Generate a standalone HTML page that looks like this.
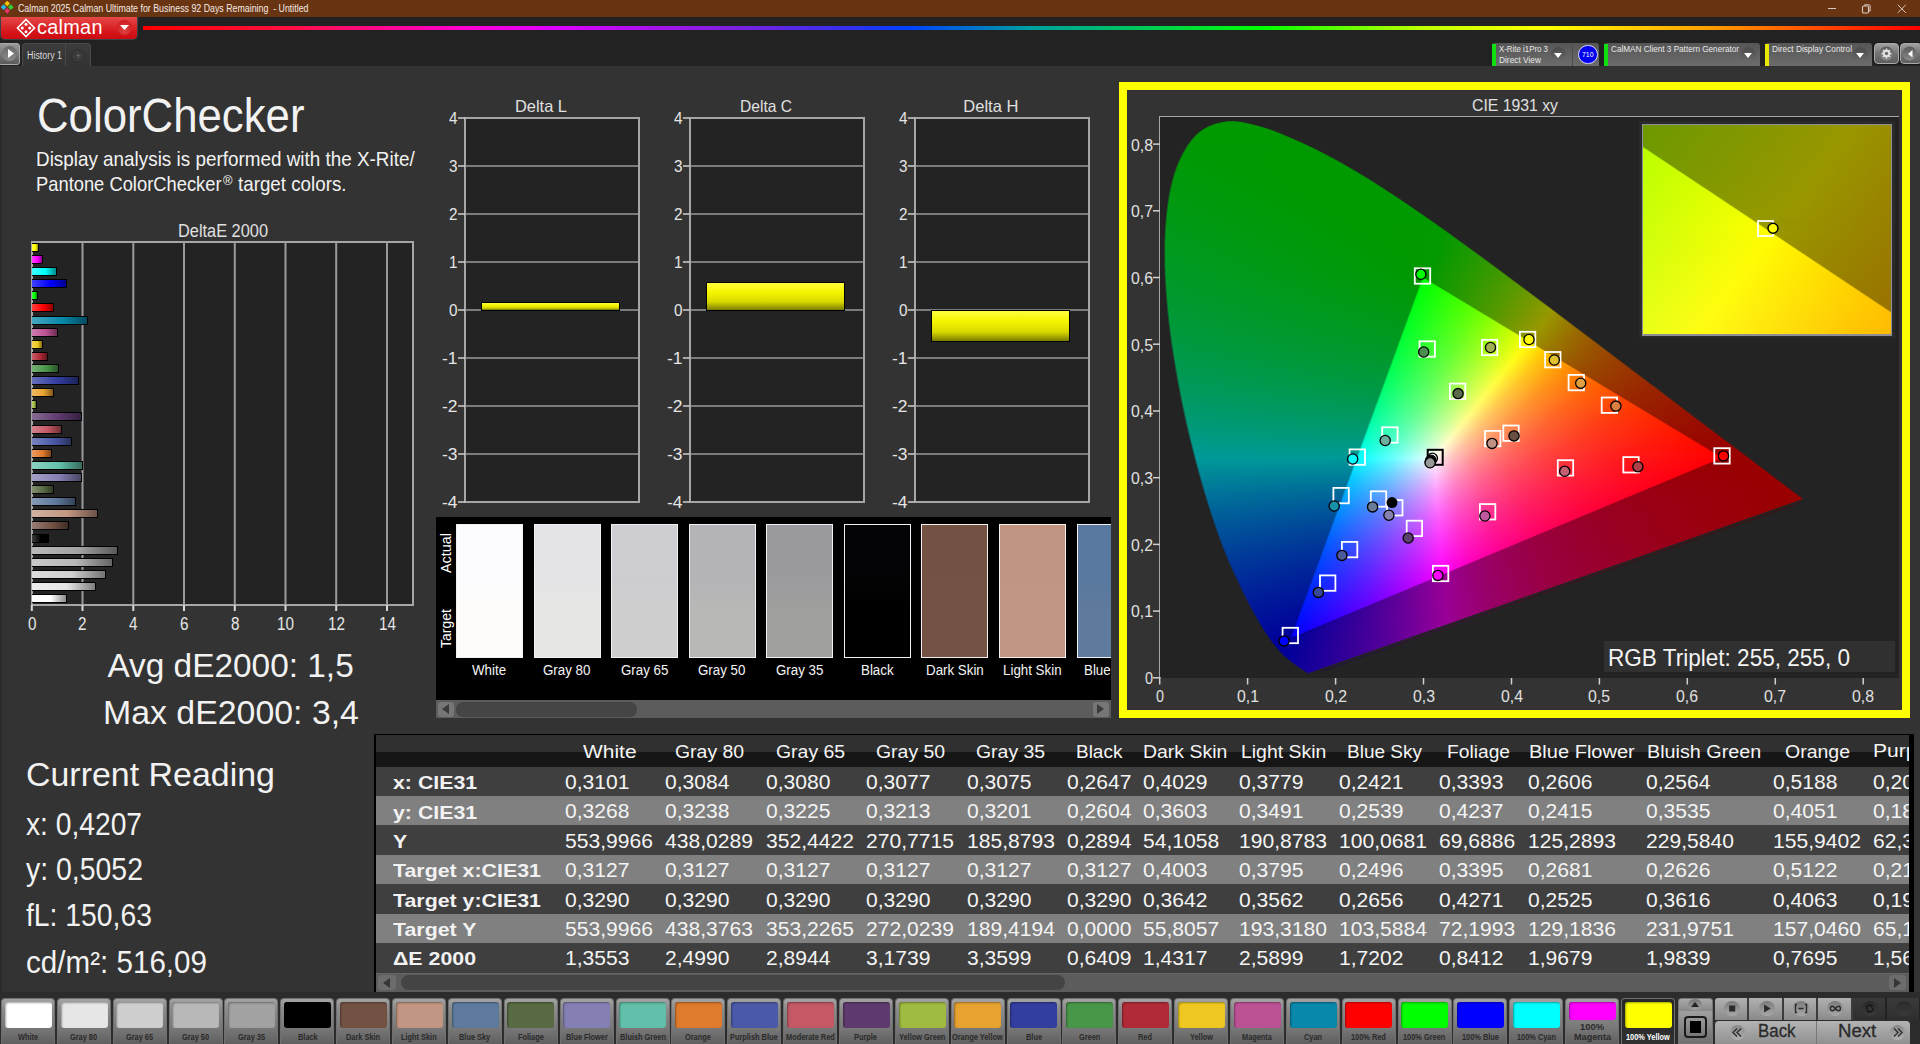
<!DOCTYPE html><html><head><meta charset="utf-8"><title>Calman</title><style>
*{margin:0;padding:0;box-sizing:border-box}
html,body{width:1920px;height:1044px;overflow:hidden;background:#333;font-family:"Liberation Sans",sans-serif}
.a{position:absolute}
.t{position:absolute;white-space:nowrap;transform-origin:0 0;font-family:"Liberation Sans",sans-serif}
svg{position:absolute;overflow:visible}
.cs{position:absolute;left:1161px;width:738px;height:1px}
.ci{position:absolute;left:1643px;width:248px;height:1px}
</style></head><body>
<div class="a" style="left:0;top:0;width:1920px;height:17px;background:#693412"></div>
<svg style="left:0;top:0" width="16" height="16" viewBox="0 0 16 16"><rect x="5.2" y="1.6" width="4" height="4" fill="#f2c500" transform="rotate(45 7.2 3.6)"/><rect x="1.6" y="5.2" width="4" height="4" fill="#28b8f0" transform="rotate(45 3.6 7.2)"/><rect x="8.8" y="5.2" width="4" height="4" fill="#30d030" transform="rotate(45 10.8 7.2)"/><rect x="5.2" y="8.8" width="4" height="4" fill="#e8306a" transform="rotate(45 7.2 10.8)"/></svg>
<div class="t" style="left:17.5px;top:3.4px;font-size:10.5px;line-height:10.5px;color:#f4ebe4;transform:scaleX(0.8394);">Calman 2025 Calman Ultimate for Business 92 Days Remaining&#160; - Untitled</div>
<div class="a" style="left:1828px;top:7.5px;width:7.5px;height:1px;background:#dccbbf"></div>
<svg style="left:1861px;top:3px" width="11" height="11"><rect x="1.5" y="3" width="6" height="7" rx="1.2" fill="none" stroke="#dccbbf" stroke-width="1.1"/><path d="M3.5 2.6V1.8h4.6a1 1 0 0 1 1 1v5.2H8" fill="none" stroke="#dccbbf" stroke-width="1"/></svg>
<svg style="left:1897px;top:3.5px" width="10" height="10"><path d="M0.8 0.8L8.8 8.8M8.8 0.8L0.8 8.8" stroke="#dccbbf" stroke-width="1"/></svg>
<div class="a" style="left:0;top:17px;width:1920px;height:49px;background:#222"></div>
<div class="a" style="left:0;top:17px;width:138px;height:23px;background:linear-gradient(#e64848,#d41418 70%,#cc0c10);border:1px solid #3a4448;border-top:none;border-radius:0 0 5px 5px"></div>
<svg style="left:16px;top:18px" width="20" height="20" viewBox="0 0 20 20" fill="none" stroke="#fff" stroke-width="1.6"><path d="M10 1.5L18.5 10L10 18.5L1.5 10Z"/><circle cx="10" cy="6.3" r="1.5" fill="#fff" stroke="none"/><circle cx="6.3" cy="10" r="1.5" fill="#fff" stroke="none"/><circle cx="13.7" cy="10" r="1.5" fill="#fff" stroke="none"/><circle cx="10" cy="13.7" r="1.5" fill="#fff" stroke="none"/></svg>
<div class="t" style="left:37.0px;top:16.7px;font-size:20.0px;line-height:20.0px;color:#fff;transform:scaleX(0.9926);letter-spacing:0.3px">calman</div>
<div class="a" style="left:117px;top:20px;width:15px;height:15px;border-radius:50%;background:radial-gradient(circle at 50% 70%,#e04040,#c81418)"></div>
<svg style="left:120px;top:25px" width="9" height="6"><path d="M0 0H9L4.5 5Z" fill="#fff"/></svg>
<div class="a" style="left:143px;top:26px;width:1777px;height:4px;background:linear-gradient(90deg,#ff0000 0%,#ff1040 8%,#ff00d0 18%,#e000ff 23%,#8020e0 33%,#3030f0 40%,#0040ff 43%,#00a0a0 50%,#00d050 57%,#00ff00 63%,#c0ff00 72%,#ffff00 79%,#ffa000 88%,#ff4000 95%,#ff0000 100%)"></div>
<div class="a" style="left:-2px;top:43px;width:22px;height:22px;border-radius:3px;background:linear-gradient(#9a9a9a,#5a5a5a);border:1px solid #aaa"></div>
<div class="a" style="left:2px;top:46px;width:15px;height:15px;border-radius:50%;background:linear-gradient(#6a6a6a,#8a8a8a)"></div>
<svg style="left:8px;top:49px" width="6" height="9"><path d="M0 0L6 4.5L0 9Z" fill="#fff"/></svg>
<div class="a" style="left:22px;top:43px;width:69px;height:23px;border-radius:4px 4px 0 0;background:linear-gradient(#3c3c3c,#333);border:1px solid #4a4a4a;border-bottom:none"></div>
<div class="a" style="left:65px;top:44px;width:1px;height:22px;background:#4a4a4a"></div>
<div class="t" style="left:26.5px;top:50.6px;font-size:10.0px;line-height:10.0px;color:#d8d8d8;transform:scaleX(0.8871);">History 1</div>
<div class="a" style="left:71px;top:49px;width:14px;height:14px;border-radius:50%;background:#3a3a3a;border:1px solid #2c2c2c"></div>
<div class="t" style="left:75.5px;top:52.4px;font-size:9.0px;line-height:9.0px;color:#777;">+</div>
<div class="a" style="left:1492px;top:43px;width:107px;height:23px;border-radius:3px 3px 0 0;background:linear-gradient(#565656,#6c6c6c)"></div>
<div class="a" style="left:1492px;top:44px;width:4px;height:22px;background:#10e010"></div>
<div class="t" style="left:1498.5px;top:45.4px;font-size:8.5px;line-height:8.5px;color:#e8e8e8;transform:scaleX(0.9261);">X-Rite i1Pro 3</div>
<div class="t" style="left:1498.5px;top:56.2px;font-size:8.5px;line-height:8.5px;color:#e8e8e8;transform:scaleX(0.9806);">Direct View</div>
<div class="a" style="left:1550.5px;top:47px;width:15px;height:15px;border-radius:50%;background:linear-gradient(#4a4a4a,#6a6a6a)"></div>
<svg style="left:1554.0px;top:53px" width="8" height="5"><path d="M0 0H8L4 5Z" fill="#fff"/></svg>
<div class="a" style="left:1572px;top:45px;width:1px;height:21px;background:#4a4a4a"></div>
<div class="a" style="left:1578px;top:44.5px;width:19.5px;height:19.5px;border-radius:50%;background:#0000f0;border:1px solid #d8d8ff"></div>
<div class="t" style="left:1582.0px;top:50.8px;font-size:8.0px;line-height:8.0px;color:#fff;transform:scaleX(0.8615);">710</div>
<div class="a" style="left:1604px;top:43px;width:156px;height:23px;border-radius:3px 3px 0 0;background:linear-gradient(#565656,#6c6c6c)"></div>
<div class="a" style="left:1604px;top:44px;width:4px;height:22px;background:#10e010"></div>
<div class="t" style="left:1610.5px;top:45.4px;font-size:8.5px;line-height:8.5px;color:#e8e8e8;transform:scaleX(0.9608);">CalMAN Client 3 Pattern Generator</div>
<div class="a" style="left:1740.5px;top:47px;width:15px;height:15px;border-radius:50%;background:linear-gradient(#4a4a4a,#6a6a6a)"></div>
<svg style="left:1744.0px;top:53px" width="8" height="5"><path d="M0 0H8L4 5Z" fill="#fff"/></svg>
<div class="a" style="left:1765px;top:43px;width:107px;height:23px;border-radius:3px 3px 0 0;background:linear-gradient(#565656,#6c6c6c)"></div>
<div class="a" style="left:1765px;top:44px;width:4px;height:22px;background:#e8e800"></div>
<div class="t" style="left:1771.5px;top:45.4px;font-size:8.5px;line-height:8.5px;color:#e8e8e8;transform:scaleX(0.9733);">Direct Display Control</div>
<div class="a" style="left:1852.5px;top:47px;width:15px;height:15px;border-radius:50%;background:linear-gradient(#4a4a4a,#6a6a6a)"></div>
<svg style="left:1856.0px;top:53px" width="8" height="5"><path d="M0 0H8L4 5Z" fill="#fff"/></svg>
<div class="a" style="left:1874px;top:43px;width:25px;height:21px;border-radius:4px;background:linear-gradient(#a0a0a0,#707070 55%,#5e5e5e);border:1px solid #a8a8a8;box-shadow:0 0 0 1px #1a1a1a"></div>
<svg style="left:1879px;top:46px" width="15" height="15" viewBox="0 0 15 15"><defs><linearGradient id="gg" x1="0" y1="0" x2="0" y2="1"><stop offset="0" stop-color="#5a5a5a"/><stop offset="1" stop-color="#8a8a8a"/></linearGradient></defs><circle cx="7.5" cy="7.5" r="7" fill="url(#gg)"/><rect x="6.6" y="2.6" width="1.8" height="2.4" fill="#e6e6e6" transform="rotate(0 7.5 7.5)"/><rect x="6.6" y="2.6" width="1.8" height="2.4" fill="#e6e6e6" transform="rotate(45 7.5 7.5)"/><rect x="6.6" y="2.6" width="1.8" height="2.4" fill="#e6e6e6" transform="rotate(90 7.5 7.5)"/><rect x="6.6" y="2.6" width="1.8" height="2.4" fill="#e6e6e6" transform="rotate(135 7.5 7.5)"/><rect x="6.6" y="2.6" width="1.8" height="2.4" fill="#e6e6e6" transform="rotate(180 7.5 7.5)"/><rect x="6.6" y="2.6" width="1.8" height="2.4" fill="#e6e6e6" transform="rotate(225 7.5 7.5)"/><rect x="6.6" y="2.6" width="1.8" height="2.4" fill="#e6e6e6" transform="rotate(270 7.5 7.5)"/><rect x="6.6" y="2.6" width="1.8" height="2.4" fill="#e6e6e6" transform="rotate(315 7.5 7.5)"/><circle cx="7.5" cy="7.5" r="3.4" fill="#e6e6e6"/><circle cx="7.5" cy="7.5" r="1.7" fill="#6a6a6a"/></svg>
<div class="a" style="left:1900px;top:43px;width:22px;height:21px;border-radius:4px;background:linear-gradient(#a0a0a0,#707070 55%,#5e5e5e);border:1px solid #a8a8a8;box-shadow:0 0 0 1px #1a1a1a"></div>
<svg style="left:1902px;top:46px" width="15" height="15"><defs><linearGradient id="ga" x1="0" y1="0" x2="0" y2="1"><stop offset="0" stop-color="#5a5a5a"/><stop offset="1" stop-color="#8a8a8a"/></linearGradient></defs><circle cx="7.5" cy="7.5" r="7" fill="url(#ga)"/></svg>
<svg style="left:1907.5px;top:49.5px" width="5" height="8"><path d="M4.5 0L0 4L4.5 7.5Z" fill="#fff"/></svg>
<div class="a" style="left:0;top:66px;width:1920px;height:931px;background:#333"></div>
<div class="a" style="left:0;top:66px;width:2px;height:931px;background:#2a2a2a"></div>
<div class="t" style="left:36.7px;top:91.4px;font-size:48.8px;line-height:48.8px;color:#f2f2f2;transform:scaleX(0.8966);">ColorChecker</div>
<div class="t" style="left:36.3px;top:148.9px;font-size:20.3px;line-height:20.3px;color:#f2f2f2;transform:scaleX(0.9305);">Display analysis is performed with the X-Rite/</div>
<div class="t" style="left:36.3px;top:173.5px;font-size:20.3px;line-height:20.3px;color:#f2f2f2;transform:scaleX(0.9042);">Pantone ColorChecker</div>
<div class="t" style="left:222.8px;top:175.4px;font-size:12.0px;line-height:12.0px;color:#f2f2f2;transform:scaleX(1.0745);">&#174;</div>
<div class="t" style="left:238.0px;top:173.5px;font-size:20.3px;line-height:20.3px;color:#f2f2f2;transform:scaleX(0.9255);">target colors.</div>
<div class="t" style="left:178.0px;top:222.1px;font-size:18.0px;line-height:18.0px;color:#e0e0e0;transform:scaleX(0.9084);">DeltaE 2000</div>
<div class="a" style="left:31px;top:241px;width:383px;height:365px;background:#232323;border:2px solid #a6a6a6"></div>
<svg style="left:0;top:0" width="440" height="640"><line x1="82.5" y1="242" x2="82.5" y2="605" stroke="#9a9a9a" stroke-width="2"/><line x1="133.3" y1="242" x2="133.3" y2="605" stroke="#9a9a9a" stroke-width="2"/><line x1="184.0" y1="242" x2="184.0" y2="605" stroke="#9a9a9a" stroke-width="2"/><line x1="234.8" y1="242" x2="234.8" y2="605" stroke="#9a9a9a" stroke-width="2"/><line x1="285.5" y1="242" x2="285.5" y2="605" stroke="#9a9a9a" stroke-width="2"/><line x1="336.2" y1="242" x2="336.2" y2="605" stroke="#9a9a9a" stroke-width="2"/><line x1="387.0" y1="242" x2="387.0" y2="605" stroke="#9a9a9a" stroke-width="2"/><line x1="31.8" y1="605" x2="31.8" y2="611" stroke="#d8d8d8" stroke-width="2"/><line x1="82.5" y1="605" x2="82.5" y2="611" stroke="#d8d8d8" stroke-width="2"/><line x1="133.3" y1="605" x2="133.3" y2="611" stroke="#d8d8d8" stroke-width="2"/><line x1="184.0" y1="605" x2="184.0" y2="611" stroke="#d8d8d8" stroke-width="2"/><line x1="234.8" y1="605" x2="234.8" y2="611" stroke="#d8d8d8" stroke-width="2"/><line x1="285.5" y1="605" x2="285.5" y2="611" stroke="#d8d8d8" stroke-width="2"/><line x1="336.2" y1="605" x2="336.2" y2="611" stroke="#d8d8d8" stroke-width="2"/><line x1="387.0" y1="605" x2="387.0" y2="611" stroke="#d8d8d8" stroke-width="2"/></svg>
<div class="t" style="left:27.6px;top:616.0px;font-size:17.5px;line-height:17.5px;color:#e6e6e6;transform:scaleX(0.8733);">0</div>
<div class="t" style="left:78.3px;top:616.0px;font-size:17.5px;line-height:17.5px;color:#e6e6e6;transform:scaleX(0.8733);">2</div>
<div class="t" style="left:129.0px;top:616.0px;font-size:17.5px;line-height:17.5px;color:#e6e6e6;transform:scaleX(0.8733);">4</div>
<div class="t" style="left:179.8px;top:616.0px;font-size:17.5px;line-height:17.5px;color:#e6e6e6;transform:scaleX(0.8733);">6</div>
<div class="t" style="left:230.5px;top:616.0px;font-size:17.5px;line-height:17.5px;color:#e6e6e6;transform:scaleX(0.8733);">8</div>
<div class="t" style="left:277.0px;top:616.0px;font-size:17.5px;line-height:17.5px;color:#e6e6e6;transform:scaleX(0.8733);">10</div>
<div class="t" style="left:327.7px;top:616.0px;font-size:17.5px;line-height:17.5px;color:#e6e6e6;transform:scaleX(0.8733);">12</div>
<div class="t" style="left:378.5px;top:616.0px;font-size:17.5px;line-height:17.5px;color:#e6e6e6;transform:scaleX(0.8733);">14</div>
<div class="a" style="left:32px;top:594.0px;width:34.9px;height:9px;border:1.5px solid #000;border-left:none;background:linear-gradient(90deg,#ffffff,#ffffff 55%,#8c8c8c)"></div>
<div class="a" style="left:32px;top:581.9px;width:63.9px;height:9px;border:1.5px solid #000;border-left:none;background:linear-gradient(90deg,#ececec,#e6e6e6 55%,#7f7f7f)"></div>
<div class="a" style="left:32px;top:569.8px;width:73.9px;height:9px;border:1.5px solid #000;border-left:none;background:linear-gradient(90deg,#dbdbdb,#cfcfcf 55%,#727272)"></div>
<div class="a" style="left:32px;top:557.7px;width:81.0px;height:9px;border:1.5px solid #000;border-left:none;background:linear-gradient(90deg,#cacaca,#b8b8b8 55%,#656565)"></div>
<div class="a" style="left:32px;top:545.6px;width:85.7px;height:9px;border:1.5px solid #000;border-left:none;background:linear-gradient(90deg,#b9b9b9,#a2a2a2 55%,#595959)"></div>
<div class="a" style="left:32px;top:533.5px;width:16.8px;height:9px;border:1.5px solid #000;border-left:none;background:linear-gradient(90deg,#404040,#000000 55%,#000000)"></div>
<div class="a" style="left:32px;top:521.3px;width:36.8px;height:9px;border:1.5px solid #000;border-left:none;background:linear-gradient(90deg,#967d73,#735244 55%,#3f2d25)"></div>
<div class="a" style="left:32px;top:509.2px;width:66.2px;height:9px;border:1.5px solid #000;border-left:none;background:linear-gradient(90deg,#d1b0a1,#c29682 55%,#6b5248)"></div>
<div class="a" style="left:32px;top:497.1px;width:44.1px;height:9px;border:1.5px solid #000;border-left:none;background:linear-gradient(90deg,#869bb6,#5e7a9e 55%,#344357)"></div>
<div class="a" style="left:32px;top:485.0px;width:21.8px;height:9px;border:1.5px solid #000;border-left:none;background:linear-gradient(90deg,#829071,#586b42 55%,#303b24)"></div>
<div class="a" style="left:32px;top:472.9px;width:50.4px;height:9px;border:1.5px solid #000;border-left:none;background:linear-gradient(90deg,#a3a0c7,#8480b4 55%,#494663)"></div>
<div class="a" style="left:32px;top:460.8px;width:50.8px;height:9px;border:1.5px solid #000;border-left:none;background:linear-gradient(90deg,#89d0bf,#62c0aa 55%,#366a5e)"></div>
<div class="a" style="left:32px;top:448.7px;width:20.0px;height:9px;border:1.5px solid #000;border-left:none;background:linear-gradient(90deg,#e89b61,#e07a2c 55%,#7b4318)"></div>
<div class="a" style="left:32px;top:436.6px;width:40.1px;height:9px;border:1.5px solid #000;border-left:none;background:linear-gradient(90deg,#7783be,#4a5aa8 55%,#29325c)"></div>
<div class="a" style="left:32px;top:424.5px;width:29.7px;height:9px;border:1.5px solid #000;border-left:none;background:linear-gradient(90deg,#d3828b,#c45864 55%,#6c3037)"></div>
<div class="a" style="left:32px;top:412.4px;width:50.2px;height:9px;border:1.5px solid #000;border-left:none;background:linear-gradient(90deg,#866b92,#5e3a6e 55%,#34203d)"></div>
<div class="a" style="left:32px;top:400.2px;width:5.1px;height:9px;border:1.5px solid #000;border-left:none;background:linear-gradient(90deg,#b8cd70,#a0bc40 55%,#586723)"></div>
<div class="a" style="left:32px;top:388.1px;width:22.3px;height:9px;border:1.5px solid #000;border-left:none;background:linear-gradient(90deg,#eeb964,#e8a230 55%,#80591a)"></div>
<div class="a" style="left:32px;top:376.0px;width:46.9px;height:9px;border:1.5px solid #000;border-left:none;background:linear-gradient(90deg,#656eb8,#323ea0 55%,#1c2258)"></div>
<div class="a" style="left:32px;top:363.9px;width:26.9px;height:9px;border:1.5px solid #000;border-left:none;background:linear-gradient(90deg,#76b076,#489648 55%,#285228)"></div>
<div class="a" style="left:32px;top:351.8px;width:16.0px;height:9px;border:1.5px solid #000;border-left:none;background:linear-gradient(90deg,#c45f6a,#b02a38 55%,#61171f)"></div>
<div class="a" style="left:32px;top:339.7px;width:10.9px;height:9px;border:1.5px solid #000;border-left:none;background:linear-gradient(90deg,#f2d658,#eec820 55%,#836e12)"></div>
<div class="a" style="left:32px;top:327.6px;width:26.4px;height:9px;border:1.5px solid #000;border-left:none;background:linear-gradient(90deg,#cd7daf,#bc5294 55%,#672d51)"></div>
<div class="a" style="left:32px;top:315.5px;width:56.1px;height:9px;border:1.5px solid #000;border-left:none;background:linear-gradient(90deg,#46a6bf,#0888aa 55%,#044b5e)"></div>
<div class="a" style="left:32px;top:303.4px;width:22.3px;height:9px;border:1.5px solid #000;border-left:none;background:linear-gradient(90deg,#ff4040,#ff0000 55%,#8c0000)"></div>
<div class="a" style="left:32px;top:291.2px;width:6.1px;height:9px;border:1.5px solid #000;border-left:none;background:linear-gradient(90deg,#40ff40,#00ff00 55%,#008c00)"></div>
<div class="a" style="left:32px;top:279.1px;width:34.7px;height:9px;border:1.5px solid #000;border-left:none;background:linear-gradient(90deg,#4040ff,#0000ff 55%,#00008c)"></div>
<div class="a" style="left:32px;top:267.0px;width:25.1px;height:9px;border:1.5px solid #000;border-left:none;background:linear-gradient(90deg,#40ffff,#00ffff 55%,#008c8c)"></div>
<div class="a" style="left:32px;top:254.9px;width:10.9px;height:9px;border:1.5px solid #000;border-left:none;background:linear-gradient(90deg,#ff40ff,#ff00ff 55%,#8c008c)"></div>
<div class="a" style="left:32px;top:242.8px;width:6.8px;height:9px;border:1.5px solid #000;border-left:none;background:linear-gradient(90deg,#ffff40,#ffff00 55%,#8c8c00)"></div>
<div class="t" style="left:107.4px;top:648.9px;font-size:33.4px;line-height:33.4px;color:#f2f2f2;">Avg dE2000: 1,5</div>
<div class="t" style="left:102.8px;top:695.9px;font-size:33.4px;line-height:33.4px;color:#f2f2f2;transform:scaleX(1.0138);">Max dE2000: 3,4</div>
<div class="t" style="left:25.9px;top:757.9px;font-size:33.4px;line-height:33.4px;color:#f2f2f2;transform:scaleX(1.0160);">Current Reading</div>
<div class="t" style="left:26.0px;top:809.4px;font-size:30.5px;line-height:30.5px;color:#f2f2f2;transform:scaleX(0.9244);">x: 0,4207</div>
<div class="t" style="left:26.0px;top:854.4px;font-size:30.5px;line-height:30.5px;color:#f2f2f2;transform:scaleX(0.9324);">y: 0,5052</div>
<div class="t" style="left:26.0px;top:900.4px;font-size:30.5px;line-height:30.5px;color:#f2f2f2;transform:scaleX(0.9287);">fL: 150,63</div>
<div class="t" style="left:26.0px;top:947.4px;font-size:30.5px;line-height:30.5px;color:#f2f2f2;transform:scaleX(0.9706);">cd/m&#178;: 516,09</div>
<div class="t" style="left:515.0px;top:98.1px;font-size:16.5px;line-height:16.5px;color:#e0e0e0;transform:scaleX(0.9946);">Delta L</div>
<div class="a" style="left:464.0px;top:117px;width:176px;height:386px;background:#232323;border:2px solid #a6a6a6"></div>
<svg style="left:0;top:0" width="10" height="10"><line x1="458.0" y1="118.0" x2="465.0" y2="118.0" stroke="#d0d0d0" stroke-width="1.5"/><line x1="465.0" y1="166.0" x2="639.0" y2="166.0" stroke="#9a9a9a" stroke-width="1.5"/><line x1="458.0" y1="166.0" x2="465.0" y2="166.0" stroke="#d0d0d0" stroke-width="1.5"/><line x1="465.0" y1="214.0" x2="639.0" y2="214.0" stroke="#9a9a9a" stroke-width="1.5"/><line x1="458.0" y1="214.0" x2="465.0" y2="214.0" stroke="#d0d0d0" stroke-width="1.5"/><line x1="465.0" y1="262.0" x2="639.0" y2="262.0" stroke="#9a9a9a" stroke-width="1.5"/><line x1="458.0" y1="262.0" x2="465.0" y2="262.0" stroke="#d0d0d0" stroke-width="1.5"/><line x1="465.0" y1="310.0" x2="639.0" y2="310.0" stroke="#9a9a9a" stroke-width="1.5"/><line x1="458.0" y1="310.0" x2="465.0" y2="310.0" stroke="#d0d0d0" stroke-width="1.5"/><line x1="465.0" y1="358.0" x2="639.0" y2="358.0" stroke="#9a9a9a" stroke-width="1.5"/><line x1="458.0" y1="358.0" x2="465.0" y2="358.0" stroke="#d0d0d0" stroke-width="1.5"/><line x1="465.0" y1="406.0" x2="639.0" y2="406.0" stroke="#9a9a9a" stroke-width="1.5"/><line x1="458.0" y1="406.0" x2="465.0" y2="406.0" stroke="#d0d0d0" stroke-width="1.5"/><line x1="465.0" y1="454.0" x2="639.0" y2="454.0" stroke="#9a9a9a" stroke-width="1.5"/><line x1="458.0" y1="454.0" x2="465.0" y2="454.0" stroke="#d0d0d0" stroke-width="1.5"/><line x1="458.0" y1="502.0" x2="465.0" y2="502.0" stroke="#d0d0d0" stroke-width="1.5"/></svg>
<div class="t" style="left:449.0px;top:109.9px;font-size:17.0px;line-height:17.0px;color:#e6e6e6;transform:scaleX(0.8990);">4</div>
<div class="t" style="left:449.0px;top:157.9px;font-size:17.0px;line-height:17.0px;color:#e6e6e6;transform:scaleX(0.8990);">3</div>
<div class="t" style="left:449.0px;top:205.9px;font-size:17.0px;line-height:17.0px;color:#e6e6e6;transform:scaleX(0.8990);">2</div>
<div class="t" style="left:449.0px;top:253.9px;font-size:17.0px;line-height:17.0px;color:#e6e6e6;transform:scaleX(0.8990);">1</div>
<div class="t" style="left:449.0px;top:301.9px;font-size:17.0px;line-height:17.0px;color:#e6e6e6;transform:scaleX(0.8990);">0</div>
<div class="t" style="left:442.0px;top:349.9px;font-size:17.0px;line-height:17.0px;color:#e6e6e6;transform:scaleX(1.0254);">-1</div>
<div class="t" style="left:442.0px;top:397.9px;font-size:17.0px;line-height:17.0px;color:#e6e6e6;transform:scaleX(1.0254);">-2</div>
<div class="t" style="left:442.0px;top:445.9px;font-size:17.0px;line-height:17.0px;color:#e6e6e6;transform:scaleX(1.0254);">-3</div>
<div class="t" style="left:442.0px;top:493.9px;font-size:17.0px;line-height:17.0px;color:#e6e6e6;transform:scaleX(1.0254);">-4</div>
<div class="a" style="left:481.0px;top:302.3px;width:139px;height:8.7px;border:1px solid #000;background:linear-gradient(#ffff40,#f4f400 35%,#d8d800 70%,#7a7a00)"></div>
<div class="t" style="left:739.9px;top:98.1px;font-size:16.5px;line-height:16.5px;color:#e0e0e0;transform:scaleX(0.9451);">Delta C</div>
<div class="a" style="left:688.9px;top:117px;width:176px;height:386px;background:#232323;border:2px solid #a6a6a6"></div>
<svg style="left:0;top:0" width="10" height="10"><line x1="682.9" y1="118.0" x2="689.9" y2="118.0" stroke="#d0d0d0" stroke-width="1.5"/><line x1="689.9" y1="166.0" x2="863.9" y2="166.0" stroke="#9a9a9a" stroke-width="1.5"/><line x1="682.9" y1="166.0" x2="689.9" y2="166.0" stroke="#d0d0d0" stroke-width="1.5"/><line x1="689.9" y1="214.0" x2="863.9" y2="214.0" stroke="#9a9a9a" stroke-width="1.5"/><line x1="682.9" y1="214.0" x2="689.9" y2="214.0" stroke="#d0d0d0" stroke-width="1.5"/><line x1="689.9" y1="262.0" x2="863.9" y2="262.0" stroke="#9a9a9a" stroke-width="1.5"/><line x1="682.9" y1="262.0" x2="689.9" y2="262.0" stroke="#d0d0d0" stroke-width="1.5"/><line x1="689.9" y1="310.0" x2="863.9" y2="310.0" stroke="#9a9a9a" stroke-width="1.5"/><line x1="682.9" y1="310.0" x2="689.9" y2="310.0" stroke="#d0d0d0" stroke-width="1.5"/><line x1="689.9" y1="358.0" x2="863.9" y2="358.0" stroke="#9a9a9a" stroke-width="1.5"/><line x1="682.9" y1="358.0" x2="689.9" y2="358.0" stroke="#d0d0d0" stroke-width="1.5"/><line x1="689.9" y1="406.0" x2="863.9" y2="406.0" stroke="#9a9a9a" stroke-width="1.5"/><line x1="682.9" y1="406.0" x2="689.9" y2="406.0" stroke="#d0d0d0" stroke-width="1.5"/><line x1="689.9" y1="454.0" x2="863.9" y2="454.0" stroke="#9a9a9a" stroke-width="1.5"/><line x1="682.9" y1="454.0" x2="689.9" y2="454.0" stroke="#d0d0d0" stroke-width="1.5"/><line x1="682.9" y1="502.0" x2="689.9" y2="502.0" stroke="#d0d0d0" stroke-width="1.5"/></svg>
<div class="t" style="left:673.9px;top:109.9px;font-size:17.0px;line-height:17.0px;color:#e6e6e6;transform:scaleX(0.8990);">4</div>
<div class="t" style="left:673.9px;top:157.9px;font-size:17.0px;line-height:17.0px;color:#e6e6e6;transform:scaleX(0.8990);">3</div>
<div class="t" style="left:673.9px;top:205.9px;font-size:17.0px;line-height:17.0px;color:#e6e6e6;transform:scaleX(0.8990);">2</div>
<div class="t" style="left:673.9px;top:253.9px;font-size:17.0px;line-height:17.0px;color:#e6e6e6;transform:scaleX(0.8990);">1</div>
<div class="t" style="left:673.9px;top:301.9px;font-size:17.0px;line-height:17.0px;color:#e6e6e6;transform:scaleX(0.8990);">0</div>
<div class="t" style="left:666.9px;top:349.9px;font-size:17.0px;line-height:17.0px;color:#e6e6e6;transform:scaleX(1.0254);">-1</div>
<div class="t" style="left:666.9px;top:397.9px;font-size:17.0px;line-height:17.0px;color:#e6e6e6;transform:scaleX(1.0254);">-2</div>
<div class="t" style="left:666.9px;top:445.9px;font-size:17.0px;line-height:17.0px;color:#e6e6e6;transform:scaleX(1.0254);">-3</div>
<div class="t" style="left:666.9px;top:493.9px;font-size:17.0px;line-height:17.0px;color:#e6e6e6;transform:scaleX(1.0254);">-4</div>
<div class="a" style="left:705.9px;top:281.7px;width:139px;height:29.3px;border:1px solid #000;background:linear-gradient(#ffff40,#f4f400 35%,#d8d800 70%,#7a7a00)"></div>
<div class="t" style="left:963.3px;top:98.1px;font-size:16.5px;line-height:16.5px;color:#e0e0e0;">Delta H</div>
<div class="a" style="left:913.8px;top:117px;width:176px;height:386px;background:#232323;border:2px solid #a6a6a6"></div>
<svg style="left:0;top:0" width="10" height="10"><line x1="907.8" y1="118.0" x2="914.8" y2="118.0" stroke="#d0d0d0" stroke-width="1.5"/><line x1="914.8" y1="166.0" x2="1088.8" y2="166.0" stroke="#9a9a9a" stroke-width="1.5"/><line x1="907.8" y1="166.0" x2="914.8" y2="166.0" stroke="#d0d0d0" stroke-width="1.5"/><line x1="914.8" y1="214.0" x2="1088.8" y2="214.0" stroke="#9a9a9a" stroke-width="1.5"/><line x1="907.8" y1="214.0" x2="914.8" y2="214.0" stroke="#d0d0d0" stroke-width="1.5"/><line x1="914.8" y1="262.0" x2="1088.8" y2="262.0" stroke="#9a9a9a" stroke-width="1.5"/><line x1="907.8" y1="262.0" x2="914.8" y2="262.0" stroke="#d0d0d0" stroke-width="1.5"/><line x1="914.8" y1="310.0" x2="1088.8" y2="310.0" stroke="#9a9a9a" stroke-width="1.5"/><line x1="907.8" y1="310.0" x2="914.8" y2="310.0" stroke="#d0d0d0" stroke-width="1.5"/><line x1="914.8" y1="358.0" x2="1088.8" y2="358.0" stroke="#9a9a9a" stroke-width="1.5"/><line x1="907.8" y1="358.0" x2="914.8" y2="358.0" stroke="#d0d0d0" stroke-width="1.5"/><line x1="914.8" y1="406.0" x2="1088.8" y2="406.0" stroke="#9a9a9a" stroke-width="1.5"/><line x1="907.8" y1="406.0" x2="914.8" y2="406.0" stroke="#d0d0d0" stroke-width="1.5"/><line x1="914.8" y1="454.0" x2="1088.8" y2="454.0" stroke="#9a9a9a" stroke-width="1.5"/><line x1="907.8" y1="454.0" x2="914.8" y2="454.0" stroke="#d0d0d0" stroke-width="1.5"/><line x1="907.8" y1="502.0" x2="914.8" y2="502.0" stroke="#d0d0d0" stroke-width="1.5"/></svg>
<div class="t" style="left:898.8px;top:109.9px;font-size:17.0px;line-height:17.0px;color:#e6e6e6;transform:scaleX(0.8990);">4</div>
<div class="t" style="left:898.8px;top:157.9px;font-size:17.0px;line-height:17.0px;color:#e6e6e6;transform:scaleX(0.8990);">3</div>
<div class="t" style="left:898.8px;top:205.9px;font-size:17.0px;line-height:17.0px;color:#e6e6e6;transform:scaleX(0.8990);">2</div>
<div class="t" style="left:898.8px;top:253.9px;font-size:17.0px;line-height:17.0px;color:#e6e6e6;transform:scaleX(0.8990);">1</div>
<div class="t" style="left:898.8px;top:301.9px;font-size:17.0px;line-height:17.0px;color:#e6e6e6;transform:scaleX(0.8990);">0</div>
<div class="t" style="left:891.8px;top:349.9px;font-size:17.0px;line-height:17.0px;color:#e6e6e6;transform:scaleX(1.0254);">-1</div>
<div class="t" style="left:891.8px;top:397.9px;font-size:17.0px;line-height:17.0px;color:#e6e6e6;transform:scaleX(1.0254);">-2</div>
<div class="t" style="left:891.8px;top:445.9px;font-size:17.0px;line-height:17.0px;color:#e6e6e6;transform:scaleX(1.0254);">-3</div>
<div class="t" style="left:891.8px;top:493.9px;font-size:17.0px;line-height:17.0px;color:#e6e6e6;transform:scaleX(1.0254);">-4</div>
<div class="a" style="left:930.8px;top:309.5px;width:139px;height:32.7px;border:1px solid #000;background:linear-gradient(#ffff40,#f4f400 35%,#d8d800 70%,#7a7a00)"></div>
<div class="a" style="left:436px;top:517px;width:675px;height:184px;background:#000"></div>
<div class="a" style="left:436px;top:700px;width:675px;height:18px;background:#5c5c5c"></div>
<div class="a" style="left:456px;top:701.5px;width:181px;height:15px;border-radius:7px;background:#454545"></div>
<div class="a" style="left:438px;top:701.5px;width:16px;height:15px;border-radius:3px;background:#767676"></div>
<svg style="left:442px;top:704px" width="7" height="10"><path d="M7 0L0 5L7 10Z" fill="#3a3a3a"/></svg>
<div class="a" style="left:1093px;top:701.5px;width:16px;height:15px;border-radius:3px;background:#767676"></div>
<svg style="left:1097px;top:704px" width="7" height="10"><path d="M0 0L7 5L0 10Z" fill="#3a3a3a"/></svg>
<div class="t" style="left:438.5px;top:573.3px;font-size:14.5px;line-height:14.5px;color:#fff;transform:rotate(-90deg) scaleX(0.988);transform-origin:0 0">Actual</div>
<div class="t" style="left:438.5px;top:647.8px;font-size:14.5px;line-height:14.5px;color:#fff;transform:rotate(-90deg) scaleX(0.963);transform-origin:0 0">Target</div>
<div class="a" style="left:436px;top:517px;width:675px;height:184px;overflow:hidden">
<div class="a" style="left:19.9px;top:6.5px;width:67px;height:134px;border:1.5px solid #f0f0f0;background:linear-gradient(#fcfcff,#fcfcff 35%,#fefcfa 65%,#fefcfa)"></div>
<div class="a" style="left:97.5px;top:6.5px;width:67px;height:134px;border:1.5px solid #f0f0f0;background:linear-gradient(#e4e4e8,#e4e4e8 35%,#e6e6e4 65%,#e6e6e4)"></div>
<div class="a" style="left:175.0px;top:6.5px;width:67px;height:134px;border:1.5px solid #f0f0f0;background:linear-gradient(#cdcdd2,#cdcdd2 35%,#cfcfcf 65%,#cfcfcf)"></div>
<div class="a" style="left:252.6px;top:6.5px;width:67px;height:134px;border:1.5px solid #f0f0f0;background:linear-gradient(#b4b3b8,#b4b3b8 35%,#b8b8b6 65%,#b8b8b6)"></div>
<div class="a" style="left:330.2px;top:6.5px;width:67px;height:134px;border:1.5px solid #f0f0f0;background:linear-gradient(#9a999e,#9a999e 35%,#a0a09e 65%,#a0a09e)"></div>
<div class="a" style="left:407.8px;top:6.5px;width:67px;height:134px;border:1.5px solid #f0f0f0;background:linear-gradient(#040406,#040406 35%,#000000 65%,#000000)"></div>
<div class="a" style="left:485.3px;top:6.5px;width:67px;height:134px;border:1.5px solid #f0f0f0;background:linear-gradient(#735244,#735244 35%,#745244 65%,#745244)"></div>
<div class="a" style="left:562.9px;top:6.5px;width:67px;height:134px;border:1.5px solid #f0f0f0;background:linear-gradient(#c29482,#c29482 35%,#c39683 65%,#c39683)"></div>
<div class="a" style="left:640.5px;top:6.5px;width:67px;height:134px;border:1.5px solid #f0f0f0;background:linear-gradient(#5878a0,#5878a0 35%,#5e7a9c 65%,#5e7a9c)"></div>
</div>
<div class="a" style="left:436px;top:517px;width:675px;height:184px;overflow:hidden">
<div class="t" style="left:36.4px;top:144.6px;font-size:15.5px;line-height:15.5px;color:#f4f4f4;transform:scaleX(0.8600);">White</div>
<div class="t" style="left:107.3px;top:144.6px;font-size:15.5px;line-height:15.5px;color:#f4f4f4;transform:scaleX(0.8600);">Gray 80</div>
<div class="t" style="left:184.8px;top:144.6px;font-size:15.5px;line-height:15.5px;color:#f4f4f4;transform:scaleX(0.8600);">Gray 65</div>
<div class="t" style="left:262.4px;top:144.6px;font-size:15.5px;line-height:15.5px;color:#f4f4f4;transform:scaleX(0.8600);">Gray 50</div>
<div class="t" style="left:340.0px;top:144.6px;font-size:15.5px;line-height:15.5px;color:#f4f4f4;transform:scaleX(0.8600);">Gray 35</div>
<div class="t" style="left:425.0px;top:144.6px;font-size:15.5px;line-height:15.5px;color:#f4f4f4;transform:scaleX(0.8600);">Black</div>
<div class="t" style="left:489.9px;top:144.6px;font-size:15.5px;line-height:15.5px;color:#f4f4f4;transform:scaleX(0.8600);">Dark Skin</div>
<div class="t" style="left:567.1px;top:144.6px;font-size:15.5px;line-height:15.5px;color:#f4f4f4;transform:scaleX(0.8600);">Light Skin</div>
<div class="t" style="left:647.7px;top:144.6px;font-size:15.5px;line-height:15.5px;color:#f4f4f4;transform:scaleX(0.8600);">Blue Sky</div>
</div>
<div class="a" style="left:1119px;top:82px;width:791px;height:636px;border:8px solid #ffff00;background:#333"></div>
<div class="t" style="left:1471.7px;top:96.6px;font-size:16.5px;line-height:16.5px;color:#e0e0e0;transform:scaleX(0.9568);">CIE 1931 xy</div>
<div class="a" style="left:1159.2px;top:115.6px;width:740px;height:562.9px;background:#232323;border:1.5px solid #a6a6a6"></div>
<div class="a" style="left:0;top:0">
<div class="cs" style="top:117px;background:#232323"></div>
<div class="cs" style="top:118px;background:#232323"></div>
<div class="cs" style="top:119px;background:#232323"></div>
<div class="cs" style="top:120px;background:#232323"></div>
<div class="cs" style="top:121px;background:linear-gradient(90deg,#232323 0px,#232323 62px,#1a401a 64px,#115e11 65px,#115e11 66px,#097b09 67px,#097b09 74px,#115e11 76px,#145714 77px,#1a401a 78px,#1c391c 79px,#232323 80px,#232323 737px)"></div>
<div class="cs" style="top:122px;background:linear-gradient(90deg,#232323 0px,#232323 57px,#1f321f 58px,#184818 59px,#0f650f 60px,#097b09 61px,#009900 62px,#009900 80px,#078307 81px,#0b740b 82px,#115e11 83px,#1a401a 84px,#212a21 85px,#232323 86px,#232323 737px)"></div>
<div class="cs" style="top:123px;background:linear-gradient(90deg,#232323 0px,#232323 53px,#212a21 54px,#184818 55px,#0d6d0d 56px,#048a04 57px,#009900 58px,#009900 85px,#0d6d0d 87px,#1f321f 89px,#232323 90px,#232323 737px)"></div>
<div class="cs" style="top:124px;background:linear-gradient(90deg,#232323 0px,#232323 50px,#212a21 51px,#009900 54px,#009900 89px,#048a04 90px,#1f321f 93px,#232323 94px,#232323 737px)"></div>
<div class="cs" style="top:125px;background:linear-gradient(90deg,#232323 0px,#232323 48px,#1c391c 49px,#0d6d0d 50px,#029202 51px,#009900 52px,#009900 93px,#048a04 94px,#164f16 96px,#212a21 97px,#232323 98px,#232323 737px)"></div>
<div class="cs" style="top:126px;background:linear-gradient(90deg,#232323 0px,#232323 46px,#1a401a 47px,#097b09 48px,#009900 49px,#009900 97px,#078307 98px,#184818 100px,#232323 101px,#232323 737px)"></div>
<div class="cs" style="top:127px;background:linear-gradient(90deg,#232323 0px,#232323 44px,#1a401a 45px,#097b09 46px,#009900 47px,#009900 101px,#0b740b 102px,#145714 103px,#1f321f 104px,#232323 105px,#232323 737px)"></div>
<div class="cs" style="top:128px;background:linear-gradient(90deg,#232323 0px,#232323 42px,#1f321f 43px,#097b09 44px,#009900 45px,#009900 104px,#078307 105px,#145714 106px,#1f321f 107px,#232323 108px,#232323 737px)"></div>
<div class="cs" style="top:129px;background:linear-gradient(90deg,#232323 0px,#232323 41px,#009900 43px,#009900 107px,#078307 108px,#145714 109px,#1f321f 110px,#232323 111px,#232323 737px)"></div>
<div class="cs" style="top:130px;background:linear-gradient(90deg,#232323 0px,#232323 39px,#1c391c 40px,#078307 41px,#009900 42px,#009900 110px,#078307 111px,#164f16 112px,#212a21 113px,#232323 114px,#232323 737px)"></div>
<div class="cs" style="top:131px;background:linear-gradient(90deg,#232323 0px,#232323 38px,#164f16 39px,#029202 40px,#009900 41px,#009900 113px,#1a401a 115px,#232323 116px,#232323 737px)"></div>
<div class="cs" style="top:132px;background:linear-gradient(90deg,#232323 0px,#232323 37px,#0f650f 38px,#009900 39px,#009900 115px,#048a04 116px,#1f321f 118px,#232323 119px,#232323 737px)"></div>
<div class="cs" style="top:133px;background:linear-gradient(90deg,#232323 0px,#232323 35px,#212a21 36px,#0b740b 37px,#009900 38px,#009900 118px,#1a401a 120px,#232323 121px,#232323 737px)"></div>
<div class="cs" style="top:134px;background:linear-gradient(90deg,#232323 0px,#232323 34px,#212a21 35px,#078307 36px,#009900 37px,#009900 120px,#048a04 121px,#212a21 123px,#232323 124px,#232323 737px)"></div>
<div class="cs" style="top:135px;background:linear-gradient(90deg,#232323 0px,#232323 33px,#212a21 34px,#078307 35px,#009900 36px,#009900 122px,#029202 123px,#0d6d0d 124px,#1f321f 125px,#232323 126px,#232323 737px)"></div>
<div class="cs" style="top:136px;background:linear-gradient(90deg,#232323 0px,#232323 32px,#212a21 33px,#078307 34px,#009900 35px,#009900 125px,#097b09 126px,#184818 127px,#232323 128px,#232323 737px)"></div>
<div class="cs" style="top:137px;background:linear-gradient(90deg,#232323 0px,#232323 32px,#0d6d0d 33px,#009900 34px,#009900 127px,#048a04 128px,#212a21 130px,#232323 131px,#232323 737px)"></div>
<div class="cs" style="top:138px;background:linear-gradient(90deg,#232323 0px,#232323 31px,#0d6d0d 32px,#009900 33px,#009900 129px,#029202 130px,#0d6d0d 131px,#1f321f 132px,#232323 133px,#232323 737px)"></div>
<div class="cs" style="top:139px;background:linear-gradient(90deg,#232323 0px,#232323 30px,#164f16 31px,#009900 32px,#009900 132px,#097b09 133px,#1a401a 134px,#232323 135px,#232323 737px)"></div>
<div class="cs" style="top:140px;background:linear-gradient(90deg,#232323 0px,#232323 29px,#1c391d 30px,#009900 31px,#009900 134px,#048a04 135px,#164f16 136px,#212a21 137px,#232323 138px,#232323 737px)"></div>
<div class="cs" style="top:141px;background:linear-gradient(90deg,#232323 0px,#232323 28px,#212a21 29px,#029203 30px,#009901 31px,#009900 136px,#029202 137px,#115e11 138px,#1f321f 139px,#232323 140px,#232323 737px)"></div>
<div class="cs" style="top:142px;background:linear-gradient(90deg,#232323 0px,#232323 28px,#097b0a 29px,#009901 30px,#009900 139px,#0d6d0d 140px,#1f321f 141px,#232323 142px,#232323 737px)"></div>
<div class="cs" style="top:143px;background:linear-gradient(90deg,#232323 0px,#232323 27px,#145714 28px,#009901 29px,#009900 141px,#097b09 142px,#1a401a 143px,#232323 144px,#232323 737px)"></div>
<div class="cs" style="top:144px;background:linear-gradient(90deg,#232323 0px,#232323 26px,#1c391d 27px,#009902 28px,#009900 143px,#097b09 144px,#232323 146px,#232323 737px)"></div>
<div class="cs" style="top:145px;background:linear-gradient(90deg,#232323 0px,#232323 26px,#078308 27px,#009902 28px,#009900 145px,#048a04 146px,#164f16 147px,#232323 148px,#232323 737px)"></div>
<div class="cs" style="top:146px;background:linear-gradient(90deg,#232323 0px,#232323 25px,#009902 27px,#009900 147px,#048a04 148px,#164f16 149px,#212a21 150px,#232323 151px,#232323 737px)"></div>
<div class="cs" style="top:147px;background:linear-gradient(90deg,#232323 0px,#232323 24px,#1f321f 25px,#009902 26px,#009900 149px,#029202 150px,#212a21 152px,#232323 153px,#232323 737px)"></div>
<div class="cs" style="top:148px;background:linear-gradient(90deg,#232323 0px,#232323 24px,#097b0b 25px,#009903 26px,#009900 151px,#029202 152px,#212a21 154px,#232323 155px,#232323 737px)"></div>
<div class="cs" style="top:149px;background:linear-gradient(90deg,#232323 0px,#232323 23px,#184819 24px,#009903 25px,#009900 153px,#029202 154px,#212a21 156px,#232323 157px,#232323 737px)"></div>
<div class="cs" style="top:150px;background:linear-gradient(90deg,#232323 0px,#232323 22px,#212a21 23px,#048a07 24px,#009903 25px,#009900 155px,#029202 156px,#212a21 158px,#232323 159px,#232323 737px)"></div>
<div class="cs" style="top:151px;background:linear-gradient(90deg,#232323 0px,#232323 22px,#009903 24px,#009900 157px,#029202 158px,#212a21 160px,#232323 161px,#232323 737px)"></div>
<div class="cs" style="top:152px;background:linear-gradient(90deg,#232323 0px,#232323 21px,#1f321f 22px,#029206 23px,#009904 24px,#009900 132px,#009900 159px,#029202 160px,#212a21 162px,#232323 163px,#232323 737px)"></div>
<div class="cs" style="top:153px;background:linear-gradient(90deg,#232323 0px,#232323 21px,#0d6d10 22px,#009904 23px,#009900 143px,#009900 161px,#048a04 162px,#164f16 163px,#232323 164px,#232323 737px)"></div>
<div class="cs" style="top:154px;background:linear-gradient(90deg,#232323 0px,#232323 20px,#1f321f 21px,#009904 22px,#009900 150px,#009900 163px,#048a04 164px,#164f16 165px,#232323 166px,#232323 737px)"></div>
<div class="cs" style="top:155px;background:linear-gradient(90deg,#232323 0px,#232323 20px,#0d6d10 21px,#009904 22px,#009900 158px,#009900 165px,#048a04 166px,#164f16 167px,#232323 168px,#232323 737px)"></div>
<div class="cs" style="top:156px;background:linear-gradient(90deg,#232323 0px,#232323 19px,#1f321f 20px,#009905 21px,#009900 113px,#009900 167px,#097b09 168px,#1a401a 169px,#232323 170px,#232323 737px)"></div>
<div class="cs" style="top:157px;background:linear-gradient(90deg,#232323 0px,#232323 19px,#0d6d10 20px,#009905 21px,#009900 115px,#009900 169px,#097b09 170px,#1a401a 171px,#232323 172px,#232323 737px)"></div>
<div class="cs" style="top:158px;background:linear-gradient(90deg,#232323 0px,#232323 18px,#1f321f 19px,#009905 20px,#009900 122px,#009900 171px,#0b740b 172px,#1f321f 173px,#232323 174px,#232323 737px)"></div>
<div class="cs" style="top:159px;background:linear-gradient(90deg,#232323 0px,#232323 18px,#0d6d11 19px,#009906 20px,#009900 106px,#009900 173px,#0d6d0d 174px,#212a21 175px,#232323 176px,#232323 737px)"></div>
<div class="cs" style="top:160px;background:linear-gradient(90deg,#232323 0px,#232323 17px,#212a21 18px,#029208 19px,#009906 20px,#009900 108px,#009900 174px,#029202 175px,#212a21 177px,#232323 178px,#232323 737px)"></div>
<div class="cs" style="top:161px;background:linear-gradient(90deg,#232323 0px,#232323 17px,#009906 19px,#009900 113px,#009900 176px,#029202 177px,#164f16 178px,#232323 179px,#232323 737px)"></div>
<div class="cs" style="top:162px;background:linear-gradient(90deg,#232323 0px,#232323 17px,#048a0a 18px,#009906 19px,#009900 117px,#009900 178px,#048a04 179px,#1a401a 180px,#232323 181px,#232323 737px)"></div>
<div class="cs" style="top:163px;background:linear-gradient(90deg,#232323 0px,#232323 16px,#18481a 17px,#009907 18px,#009900 107px,#009900 180px,#097b09 181px,#1f321f 182px,#232323 183px,#232323 737px)"></div>
<div class="cs" style="top:164px;background:linear-gradient(90deg,#232323 0px,#232323 16px,#097b0e 17px,#009907 18px,#009900 110px,#009900 182px,#0d6d0d 183px,#212a21 184px,#232323 185px,#232323 737px)"></div>
<div class="cs" style="top:165px;background:linear-gradient(90deg,#232323 0px,#232323 15px,#1f3220 16px,#009907 17px,#009900 115px,#009900 183px,#029202 184px,#115e11 185px,#232323 186px,#232323 737px)"></div>
<div class="cs" style="top:166px;background:linear-gradient(90deg,#232323 0px,#232323 15px,#009907 17px,#009900 116px,#009900 185px,#048a04 186px,#1a401a 187px,#232323 188px,#232323 737px)"></div>
<div class="cs" style="top:167px;background:linear-gradient(90deg,#232323 0px,#232323 15px,#048a0b 16px,#009908 17px,#009900 111px,#009900 187px,#097b09 188px,#1f321f 189px,#232323 190px,#232323 737px)"></div>
<div class="cs" style="top:168px;background:linear-gradient(90deg,#232323 0px,#232323 14px,#18481b 15px,#009908 16px,#009900 115px,#009900 189px,#0f650f 190px,#212a21 191px,#232323 192px,#232323 737px)"></div>
<div class="cs" style="top:169px;background:linear-gradient(90deg,#232323 0px,#232323 14px,#0d6d12 15px,#009908 16px,#009900 116px,#009900 190px,#029202 191px,#164f16 192px,#232323 193px,#232323 737px)"></div>
<div class="cs" style="top:170px;background:linear-gradient(90deg,#232323 0px,#232323 14px,#02920a 15px,#009908 16px,#009900 120px,#009900 192px,#097b09 193px,#1a401a 194px,#232323 195px,#232323 737px)"></div>
<div class="cs" style="top:171px;background:linear-gradient(90deg,#232323 0px,#232323 13px,#18481b 14px,#009909 15px,#009900 116px,#009900 194px,#0d6d0d 195px,#212a21 196px,#232323 197px,#232323 737px)"></div>
<div class="cs" style="top:172px;background:linear-gradient(90deg,#232323 0px,#232323 13px,#0d6d13 14px,#009909 15px,#009900 118px,#009900 195px,#029202 196px,#145714 197px,#232323 198px,#232323 737px)"></div>
<div class="cs" style="top:173px;background:linear-gradient(90deg,#232323 0px,#232323 13px,#02920b 14px,#009909 15px,#009900 121px,#009900 197px,#078307 198px,#1a401a 199px,#232323 200px,#232323 737px)"></div>
<div class="cs" style="top:174px;background:linear-gradient(90deg,#232323 0px,#232323 12px,#18481b 13px,#00990a 14px,#009900 119px,#009900 199px,#0d6d0d 200px,#212a21 201px,#232323 202px,#232323 737px)"></div>
<div class="cs" style="top:175px;background:linear-gradient(90deg,#232323 0px,#232323 12px,#0d6d13 13px,#00990a 14px,#009900 121px,#009900 200px,#029202 201px,#145714 202px,#232323 203px,#232323 737px)"></div>
<div class="cs" style="top:176px;background:linear-gradient(90deg,#232323 0px,#232323 12px,#048a0d 13px,#00990a 14px,#009900 123px,#009900 202px,#078307 203px,#1a401a 204px,#232323 205px,#232323 737px)"></div>
<div class="cs" style="top:177px;background:linear-gradient(90deg,#232323 0px,#232323 11px,#1c391e 12px,#00990a 13px,#009900 127px,#009900 204px,#0f650f 205px,#212a21 206px,#232323 207px,#232323 737px)"></div>
<div class="cs" style="top:178px;background:linear-gradient(90deg,#232323 0px,#232323 11px,#145718 12px,#00990b 13px,#009900 124px,#009900 205px,#029202 206px,#164f16 207px,#232323 208px,#232323 737px)"></div>
<div class="cs" style="top:179px;background:linear-gradient(90deg,#232323 0px,#232323 11px,#097b11 12px,#00990b 13px,#009900 127px,#009900 207px,#097b09 208px,#1f321f 209px,#232323 210px,#232323 737px)"></div>
<div class="cs" style="top:180px;background:linear-gradient(90deg,#232323 0px,#232323 11px,#00990b 12px,#009900 130px,#009900 209px,#232323 211px,#232323 737px)"></div>
<div class="cs" style="top:181px;background:linear-gradient(90deg,#232323 0px,#232323 10px,#1a401d 11px,#00990b 12px,#009900 131px,#009900 210px,#048a04 211px,#1a401a 212px,#232323 213px,#232323 737px)"></div>
<div class="cs" style="top:182px;background:linear-gradient(90deg,#232323 0px,#232323 10px,#0f6516 11px,#00990c 12px,#009900 130px,#009900 212px,#0f650f 213px,#212a21 214px,#232323 215px,#232323 737px)"></div>
<div class="cs" style="top:183px;background:linear-gradient(90deg,#232323 0px,#232323 10px,#097b12 11px,#00990c 12px,#009900 133px,#009900 213px,#029202 214px,#184818 215px,#232323 216px,#232323 737px)"></div>
<div class="cs" style="top:184px;background:linear-gradient(90deg,#232323 0px,#232323 10px,#00990c 11px,#009900 135px,#009900 215px,#097b09 216px,#1f321f 217px,#232323 218px,#232323 737px)"></div>
<div class="cs" style="top:185px;background:linear-gradient(90deg,#232323 0px,#232323 9px,#1a401d 10px,#00990c 11px,#009900 137px,#009900 216px,#029202 217px,#145714 218px,#232323 219px,#232323 737px)"></div>
<div class="cs" style="top:186px;background:linear-gradient(90deg,#232323 0px,#232323 9px,#00990d 11px,#009900 137px,#009900 218px,#097b09 219px,#1c391c 220px,#232323 221px,#232323 737px)"></div>
<div class="cs" style="top:187px;background:linear-gradient(90deg,#232323 0px,#232323 9px,#0b7414 10px,#00990d 11px,#009900 138px,#009900 220px,#232323 222px,#232323 737px)"></div>
<div class="cs" style="top:188px;background:linear-gradient(90deg,#232323 0px,#232323 9px,#02920f 10px,#00990d 11px,#009900 141px,#009900 221px,#078307 222px,#1a401a 223px,#232323 224px,#232323 737px)"></div>
<div class="cs" style="top:189px;background:linear-gradient(90deg,#232323 0px,#232323 8px,#1f3220 9px,#00990d 10px,#009900 143px,#009900 223px,#0f650f 224px,#212a21 225px,#232323 226px,#232323 737px)"></div>
<div class="cs" style="top:190px;background:linear-gradient(90deg,#232323 0px,#232323 8px,#18481c 9px,#00990e 10px,#009900 142px,#009900 224px,#048a04 225px,#1a401a 226px,#232323 227px,#232323 737px)"></div>
<div class="cs" style="top:191px;background:linear-gradient(90deg,#232323 0px,#232323 8px,#00990e 10px,#009900 144px,#009900 226px,#0f650f 227px,#212a21 228px,#232323 229px,#232323 737px)"></div>
<div class="cs" style="top:192px;background:linear-gradient(90deg,#232323 0px,#232323 8px,#097b13 9px,#00990e 10px,#009900 147px,#009900 227px,#029202 228px,#184818 229px,#232323 230px,#232323 737px)"></div>
<div class="cs" style="top:193px;background:linear-gradient(90deg,#232323 0px,#232323 8px,#029210 9px,#00990e 10px,#009900 148px,#009900 229px,#0b740b 230px,#212a21 231px,#232323 232px,#232323 737px)"></div>
<div class="cs" style="top:194px;background:linear-gradient(90deg,#232323 0px,#232323 7px,#212a22 8px,#00990f 9px,#009900 148px,#009900 230px,#029202 231px,#184818 232px,#232323 233px,#232323 737px)"></div>
<div class="cs" style="top:195px;background:linear-gradient(90deg,#232323 0px,#232323 7px,#1a401e 8px,#00990f 9px,#009900 151px,#009900 232px,#0b740b 233px,#212a21 234px,#232323 235px,#232323 737px)"></div>
<div class="cs" style="top:196px;background:linear-gradient(90deg,#232323 0px,#232323 7px,#00990f 9px,#009900 152px,#009900 233px,#029202 234px,#184818 235px,#232323 236px,#232323 737px)"></div>
<div class="cs" style="top:197px;background:linear-gradient(90deg,#232323 0px,#232323 7px,#0d6d17 8px,#009910 9px,#009900 153px,#009900 235px,#0b740b 236px,#212a21 237px,#232323 238px,#232323 737px)"></div>
<div class="cs" style="top:198px;background:linear-gradient(90deg,#232323 0px,#232323 7px,#097b15 8px,#009910 9px,#009900 155px,#009900 236px,#029202 237px,#145714 238px,#232323 239px,#232323 737px)"></div>
<div class="cs" style="top:199px;background:linear-gradient(90deg,#232323 0px,#232323 7px,#009910 8px,#009900 158px,#009900 238px,#097b09 239px,#212a21 240px,#232323 241px,#232323 737px)"></div>
<div class="cs" style="top:200px;background:linear-gradient(90deg,#232323 0px,#232323 6px,#212a22 7px,#009910 8px,#009900 159px,#009900 239px,#029202 240px,#184818 241px,#232323 242px,#232323 737px)"></div>
<div class="cs" style="top:201px;background:linear-gradient(90deg,#232323 0px,#232323 6px,#1a401e 7px,#009911 8px,#009900 159px,#009900 241px,#0b740b 242px,#212a21 243px,#232323 244px,#232323 737px)"></div>
<div class="cs" style="top:202px;background:linear-gradient(90deg,#232323 0px,#232323 6px,#14571b 7px,#009911 8px,#009900 162px,#009900 242px,#029202 243px,#184818 244px,#232323 245px,#232323 737px)"></div>
<div class="cs" style="top:203px;background:linear-gradient(90deg,#232323 0px,#232323 6px,#009911 8px,#009900 163px,#009900 244px,#0b740b 245px,#212a21 246px,#232323 247px,#232323 737px)"></div>
<div class="cs" style="top:204px;background:linear-gradient(90deg,#232323 0px,#232323 6px,#097b16 7px,#009911 8px,#009900 165px,#009900 245px,#029202 246px,#184818 247px,#232323 248px,#232323 737px)"></div>
<div class="cs" style="top:205px;background:linear-gradient(90deg,#232323 0px,#232323 6px,#097b16 7px,#009912 8px,#009900 166px,#009900 247px,#0b740b 248px,#212a21 249px,#232323 250px,#232323 737px)"></div>
<div class="cs" style="top:206px;background:linear-gradient(90deg,#232323 0px,#232323 6px,#009912 7px,#009900 167px,#009900 248px,#029202 249px,#1a401a 250px,#232323 251px,#232323 737px)"></div>
<div class="cs" style="top:207px;background:linear-gradient(90deg,#232323 0px,#232323 5px,#212a22 6px,#009912 7px,#009900 170px,#009900 250px,#0f650f 251px,#212a21 252px,#232323 253px,#232323 737px)"></div>
<div class="cs" style="top:208px;background:linear-gradient(90deg,#232323 0px,#232323 5px,#1a401f 6px,#009913 7px,#009900 170px,#009900 251px,#048a04 252px,#1a401a 253px,#232323 254px,#232323 737px)"></div>
<div class="cs" style="top:209px;background:linear-gradient(90deg,#232323 0px,#232323 5px,#18481e 6px,#009913 7px,#009900 172px,#009900 253px,#0f650f 254px,#232323 255px,#232323 737px)"></div>
<div class="cs" style="top:210px;background:linear-gradient(90deg,#232323 0px,#232323 5px,#009913 7px,#009900 174px,#009900 254px,#078307 255px,#1c391c 256px,#232323 257px,#232323 737px)"></div>
<div class="cs" style="top:211px;background:linear-gradient(90deg,#232323 0px,#232323 5px,#009913 7px,#009900 176px,#009900 256px,#232323 258px,#232323 737px)"></div>
<div class="cs" style="top:212px;background:linear-gradient(90deg,#232323 0px,#232323 5px,#097b17 6px,#009914 7px,#009900 176px,#009900 257px,#097b09 258px,#1f321f 259px,#232323 260px,#232323 737px)"></div>
<div class="cs" style="top:213px;background:linear-gradient(90deg,#232323 0px,#232323 5px,#097b18 6px,#009914 7px,#009900 178px,#009900 258px,#029202 259px,#145714 260px,#232323 261px,#232323 737px)"></div>
<div class="cs" style="top:214px;background:linear-gradient(90deg,#232323 0px,#232323 5px,#029215 6px,#009914 7px,#009900 181px,#009900 260px,#097b09 261px,#212a21 262px,#232323 263px,#232323 737px)"></div>
<div class="cs" style="top:215px;background:linear-gradient(90deg,#232323 0px,#232323 5px,#009914 6px,#009900 182px,#009900 261px,#029202 262px,#184818 263px,#232323 264px,#232323 737px)"></div>
<div class="cs" style="top:216px;background:linear-gradient(90deg,#232323 0px,#232323 4px,#212a22 5px,#009915 6px,#009900 183px,#009900 263px,#0d6d0d 264px,#212a21 265px,#232323 266px,#232323 737px)"></div>
<div class="cs" style="top:217px;background:linear-gradient(90deg,#232323 0px,#232323 4px,#1a4020 5px,#009915 6px,#009900 185px,#009900 264px,#048a04 265px,#1a401a 266px,#232323 267px,#232323 737px)"></div>
<div class="cs" style="top:218px;background:linear-gradient(90deg,#232323 0px,#232323 4px,#1a4020 5px,#009915 6px,#009900 186px,#009900 266px,#0f650f 267px,#232323 268px,#232323 737px)"></div>
<div class="cs" style="top:219px;background:linear-gradient(90deg,#232323 0px,#232323 4px,#164f1e 5px,#009916 6px,#009900 187px,#009900 267px,#078307 268px,#1c391c 269px,#232323 270px,#232323 737px)"></div>
<div class="cs" style="top:220px;background:linear-gradient(90deg,#232323 0px,#232323 4px,#009916 6px,#009900 190px,#009900 269px,#145714 270px,#232323 271px,#232323 737px)"></div>
<div class="cs" style="top:221px;background:linear-gradient(90deg,#232323 0px,#232323 4px,#009916 6px,#009900 191px,#009900 270px,#097b09 271px,#212a21 272px,#232323 273px,#232323 737px)"></div>
<div class="cs" style="top:222px;background:linear-gradient(90deg,#232323 0px,#232323 4px,#0d6d1b 5px,#009916 6px,#009900 193px,#009900 271px,#029202 272px,#184818 273px,#232323 274px,#232323 737px)"></div>
<div class="cs" style="top:223px;background:linear-gradient(90deg,#232323 0px,#232323 4px,#097b1a 5px,#009917 6px,#009900 194px,#009900 273px,#0d6d0d 274px,#212a21 275px,#232323 276px,#232323 737px)"></div>
<div class="cs" style="top:224px;background:linear-gradient(90deg,#232323 0px,#232323 4px,#097b1a 5px,#009917 6px,#009900 195px,#009900 274px,#048a04 275px,#1c391c 276px,#232323 277px,#232323 737px)"></div>
<div class="cs" style="top:225px;background:linear-gradient(90deg,#232323 0px,#232323 4px,#078319 5px,#009917 6px,#009900 198px,#009900 276px,#232323 278px,#232323 737px)"></div>
<div class="cs" style="top:226px;background:linear-gradient(90deg,#232323 0px,#232323 4px,#009918 5px,#009900 199px,#009900 277px,#078307 278px,#1f321f 279px,#232323 280px,#232323 737px)"></div>
<div class="cs" style="top:227px;background:linear-gradient(90deg,#232323 0px,#232323 4px,#009918 5px,#009900 200px,#009900 278px,#029202 279px,#164f16 280px,#232323 281px,#232323 737px)"></div>
<div class="cs" style="top:228px;background:linear-gradient(90deg,#232323 0px,#232323 4px,#009918 5px,#009900 202px,#009900 280px,#0b740b 281px,#212a21 282px,#232323 283px,#232323 737px)"></div>
<div class="cs" style="top:229px;background:linear-gradient(90deg,#232323 0px,#232323 3px,#1f3222 4px,#009918 5px,#009900 205px,#019900 281px,#068a04 282px,#1b401a 283px,#232323 284px,#232323 737px)"></div>
<div class="cs" style="top:230px;background:linear-gradient(90deg,#232323 0px,#232323 3px,#1a4020 4px,#009919 5px,#009900 205px,#039900 283px,#232323 285px,#232323 737px)"></div>
<div class="cs" style="top:231px;background:linear-gradient(90deg,#232323 0px,#232323 3px,#1a4021 4px,#009919 5px,#009900 207px,#039900 283px,#049900 284px,#0a8307 285px,#1f321f 286px,#232323 287px,#232323 737px)"></div>
<div class="cs" style="top:232px;background:linear-gradient(90deg,#232323 0px,#232323 3px,#1a4021 4px,#009919 5px,#009900 209px,#039900 283px,#059900 285px,#079202 286px,#184f16 287px,#232323 288px,#232323 737px)"></div>
<div class="cs" style="top:233px;background:linear-gradient(90deg,#232323 0px,#232323 3px,#1a4021 4px,#00991a 5px,#009900 209px,#039900 283px,#069900 287px,#10740b 288px,#212a21 289px,#232323 290px,#232323 737px)"></div>
<div class="cs" style="top:234px;background:linear-gradient(90deg,#232323 0px,#232323 3px,#00991a 5px,#009900 211px,#039900 282px,#079900 288px,#0b8a04 289px,#1c401a 290px,#232323 291px,#232323 737px)"></div>
<div class="cs" style="top:235px;background:linear-gradient(90deg,#232323 0px,#232323 3px,#00991a 5px,#009900 214px,#039900 282px,#099900 290px,#232323 292px,#232323 737px)"></div>
<div class="cs" style="top:236px;background:linear-gradient(90deg,#232323 0px,#232323 3px,#00991a 5px,#009900 215px,#039900 282px,#0a9900 291px,#117b09 292px,#20321f 293px,#232323 294px,#232323 737px)"></div>
<div class="cs" style="top:237px;background:linear-gradient(90deg,#232323 0px,#232323 3px,#00991b 5px,#009900 216px,#039900 281px,#0b9900 292px,#0d9202 293px,#1c4818 294px,#232323 295px,#232323 737px)"></div>
<div class="cs" style="top:238px;background:linear-gradient(90deg,#232323 0px,#232323 3px,#00991b 5px,#009900 218px,#039900 281px,#0d9900 294px,#156d0d 295px,#222a21 296px,#232323 297px,#232323 737px)"></div>
<div class="cs" style="top:239px;background:linear-gradient(90deg,#232323 0px,#232323 3px,#0f651f 4px,#00991b 5px,#009900 219px,#039900 280px,#0e9900 295px,#118a04 296px,#1f391c 297px,#232323 298px,#232323 737px)"></div>
<div class="cs" style="top:240px;background:linear-gradient(90deg,#232323 0px,#232323 3px,#097b1d 4px,#00991c 5px,#009900 221px,#039900 280px,#0f9900 297px,#1b5714 298px,#232323 299px,#232323 737px)"></div>
<div class="cs" style="top:241px;background:linear-gradient(90deg,#232323 0px,#232323 3px,#097b1e 4px,#00991c 5px,#009900 223px,#039900 280px,#119900 298px,#167b09 299px,#222a21 300px,#232323 301px,#232323 737px)"></div>
<div class="cs" style="top:242px;background:linear-gradient(90deg,#232323 0px,#232323 3px,#097b1e 4px,#00991c 5px,#009900 224px,#039900 279px,#129900 299px,#139202 300px,#1e4818 301px,#232323 302px,#232323 737px)"></div>
<div class="cs" style="top:243px;background:linear-gradient(90deg,#232323 0px,#232323 3px,#097b1e 4px,#00991c 5px,#009900 226px,#039900 279px,#139900 301px,#1b650f 302px,#232323 303px,#232323 737px)"></div>
<div class="cs" style="top:244px;background:linear-gradient(90deg,#232323 0px,#232323 3px,#097b1e 4px,#00991d 5px,#009900 228px,#039900 279px,#159900 302px,#188307 303px,#21391c 304px,#232323 305px,#232323 737px)"></div>
<div class="cs" style="top:245px;background:linear-gradient(90deg,#232323 0px,#232323 3px,#097b1f 4px,#00991d 5px,#009900 229px,#039900 278px,#169900 303px,#179202 304px,#1f4f16 305px,#232323 306px,#232323 737px)"></div>
<div class="cs" style="top:246px;background:linear-gradient(90deg,#232323 0px,#232323 3px,#097b1f 4px,#00991d 5px,#009900 231px,#039900 278px,#189900 305px,#1c740b 306px,#222a21 307px,#232323 308px,#232323 737px)"></div>
<div class="cs" style="top:247px;background:linear-gradient(90deg,#232323 0px,#232323 3px,#097b1f 4px,#00991e 5px,#009900 232px,#039900 277px,#199900 306px,#1b8a04 307px,#21391c 308px,#232323 309px,#232323 737px)"></div>
<div class="cs" style="top:248px;background:linear-gradient(90deg,#232323 0px,#232323 3px,#097b1f 4px,#00991e 5px,#009900 235px,#039900 277px,#1b9900 308px,#232323 310px,#232323 737px)"></div>
<div class="cs" style="top:249px;background:linear-gradient(90deg,#232323 0px,#232323 3px,#097b20 4px,#00991e 5px,#009900 236px,#039900 277px,#1c9900 309px,#1e7b09 310px,#232a21 311px,#232323 312px,#232323 737px)"></div>
<div class="cs" style="top:250px;background:linear-gradient(90deg,#232323 0px,#232323 3px,#097b20 4px,#00991f 5px,#009900 237px,#039900 276px,#1d9900 310px,#1e9202 311px,#224818 312px,#232323 313px,#232323 737px)"></div>
<div class="cs" style="top:251px;background:linear-gradient(90deg,#232323 0px,#232323 3px,#097b20 4px,#00991f 5px,#009900 239px,#039900 276px,#1f9900 312px,#21650f 313px,#232323 314px,#232323 737px)"></div>
<div class="cs" style="top:252px;background:linear-gradient(90deg,#232323 0px,#232323 3px,#097b20 4px,#00991f 5px,#009900 240px,#039900 275px,#209900 313px,#218307 314px,#23391c 315px,#232323 316px,#232323 737px)"></div>
<div class="cs" style="top:253px;background:linear-gradient(90deg,#232323 0px,#232323 3px,#097b20 4px,#009920 5px,#009900 242px,#039900 275px,#219900 314px,#229202 315px,#234f16 316px,#232323 317px,#232323 737px)"></div>
<div class="cs" style="top:254px;background:linear-gradient(90deg,#232323 0px,#232323 3px,#097b21 4px,#009920 5px,#009900 244px,#039900 275px,#239900 316px,#246d0d 317px,#232a21 318px,#232323 319px,#232323 737px)"></div>
<div class="cs" style="top:255px;background:linear-gradient(90deg,#232323 0px,#232323 3px,#097b21 4px,#009920 5px,#009900 245px,#039900 274px,#249900 317px,#258a04 318px,#24391c 319px,#232323 320px,#232323 737px)"></div>
<div class="cs" style="top:256px;background:linear-gradient(90deg,#232323 0px,#232323 3px,#097b21 4px,#009920 5px,#009900 247px,#039900 274px,#279900 319px,#255714 320px,#232323 321px,#232323 737px)"></div>
<div class="cs" style="top:257px;background:linear-gradient(90deg,#232323 0px,#232323 3px,#097b21 4px,#009921 5px,#009900 249px,#039900 274px,#289900 320px,#27740b 321px,#232a21 322px,#232323 323px,#232323 737px)"></div>
<div class="cs" style="top:258px;background:linear-gradient(90deg,#232323 0px,#232323 3px,#097b22 4px,#009921 5px,#009900 250px,#039900 273px,#299900 321px,#299202 322px,#25401a 323px,#232323 324px,#232323 737px)"></div>
<div class="cs" style="top:259px;background:linear-gradient(90deg,#232323 0px,#232323 3px,#097b22 4px,#009921 5px,#009900 252px,#039900 273px,#2b9900 323px,#232323 325px,#232323 737px)"></div>
<div class="cs" style="top:260px;background:linear-gradient(90deg,#232323 0px,#232323 3px,#097b22 4px,#009922 5px,#009900 253px,#049900 274px,#2d9900 324px,#2b7b09 325px,#242a21 326px,#232323 327px,#232323 737px)"></div>
<div class="cs" style="top:261px;background:linear-gradient(90deg,#232323 0px,#232323 3px,#097b22 4px,#009922 5px,#009900 255px,#049900 273px,#2e9900 325px,#2e9202 326px,#274818 327px,#232323 328px,#232323 737px)"></div>
<div class="cs" style="top:262px;background:linear-gradient(90deg,#232323 0px,#232323 3px,#097b23 4px,#009922 5px,#009901 234px,#039900 272px,#309900 327px,#2b650f 328px,#232323 329px,#232323 737px)"></div>
<div class="cs" style="top:263px;background:linear-gradient(90deg,#232323 0px,#232323 3px,#097b23 4px,#009923 5px,#009900 258px,#059900 274px,#319900 328px,#2f8307 329px,#25321f 330px,#232323 331px,#232323 737px)"></div>
<div class="cs" style="top:264px;background:linear-gradient(90deg,#232323 0px,#232323 3px,#097b23 4px,#009923 5px,#009900 259px,#069900 275px,#339900 329px,#339202 330px,#284818 331px,#232323 332px,#232323 737px)"></div>
<div class="cs" style="top:265px;background:linear-gradient(90deg,#232323 0px,#232323 3px,#097b23 4px,#009923 5px,#009902 234px,#039900 271px,#359900 331px,#2f6d0d 332px,#242a21 333px,#232323 334px,#232323 737px)"></div>
<div class="cs" style="top:266px;background:linear-gradient(90deg,#232323 0px,#232323 3px,#097b24 4px,#009924 5px,#009900 263px,#319900 326px,#369900 332px,#338307 333px,#27391c 334px,#232323 335px,#232323 737px)"></div>
<div class="cs" style="top:267px;background:linear-gradient(90deg,#232323 0px,#232323 3px,#0f6524 4px,#009924 5px,#009901 242px,#039900 270px,#389900 333px,#379202 334px,#2b4f16 335px,#232323 336px,#232323 737px)"></div>
<div class="cs" style="top:268px;background:linear-gradient(90deg,#232323 0px,#232323 3px,#009924 5px,#009903 234px,#039900 269px,#3a9900 335px,#326d0d 336px,#252a21 337px,#232323 338px,#232323 737px)"></div>
<div class="cs" style="top:269px;background:linear-gradient(90deg,#232323 0px,#232323 3px,#009925 5px,#009901 246px,#039900 269px,#3c9900 336px,#388307 337px,#28391c 338px,#232323 339px,#232323 737px)"></div>
<div class="cs" style="top:270px;background:linear-gradient(90deg,#232323 0px,#232323 3px,#009925 5px,#009902 242px,#039900 269px,#3d9900 337px,#3c9202 338px,#2d4f16 339px,#232323 340px,#232323 737px)"></div>
<div class="cs" style="top:271px;background:linear-gradient(90deg,#232323 0px,#232323 3px,#009925 5px,#009905 228px,#039900 268px,#3f9900 339px,#37740b 340px,#252a21 341px,#232323 342px,#232323 737px)"></div>
<div class="cs" style="top:272px;background:linear-gradient(90deg,#232323 0px,#232323 3px,#009926 5px,#009902 246px,#039900 268px,#419900 340px,#3e8a04 341px,#29391c 342px,#232323 343px,#232323 737px)"></div>
<div class="cs" style="top:273px;background:linear-gradient(90deg,#232323 0px,#232323 3px,#009926 5px,#009904 237px,#039900 268px,#439900 342px,#325714 343px,#232323 344px,#232323 737px)"></div>
<div class="cs" style="top:274px;background:linear-gradient(90deg,#232323 0px,#232323 3px,#1a4024 4px,#009926 5px,#009905 234px,#039900 267px,#459900 343px,#3b740b 344px,#252a21 345px,#232323 346px,#232323 737px)"></div>
<div class="cs" style="top:275px;background:linear-gradient(90deg,#232323 0px,#232323 3px,#1a4024 4px,#009927 5px,#009903 246px,#039900 267px,#469900 344px,#438a04 345px,#2a391c 346px,#232323 347px,#232323 737px)"></div>
<div class="cs" style="top:276px;background:linear-gradient(90deg,#232323 0px,#232323 3px,#1a4024 4px,#009927 5px,#009905 237px,#039900 266px,#499900 346px,#345714 347px,#232323 348px,#232323 737px)"></div>
<div class="cs" style="top:277px;background:linear-gradient(90deg,#232323 0px,#232323 3px,#1a4024 4px,#009927 5px,#009907 229px,#009900 261px,#00ac00 262px,#019900 263px,#4a9900 346px,#4b9900 347px,#3f740b 348px,#262a21 349px,#232323 350px,#232323 737px)"></div>
<div class="cs" style="top:278px;background:linear-gradient(90deg,#232323 0px,#232323 3px,#1a4024 4px,#009928 5px,#009905 241px,#009901 261px,#00f201 262px,#02f200 263px,#02b200 264px,#039900 265px,#4c9900 348px,#488a04 349px,#2b391c 350px,#232323 351px,#232323 737px)"></div>
<div class="cs" style="top:279px;background:linear-gradient(90deg,#232323 0px,#232323 4px,#009928 5px,#009907 232px,#009901 260px,#00ac01 261px,#01ff01 262px,#04ff00 264px,#04df00 265px,#04a600 266px,#049900 267px,#4f9900 350px,#375714 351px,#232323 352px,#232323 737px)"></div>
<div class="cs" style="top:280px;background:linear-gradient(90deg,#232323 0px,#232323 4px,#009929 5px,#009905 244px,#009901 260px,#00d202 261px,#01ff02 262px,#05ff01 265px,#06f900 266px,#069900 268px,#509900 351px,#43740b 352px,#262a21 353px,#232323 354px,#232323 737px)"></div>
<div class="cs" style="top:281px;background:linear-gradient(90deg,#232323 0px,#232323 4px,#009929 5px,#009906 241px,#009902 260px,#01f903 261px,#03ff02 263px,#08ff01 267px,#09f200 268px,#08b200 269px,#079900 270px,#529900 352px,#4d8a04 353px,#2c391c 354px,#232323 355px,#232323 737px)"></div>
<div class="cs" style="top:282px;background:linear-gradient(90deg,#232323 0px,#232323 4px,#009929 5px,#009908 233px,#009902 259px,#00b903 260px,#01ff03 261px,#0cff00 269px,#0bdf00 270px,#09a600 271px,#099900 272px,#559900 354px,#232323 356px,#232323 737px)"></div>
<div class="cs" style="top:283px;background:linear-gradient(90deg,#232323 0px,#232323 4px,#048a29 5px,#009929 6px,#009909 229px,#009903 259px,#00d904 260px,#02ff04 261px,#0eff01 270px,#0ff900 271px,#0b9900 273px,#569900 355px,#4a7b09 356px,#262a21 357px,#232323 358px,#232323 737px)"></div>
<div class="cs" style="top:284px;background:linear-gradient(90deg,#232323 0px,#232323 4px,#097b28 5px,#00992a 6px,#009907 242px,#009903 258px,#009f03 259px,#01ff05 260px,#11ff01 272px,#11f200 273px,#0eb200 274px,#0d9900 275px,#589900 356px,#569202 357px,#31401a 358px,#232323 359px,#232323 737px)"></div>
<div class="cs" style="top:285px;background:linear-gradient(90deg,#232323 0px,#232323 4px,#097b28 5px,#00992a 6px,#009909 233px,#009904 258px,#00bf04 259px,#01ff05 260px,#14ff00 274px,#12d900 275px,#0e9f00 276px,#0f9900 278px,#5b9900 358px,#232323 360px,#232323 737px)"></div>
<div class="cs" style="top:286px;background:linear-gradient(90deg,#232323 0px,#232323 4px,#097b29 5px,#00992b 6px,#009907 245px,#009904 258px,#00e606 259px,#02ff06 260px,#16ff01 275px,#17f900 276px,#109900 278px,#5a9900 356px,#5d9900 359px,#4f7b09 360px,#272a21 361px,#232323 362px,#232323 737px)"></div>
<div class="cs" style="top:287px;background:linear-gradient(90deg,#232323 0px,#232323 4px,#0d6d28 5px,#00992b 6px,#009909 237px,#009905 257px,#00a605 258px,#01ff07 259px,#19ff01 277px,#19ec00 278px,#14b200 279px,#129900 280px,#5f9900 360px,#5c9202 361px,#32401a 362px,#232323 363px,#232323 737px)"></div>
<div class="cs" style="top:288px;background:linear-gradient(90deg,#232323 0px,#232323 4px,#00992b 6px,#00990a 234px,#009905 257px,#01ff08 259px,#1dff00 279px,#1ad900 280px,#149f00 281px,#159900 283px,#619900 362px,#232323 364px,#232323 737px)"></div>
<div class="cs" style="top:289px;background:linear-gradient(90deg,#232323 0px,#232323 4px,#00992c 6px,#009909 241px,#009905 257px,#00f208 258px,#02ff08 259px,#1fff01 280px,#1ff900 281px,#159900 283px,#639900 363px,#547b09 364px,#272a21 365px,#232323 366px,#232323 737px)"></div>
<div class="cs" style="top:290px;background:linear-gradient(90deg,#232323 0px,#232323 4px,#00992c 6px,#00990a 238px,#009906 256px,#00ac06 257px,#01ff09 258px,#22ff01 282px,#21ec00 283px,#1ab200 284px,#179900 285px,#659900 364px,#629202 365px,#34401a 366px,#232323 367px,#232323 737px)"></div>
<div class="cs" style="top:291px;background:linear-gradient(90deg,#232323 0px,#232323 4px,#1a4025 5px,#00992c 6px,#00990c 229px,#009906 256px,#00d909 257px,#01ff0a 258px,#26ff00 284px,#21d900 285px,#199f00 286px,#1a9900 288px,#689900 366px,#232323 368px,#232323 737px)"></div>
<div class="cs" style="top:292px;background:linear-gradient(90deg,#232323 0px,#232323 4px,#1a4025 5px,#00992d 6px,#00990a 242px,#009907 256px,#01f90b 257px,#03ff0a 259px,#28ff01 285px,#28f900 286px,#1b9900 288px,#679900 364px,#6a9900 367px,#597b09 368px,#282a21 369px,#232323 370px,#232323 737px)"></div>
<div class="cs" style="top:293px;background:linear-gradient(90deg,#232323 0px,#232323 4px,#1a4026 5px,#00992d 6px,#00990c 233px,#009907 255px,#00b909 256px,#01ff0b 257px,#2cff01 287px,#2aec00 288px,#21b200 289px,#1d9900 290px,#6c9900 368px,#699202 369px,#36401a 370px,#232323 371px,#232323 737px)"></div>
<div class="cs" style="top:294px;background:linear-gradient(90deg,#232323 0px,#232323 4px,#1f3224 5px,#00992e 6px,#00990b 240px,#009908 255px,#00df0b 256px,#02ff0c 257px,#2fff00 289px,#29d900 290px,#1f9f00 291px,#209900 293px,#6f9900 370px,#232323 372px,#232323 737px)"></div>
<div class="cs" style="top:295px;background:linear-gradient(90deg,#232323 0px,#232323 5px,#00992e 6px,#00990d 232px,#009908 254px,#009f08 255px,#01ff0d 256px,#31ff01 290px,#32f900 291px,#209900 293px,#719900 371px,#5f7b09 372px,#2d321f 373px,#232323 374px,#232323 737px)"></div>
<div class="cs" style="top:296px;background:linear-gradient(90deg,#232323 0px,#232323 5px,#00992e 6px,#00990e 229px,#009909 254px,#00c60b 255px,#01ff0e 256px,#35ff01 292px,#33ec00 293px,#27b200 294px,#239900 295px,#739900 372px,#6f9202 373px,#3d4818 374px,#232323 375px,#232323 737px)"></div>
<div class="cs" style="top:297px;background:linear-gradient(90deg,#232323 0px,#232323 5px,#048a2d 6px,#00992f 7px,#00990c 241px,#009909 254px,#00ec0e 255px,#02ff0e 256px,#39ff00 294px,#269f00 296px,#269900 298px,#769900 374px,#53650f 375px,#232323 376px,#232323 737px)"></div>
<div class="cs" style="top:298px;background:linear-gradient(90deg,#232323 0px,#232323 5px,#097b2c 6px,#00992f 7px,#00990e 233px,#00990a 253px,#00a60a 254px,#01ff0f 255px,#3bff01 295px,#3bf900 296px,#2fbf00 297px,#269900 298px,#789900 375px,#698307 376px,#2e321f 377px,#232323 378px,#232323 737px)"></div>
<div class="cs" style="top:299px;background:linear-gradient(90deg,#232323 0px,#232323 5px,#097b2c 6px,#00992f 7px,#00990f 230px,#00990a 253px,#00d20e 254px,#01ff10 255px,#3fff01 297px,#3ae600 298px,#2dac00 299px,#299900 300px,#739900 370px,#7b9900 376px,#769202 377px,#3f4818 378px,#232323 379px,#232323 737px)"></div>
<div class="cs" style="top:300px;background:linear-gradient(90deg,#232323 0px,#232323 5px,#0d6d2b 6px,#009930 7px,#00990e 237px,#00990a 253px,#01f210 254px,#02ff11 255px,#43ff00 299px,#2c9f00 301px,#2c9900 303px,#7b9900 376px,#7e9900 378px,#57650f 379px,#232323 380px,#232323 737px)"></div>
<div class="cs" style="top:301px;background:linear-gradient(90deg,#232323 0px,#232323 5px,#009930 7px,#009910 229px,#00990b 252px,#00b20d 253px,#01ff12 254px,#45ff01 300px,#45f900 301px,#37bf00 302px,#2d9900 303px,#779900 372px,#809900 379px,#708307 380px,#2f321f 381px,#232323 382px,#232323 737px)"></div>
<div class="cs" style="top:302px;background:linear-gradient(90deg,#232323 0px,#232323 5px,#009931 7px,#00990e 241px,#00990b 252px,#00d910 253px,#02ff12 254px,#4aff01 302px,#44e600 303px,#34ac00 304px,#2f9900 305px,#7d9900 376px,#829900 380px,#7e9202 381px,#424818 382px,#232323 383px,#232323 737px)"></div>
<div class="cs" style="top:303px;background:linear-gradient(90deg,#232323 0px,#232323 5px,#164f28 6px,#009931 7px,#009910 233px,#00990c 252px,#01f913 253px,#03ff13 255px,#4eff00 304px,#339f00 306px,#339900 308px,#7f9900 377px,#869900 382px,#5b650f 383px,#232323 384px,#232323 737px)"></div>
<div class="cs" style="top:304px;background:linear-gradient(90deg,#232323 0px,#232323 5px,#1a4027 6px,#009931 7px,#009911 230px,#00990c 251px,#00bf0f 252px,#01ff14 253px,#50ff01 305px,#50f900 306px,#3fbf00 307px,#339900 308px,#809900 377px,#889900 383px,#768307 384px,#30321f 385px,#232323 386px,#232323 737px)"></div>
<div class="cs" style="top:305px;background:linear-gradient(90deg,#232323 0px,#232323 5px,#1a4027 6px,#009932 7px,#009910 238px,#00990d 251px,#00df13 252px,#02ff15 253px,#54ff01 307px,#4de600 308px,#3bac00 309px,#369900 310px,#819900 377px,#8a9900 384px,#859202 385px,#444818 386px,#232323 387px,#232323 737px)"></div>
<div class="cs" style="top:306px;background:linear-gradient(90deg,#232323 0px,#232323 5px,#212a24 6px,#009932 7px,#009912 230px,#00990e 250px,#00a60e 251px,#01ff16 252px,#59ff00 309px,#399f00 311px,#399900 313px,#8b9900 384px,#8e9900 386px,#60650f 387px,#232323 388px,#232323 737px)"></div>
<div class="cs" style="top:307px;background:linear-gradient(90deg,#232323 0px,#232323 6px,#009933 7px,#009910 242px,#00990e 250px,#00c612 251px,#01ff17 252px,#5bff01 310px,#5af900 311px,#47bf00 312px,#3a9900 313px,#889900 381px,#909900 387px,#7d8307 388px,#31321f 389px,#232323 390px,#232323 737px)"></div>
<div class="cs" style="top:308px;background:linear-gradient(90deg,#232323 0px,#232323 6px,#029232 7px,#009933 8px,#009912 234px,#00990e 250px,#00ec16 251px,#02ff17 252px,#5fff01 312px,#57e600 313px,#43ac00 314px,#3c9900 315px,#919900 387px,#939900 388px,#8d9202 389px,#474818 390px,#232323 391px,#232323 737px)"></div>
<div class="cs" style="top:309px;background:linear-gradient(90deg,#232323 0px,#232323 6px,#097b2f 7px,#009933 8px,#009913 231px,#00990f 249px,#00ac11 250px,#01ff18 251px,#64ff00 314px,#419f00 316px,#409900 318px,#969900 390px,#65650f 391px,#232323 392px,#232323 737px)"></div>
<div class="cs" style="top:310px;background:linear-gradient(90deg,#232323 0px,#232323 6px,#097b30 7px,#009934 8px,#009913 233px,#00990f 249px,#00d215 250px,#01ff19 251px,#67ff01 315px,#63f200 316px,#4db900 317px,#419900 318px,#8f9900 384px,#999900 391px,#838207 392px,#32311f 393px,#232323 394px,#232323 737px)"></div>
<div class="cs" style="top:311px;background:linear-gradient(90deg,#232323 0px,#232323 6px,#0d6d2e 7px,#009934 8px,#009914 230px,#009910 249px,#01f219 250px,#02ff1a 251px,#64ff02 313px,#6bff01 317px,#62e600 318px,#48a600 319px,#439900 320px,#979900 389px,#999700 392px,#928e02 393px,#484618 394px,#232323 395px,#232323 737px)"></div>
<div class="cs" style="top:312px;background:linear-gradient(90deg,#232323 0px,#232323 6px,#009935 8px,#009912 243px,#009911 248px,#00b914 249px,#01ff1b 250px,#67ff03 314px,#70ff00 319px,#489f00 321px,#479900 323px,#999600 392px,#999300 394px,#65610f 395px,#232323 396px,#232323 737px)"></div>
<div class="cs" style="top:313px;background:linear-gradient(90deg,#232323 0px,#232323 6px,#009935 8px,#009914 235px,#009911 248px,#00d918 249px,#02ff1c 250px,#61ff05 310px,#73ff01 320px,#6ff200 321px,#56b900 322px,#489900 323px,#999600 391px,#999100 395px,#7b7409 396px,#2a2a21 397px,#232323 398px,#232323 737px)"></div>
<div class="cs" style="top:314px;background:linear-gradient(90deg,#232323 0px,#232323 6px,#1a4028 7px,#009935 8px,#009916 227px,#009912 247px,#009f12 248px,#01ff1d 249px,#60ff06 309px,#77ff01 322px,#6de600 323px,#50a600 324px,#4b9900 325px,#999600 390px,#998e00 396px,#928602 397px,#403d1a 398px,#232323 399px,#232323 737px)"></div>
<div class="cs" style="top:315px;background:linear-gradient(90deg,#232323 0px,#232323 6px,#1a4028 7px,#009936 8px,#009915 234px,#009912 247px,#00bf16 248px,#01ff1d 249px,#63ff06 310px,#7cff00 324px,#509f00 326px,#4f9900 328px,#999600 389px,#998b00 398px,#232323 400px,#232323 737px)"></div>
<div class="cs" style="top:316px;background:linear-gradient(90deg,#232323 0px,#232323 6px,#212a24 7px,#009936 8px,#009917 226px,#009913 247px,#00e61c 248px,#02ff1e 249px,#62ff08 309px,#7fff01 325px,#7af200 326px,#5fb900 327px,#509900 328px,#999700 388px,#998900 399px,#7b6e09 400px,#2a2921 401px,#232323 402px,#232323 737px)"></div>
<div class="cs" style="top:317px;background:linear-gradient(90deg,#232323 0px,#232323 7px,#009937 8px,#009915 239px,#009913 246px,#00a615 247px,#01ff1f 248px,#63ff08 309px,#84ff01 327px,#78e600 328px,#58a600 329px,#539900 330px,#999700 387px,#998700 400px,#927f02 401px,#403b1a 402px,#232323 403px,#232323 737px)"></div>
<div class="cs" style="top:318px;background:linear-gradient(90deg,#232323 0px,#232323 7px,#029236 8px,#009937 9px,#009917 231px,#009914 246px,#00c619 247px,#01ff20 248px,#66ff09 310px,#89ff00 329px,#589f00 331px,#579900 333px,#999600 387px,#998300 402px,#232323 404px,#232323 737px)"></div>
<div class="cs" style="top:319px;background:linear-gradient(90deg,#232323 0px,#232323 7px,#097b32 8px,#009937 9px,#009919 223px,#009914 246px,#01f220 247px,#02ff21 248px,#65ff0a 309px,#8cff01 330px,#87f200 331px,#68b900 332px,#579900 333px,#999600 386px,#998100 403px,#7b6909 404px,#2a2921 405px,#232323 406px,#232323 737px)"></div>
<div class="cs" style="top:320px;background:linear-gradient(90deg,#232323 0px,#232323 7px,#097b33 8px,#009938 9px,#009917 236px,#009915 245px,#00ac17 246px,#01ff22 247px,#64ff0b 308px,#91ff01 332px,#84e600 333px,#61a600 334px,#5b9900 335px,#999600 385px,#997f00 404px,#927802 405px,#403a1a 406px,#232323 407px,#232323 737px)"></div>
<div class="cs" style="top:321px;background:linear-gradient(90deg,#232323 0px,#232323 7px,#009938 9px,#00991a 223px,#009915 245px,#00d21d 246px,#02ff23 247px,#60ff0d 305px,#96ff00 334px,#609f00 336px,#5f9900 338px,#999700 384px,#997c00 406px,#232323 408px,#232323 737px)"></div>
<div class="cs" style="top:322px;background:linear-gradient(90deg,#232323 0px,#232323 7px,#009939 9px,#009918 236px,#009916 245px,#01f923 246px,#04ff23 248px,#61ff0e 305px,#9aff01 335px,#94f200 336px,#72b900 337px,#609900 338px,#999700 383px,#997a00 407px,#7b6409 408px,#2a2821 409px,#232323 410px,#232323 737px)"></div>
<div class="cs" style="top:323px;background:linear-gradient(90deg,#232323 0px,#232323 7px,#18482a 8px,#009939 9px,#00991a 228px,#009916 244px,#00b91b 245px,#01ff25 246px,#69ff0d 309px,#9fff01 337px,#8ddf00 338px,#6aa600 339px,#639900 340px,#999700 382px,#997800 408px,#927202 409px,#39331c 410px,#232323 411px,#232323 737px)"></div>
<div class="cs" style="top:324px;background:linear-gradient(90deg,#232323 0px,#232323 7px,#1a4029 8px,#00993a 9px,#009919 235px,#009917 244px,#00df21 245px,#02ff25 246px,#61ff10 304px,#a2ff01 338px,#a0f900 339px,#659900 341px,#999600 382px,#997600 410px,#574714 411px,#232323 412px,#232323 737px)"></div>
<div class="cs" style="top:325px;background:linear-gradient(90deg,#232323 0px,#232323 7px,#1f3226 8px,#00993a 9px,#00991b 228px,#009918 243px,#009f18 244px,#01ff27 245px,#62ff11 304px,#a8ff01 340px,#a1f200 341px,#78b200 342px,#689900 343px,#999600 381px,#997400 411px,#745a0b 412px,#2a2821 413px,#232323 414px,#232323 737px)"></div>
<div class="cs" style="top:326px;background:linear-gradient(90deg,#232323 0px,#232323 8px,#00993b 9px,#00991a 235px,#009918 243px,#00bf1e 244px,#01ff27 245px,#67ff11 306px,#adff01 342px,#9adf00 343px,#73a600 344px,#6c9900 345px,#999700 380px,#997200 412px,#8a6704 413px,#39311c 414px,#232323 415px,#232323 737px)"></div>
<div class="cs" style="top:327px;background:linear-gradient(90deg,#232323 0px,#232323 8px,#048a38 9px,#00993b 10px,#00991b 233px,#009919 243px,#00ec26 244px,#02ff28 245px,#66ff12 305px,#b1ff01 343px,#aff900 344px,#6e9900 346px,#999700 379px,#996f00 414px,#574414 415px,#232323 416px,#232323 737px)"></div>
<div class="cs" style="top:328px;background:linear-gradient(90deg,#232323 0px,#232323 8px,#097b35 9px,#00993b 10px,#00991d 225px,#009919 242px,#00a61b 243px,#01ff29 244px,#65ff13 304px,#b7ff01 345px,#b0f200 346px,#83b200 347px,#719900 348px,#999700 378px,#996f00 414px,#996e00 415px,#74560b 416px,#2a2821 417px,#232323 418px,#232323 737px)"></div>
<div class="cs" style="top:329px;background:linear-gradient(90deg,#232323 0px,#232323 8px,#0d6d33 9px,#00993c 10px,#00991c 233px,#00991a 242px,#02ff2a 244px,#5fff15 300px,#bcff01 347px,#a7df00 348px,#7da600 349px,#759900 350px,#999600 378px,#996c00 416px,#8a6204 417px,#39301c 418px,#232323 419px,#232323 737px)"></div>
<div class="cs" style="top:330px;background:linear-gradient(90deg,#232323 0px,#232323 8px,#00993c 10px,#00991d 230px,#00991a 242px,#01f229 243px,#02ff2b 244px,#67ff15 304px,#c0ff01 348px,#bdf900 349px,#779900 351px,#999600 377px,#996a00 417px,#996900 418px,#574114 419px,#232323 420px,#232323 737px)"></div>
<div class="cs" style="top:331px;background:linear-gradient(90deg,#232323 0px,#232323 8px,#164f2d 9px,#00993d 10px,#00991d 233px,#00991b 241px,#00b21f 242px,#01ff2c 243px,#68ff16 304px,#c6ff01 350px,#bef200 351px,#8eb200 352px,#7b9900 353px,#999700 376px,#996f00 411px,#996800 419px,#74520b 420px,#2a2721 421px,#232323 422px,#232323 737px)"></div>
<div class="cs" style="top:332px;background:linear-gradient(90deg,#232323 0px,#232323 8px,#1a402a 9px,#00993d 10px,#00991e 230px,#00991b 241px,#00d927 242px,#02ff2d 243px,#62ff18 300px,#c3ff03 348px,#ccff01 352px,#b5df00 353px,#88a600 354px,#7f9900 355px,#999700 375px,#996d00 412px,#996600 420px,#8a5d04 421px,#392f1c 422px,#232323 423px,#232323 737px)"></div>
<div class="cs" style="top:333px;background:linear-gradient(90deg,#232323 0px,#232323 8px,#1f3226 9px,#00993e 10px,#00991e 233px,#00991c 241px,#01f92d 242px,#04ff2e 244px,#63ff19 300px,#d0ff01 353px,#cdf900 354px,#819900 356px,#999600 375px,#996c00 412px,#996500 421px,#926002 422px,#4f3b16 423px,#232323 424px,#232323 737px)"></div>
<div class="cs" style="top:334px;background:linear-gradient(90deg,#232323 0px,#232323 9px,#00993e 10px,#00991f 230px,#00991d 240px,#00bf24 241px,#01ff2f 242px,#66ff19 301px,#cdff03 351px,#d6ff01 355px,#cef200 356px,#99b200 357px,#859900 358px,#999600 374px,#996b00 412px,#996200 423px,#6d4a0d 424px,#2a2721 425px,#232323 426px,#232323 737px)"></div>
<div class="cs" style="top:335px;background:linear-gradient(90deg,#232323 0px,#232323 9px,#078339 10px,#00993e 11px,#009921 223px,#00991d 240px,#00df2a 241px,#02ff30 242px,#65ff1b 300px,#caff05 349px,#ddff01 357px,#c3df00 358px,#8d9f00 359px,#8a9900 361px,#999600 373px,#996b00 411px,#996100 424px,#835507 425px,#392e1c 426px,#232323 427px,#232323 737px)"></div>
<div class="cs" style="top:336px;background:linear-gradient(90deg,#232323 0px,#232323 9px,#097b38 10px,#00993f 11px,#00991f 236px,#00991e 239px,#009f1f 240px,#01ff31 241px,#64ff1c 299px,#ceff05 350px,#e1ff01 358px,#def900 359px,#8b9900 361px,#999500 373px,#996c00 409px,#995f00 425px,#925b02 426px,#4f3916 427px,#232323 428px,#232323 737px)"></div>
<div class="cs" style="top:337px;background:linear-gradient(90deg,#232323 0px,#232323 9px,#0f6533 10px,#00993f 11px,#009922 223px,#00991e 239px,#00c627 240px,#01ff32 241px,#69ff1c 301px,#d2ff05 351px,#e8ff01 360px,#d8ec00 361px,#a6b200 362px,#8f9900 363px,#999400 373px,#996c00 408px,#995d00 427px,#6d470d 428px,#2a2721 429px,#232323 430px,#232323 737px)"></div>
<div class="cs" style="top:338px;background:linear-gradient(90deg,#232323 0px,#232323 9px,#009940 11px,#009921 231px,#00991f 239px,#01ec30 240px,#02ff33 241px,#68ff1d 300px,#d6ff06 352px,#eeff01 362px,#cdd900 363px,#989f00 364px,#939900 365px,#999300 373px,#996b00 409px,#995c00 428px,#835107 429px,#392d1c 430px,#232323 431px,#232323 737px)"></div>
<div class="cs" style="top:339px;background:linear-gradient(90deg,#232323 0px,#232323 9px,#1a402a 10px,#009940 11px,#009923 223px,#009920 238px,#00a622 239px,#01ff34 240px,#62ff20 296px,#c3ff0b 343px,#f3ff01 363px,#eff900 364px,#969900 366px,#996700 412px,#995a00 429px,#925602 430px,#4f3716 431px,#232323 432px,#232323 737px)"></div>
<div class="cs" style="top:340px;background:linear-gradient(90deg,#232323 0px,#232323 9px,#1c3929 10px,#009941 11px,#009922 231px,#009920 238px,#00d22c 239px,#02ff35 240px,#61ff21 295px,#c7ff0b 344px,#faff01 365px,#e9ec00 366px,#b2b200 367px,#999800 368px,#996f00 402px,#995800 431px,#6d440d 432px,#232323 433px,#232323 737px)"></div>
<div class="cs" style="top:341px;background:linear-gradient(90deg,#232323 0px,#232323 10px,#009941 11px,#009925 218px,#009921 238px,#01f234 239px,#02ff36 240px,#66ff21 297px,#cbff0c 345px,#fffd01 367px,#d9d500 368px,#9f9b00 369px,#999200 371px,#996800 409px,#995700 432px,#834d07 433px,#32291f 434px,#232323 435px,#232323 737px)"></div>
<div class="cs" style="top:342px;background:linear-gradient(90deg,#232323 0px,#232323 10px,#048a3e 11px,#009942 12px,#009922 237px,#00b928 238px,#01ff37 239px,#65ff23 296px,#c8ff0e 343px,#fffe02 366px,#fff901 368px,#f9f000 369px,#c6bd00 370px,#999100 371px,#996700 410px,#995600 433px,#925202 434px,#483218 435px,#232323 436px,#232323 737px)"></div>
<div class="cs" style="top:343px;background:linear-gradient(90deg,#232323 0px,#232323 10px,#097b3b 11px,#009942 12px,#009925 224px,#009922 237px,#00d930 238px,#02ff38 239px,#64ff24 295px,#ccff0e 344px,#fffc03 366px,#fff201 370px,#ecde00 371px,#b2a600 372px,#998d00 373px,#996000 417px,#995400 435px,#653e0f 436px,#232323 437px,#232323 737px)"></div>
<div class="cs" style="top:344px;background:linear-gradient(90deg,#232323 0px,#232323 10px,#0f6535 11px,#009943 12px,#009924 232px,#009923 236px,#009f24 237px,#01f938 238px,#04ff39 240px,#69ff24 297px,#d0ff0f 345px,#fffc04 365px,#ffec01 372px,#d9c600 373px,#9f9000 374px,#998800 376px,#995d00 420px,#995200 436px,#834907 437px,#32291f 438px,#232323 439px,#232323 737px)"></div>
<div class="cs" style="top:345px;background:linear-gradient(90deg,#232323 0px,#232323 10px,#009943 12px,#009926 225px,#009923 236px,#00bf2c 237px,#01ff3a 238px,#6aff25 297px,#d4ff0f 346px,#fffd06 364px,#ffe801 373px,#f9e000 374px,#c6b000 375px,#998700 376px,#995d00 419px,#995100 437px,#924e02 438px,#483118 439px,#232323 440px,#232323 737px)"></div>
<div class="cs" style="top:346px;background:linear-gradient(90deg,#232323 0px,#232323 10px,#1a402b 11px,#009944 12px,#009925 233px,#009924 236px,#00df34 237px,#02ff3b 238px,#67ff27 295px,#d1ff11 344px,#fffd07 363px,#ffe101 375px,#eccf00 376px,#b29b00 377px,#998300 378px,#995a00 422px,#994f00 439px,#653c0f 440px,#232323 441px,#232323 737px)"></div>
<div class="cs" style="top:347px;background:linear-gradient(90deg,#232323 0px,#232323 10px,#1c3929 11px,#009944 12px,#009927 226px,#009925 235px,#00a628 236px,#01ff3d 237px,#68ff28 295px,#d3ff12 344px,#fffe09 362px,#ffdb01 377px,#d9b900 378px,#9f8700 379px,#997f00 381px,#995800 424px,#994e00 440px,#834607 441px,#2a2621 442px,#232323 443px,#232323 737px)"></div>
<div class="cs" style="top:348px;background:linear-gradient(90deg,#232323 0px,#232323 11px,#009945 12px,#009926 234px,#009925 235px,#00c630 236px,#02ff3e 237px,#5eff2b 289px,#c4ff16 337px,#fffc0a 362px,#ffd801 378px,#f9d000 379px,#997e00 381px,#995800 423px,#994d00 441px,#924a02 442px,#402d1a 443px,#232323 444px,#232323 737px)"></div>
<div class="cs" style="top:349px;background:linear-gradient(90deg,#232323 0px,#232323 11px,#048a41 12px,#009945 13px,#009928 227px,#009926 235px,#01ec3a 236px,#02ff3f 237px,#65ff2b 292px,#c8ff17 338px,#fffc0b 361px,#ffd201 380px,#e6bb00 381px,#ac8b00 382px,#997b00 383px,#995600 425px,#994b00 443px,#232323 445px,#232323 737px)"></div>
<div class="cs" style="top:350px;background:linear-gradient(90deg,#232323 0px,#232323 11px,#097b3d 12px,#009946 13px,#009927 234px,#00ac2b 235px,#01ff40 236px,#66ff2c 292px,#ccff17 339px,#fffd0d 360px,#ffcd01 382px,#9f7e00 384px,#997600 386px,#994f00 435px,#994a00 444px,#7b4009 445px,#2a2521 446px,#232323 447px,#232323 737px)"></div>
<div class="cs" style="top:351px;background:linear-gradient(90deg,#232323 0px,#232323 11px,#009946 13px,#00992a 222px,#009927 234px,#00d236 235px,#02ff41 236px,#65ff2d 291px,#ceff18 339px,#fffd0e 359px,#ffc901 383px,#f9c200 384px,#bf9400 385px,#997500 386px,#994f00 434px,#994900 445px,#924602 446px,#402c1a 447px,#232323 448px,#232323 737px)"></div>
<div class="cs" style="top:352px;background:linear-gradient(90deg,#232323 0px,#232323 11px,#145733 12px,#009947 13px,#009928 234px,#01f941 235px,#04ff42 237px,#6aff2d 293px,#d2ff19 340px,#fffe10 358px,#ffc902 382px,#ffc401 385px,#e6af00 386px,#ac8200 387px,#997200 388px,#994c00 438px,#994700 447px,#232323 449px,#232323 737px)"></div>
<div class="cs" style="top:353px;background:linear-gradient(90deg,#232323 0px,#232323 11px,#1a402c 12px,#009947 13px,#00992b 223px,#009929 233px,#00b931 234px,#01ff43 235px,#6bff2e 293px,#d9ff19 342px,#fffc11 358px,#ffc803 382px,#ffbf01 387px,#9f7500 389px,#996f00 391px,#994c00 437px,#994600 448px,#7b3d09 449px,#2a2521 450px,#232323 451px,#232323 737px)"></div>
<div class="cs" style="top:354px;background:linear-gradient(90deg,#232323 0px,#232323 11px,#212a25 12px,#009948 13px,#00992a 232px,#009929 233px,#00d93a 234px,#02ff44 235px,#68ff30 291px,#d6ff1b 340px,#fffc12 357px,#ffc403 383px,#ffbc01 388px,#f9b500 389px,#bf8a00 390px,#996e00 391px,#994a00 439px,#994500 449px,#924202 450px,#39291c 451px,#232323 452px,#232323 737px)"></div>
<div class="cs" style="top:355px;background:linear-gradient(90deg,#232323 0px,#232323 12px,#029246 13px,#009948 14px,#00992c 224px,#00992a 232px,#009f2c 233px,#01ff46 234px,#69ff31 291px,#daff1b 341px,#fffd14 356px,#ffc605 381px,#ffb701 390px,#e6a300 391px,#ac7900 392px,#996b00 393px,#994800 442px,#994300 451px,#573114 452px,#232323 453px,#232323 737px)"></div>
<div class="cs" style="top:356px;background:linear-gradient(90deg,#232323 0px,#232323 12px,#097b3f 13px,#009949 14px,#00992b 232px,#00bf35 233px,#01ff47 234px,#69ff33 290px,#cdff1f 335px,#fffd15 355px,#ffc506 381px,#ffb200 392px,#9f6e00 394px,#996700 396px,#994300 450px,#994200 452px,#74380b 453px,#2a2521 454px,#232323 455px,#232323 737px)"></div>
<div class="cs" style="top:357px;background:linear-gradient(90deg,#232323 0px,#232323 12px,#0d6d3b 13px,#009949 14px,#00992e 220px,#00992b 232px,#00e641 233px,#02ff48 234px,#66ff35 288px,#caff21 333px,#fffe17 354px,#ffc707 379px,#ffaf01 393px,#f9aa00 394px,#bf8100 395px,#996700 396px,#994500 445px,#994100 453px,#8a3d04 454px,#39281c 455px,#232323 456px,#232323 737px)"></div>
<div class="cs" style="top:358px;background:linear-gradient(90deg,#232323 0px,#232323 12px,#00994a 14px,#00992c 231px,#00a630 232px,#01ff49 233px,#65ff36 287px,#c7ff23 331px,#fffc18 354px,#ffc508 379px,#ffab01 395px,#e69900 396px,#ac7100 397px,#996400 398px,#994100 452px,#994000 455px,#572f14 456px,#232323 457px,#232323 737px)"></div>
<div class="cs" style="top:359px;background:linear-gradient(90deg,#232323 0px,#232323 12px,#1a402d 13px,#00994a 14px,#00992f 222px,#00992d 231px,#02ff4a 233px,#62ff38 285px,#c6ff25 330px,#fffc19 353px,#ffc509 378px,#ffa700 397px,#9f6600 399px,#996100 401px,#994000 453px,#993f00 456px,#74360b 457px,#2a2521 458px,#232323 459px,#232323 737px)"></div>
<div class="cs" style="top:360px;background:linear-gradient(90deg,#232323 0px,#232323 12px,#1f3228 13px,#00994b 14px,#00992e 230px,#00992d 231px,#01f248 232px,#02ff4b 233px,#6dff37 290px,#d7ff23 336px,#fffd1b 352px,#ffc70b 376px,#ffa401 398px,#f99e00 399px,#bf7900 400px,#996000 401px,#993e00 456px,#993e00 457px,#8a3a04 458px,#39281c 459px,#232323 460px,#232323 737px)"></div>
<div class="cs" style="top:361px;background:linear-gradient(90deg,#232323 0px,#232323 13px,#00994c 14px,#00992e 230px,#00ac34 231px,#01ff4d 232px,#6cff39 289px,#deff23 338px,#fffd1d 351px,#ffc40b 377px,#ffa001 400px,#e68f00 401px,#a66600 402px,#995d00 403px,#993c00 459px,#4f2c16 460px,#232323 461px,#232323 737px)"></div>
<div class="cs" style="top:362px;background:linear-gradient(90deg,#232323 0px,#232323 13px,#097b42 14px,#00994c 15px,#00992f 230px,#00d942 231px,#02ff4e 232px,#69ff3a 287px,#d8ff26 335px,#fffe1e 350px,#ffc80e 374px,#ff9c00 402px,#9f6000 404px,#995a00 406px,#993b00 460px,#6d320d 461px,#2a2421 462px,#232323 463px,#232323 737px)"></div>
<div class="cs" style="top:363px;background:linear-gradient(90deg,#232323 0px,#232323 13px,#0d6d3d 14px,#00994d 15px,#009930 230px,#01f94d 231px,#04ff4e 233px,#66ff3c 285px,#d0ff29 331px,#fffc1f 350px,#ffc20d 376px,#ff9901 403px,#f29000 404px,#b96d00 405px,#995a00 406px,#993a00 461px,#833607 462px,#39271c 463px,#232323 464px,#232323 737px)"></div>
<div class="cs" style="top:364px;background:linear-gradient(90deg,#232323 0px,#232323 13px,#00994d 15px,#009931 228px,#009930 229px,#00b93a 230px,#01ff50 231px,#66ff3e 284px,#caff2b 328px,#fffc21 349px,#ffc40f 374px,#ff9501 405px,#e68500 406px,#a66000 407px,#995700 408px,#993900 462px,#923802 463px,#4f2b16 464px,#232323 465px,#232323 737px)"></div>
<div class="cs" style="top:365px;background:linear-gradient(90deg,#232323 0px,#232323 13px,#1a402e 14px,#00994e 15px,#009931 229px,#00df47 230px,#02ff51 231px,#63ff40 282px,#c7ff2e 326px,#fffd23 348px,#ffc812 371px,#ff9401 405px,#ff9200 407px,#9f5a00 409px,#995500 411px,#993800 464px,#6d300d 465px,#2a2421 466px,#232323 467px,#232323 737px)"></div>
<div class="cs" style="top:366px;background:linear-gradient(90deg,#232323 0px,#232323 13px,#1f3228 14px,#00994e 15px,#009933 225px,#009932 228px,#009f34 229px,#01ff53 230px,#62ff41 281px,#c6ff2f 325px,#fffd24 347px,#ffc311 373px,#ff8f01 408px,#f28700 409px,#b96600 410px,#995400 411px,#993700 465px,#833307 466px,#39271c 467px,#232323 468px,#232323 737px)"></div>
<div class="cs" style="top:367px;background:linear-gradient(90deg,#232323 0px,#232323 14px,#00994f 15px,#009933 228px,#00bf3f 229px,#02ff54 230px,#5fff43 279px,#c3ff31 323px,#fffe26 346px,#ffc714 370px,#ff9403 403px,#ff8c01 410px,#e67d00 411px,#a65900 412px,#995200 413px,#993600 466px,#923502 467px,#4f2a16 468px,#232323 469px,#232323 737px)"></div>
<div class="cs" style="top:368px;background:linear-gradient(90deg,#232323 0px,#232323 14px,#097b44 15px,#00994f 16px,#009934 227px,#009933 228px,#01ec4f 229px,#02ff55 230px,#6aff42 284px,#d7ff2f 330px,#fffc27 346px,#ffc314 371px,#ff8f03 406px,#ff8800 412px,#9f5400 414px,#994f00 416px,#993500 468px,#6d2e0d 469px,#2a2421 470px,#232323 471px,#232323 737px)"></div>
<div class="cs" style="top:369px;background:linear-gradient(90deg,#232323 0px,#232323 14px,#0d6d3f 15px,#009950 16px,#009934 227px,#00a638 228px,#01ff56 229px,#69ff44 283px,#d9ff30 330px,#fffc29 345px,#ffc516 369px,#ff8f04 405px,#ff8601 413px,#f27e00 414px,#b96000 415px,#994e00 416px,#993400 469px,#833107 470px,#32251f 471px,#232323 472px,#232323 737px)"></div>
<div class="cs" style="top:370px;background:linear-gradient(90deg,#232323 0px,#232323 14px,#009951 16px,#009935 227px,#00d248 228px,#02ff58 229px,#66ff46 281px,#d3ff33 327px,#fffd2b 344px,#ffca19 366px,#ff9c09 394px,#ff8300 415px,#e67500 416px,#a65400 417px,#994d00 418px,#993300 470px,#923202 471px,#482818 472px,#232323 473px,#232323 737px)"></div>
<div class="cs" style="top:371px;background:linear-gradient(90deg,#232323 0px,#232323 14px,#1a402f 15px,#009951 16px,#009936 227px,#01f255 228px,#02ff59 229px,#68ff47 281px,#c8ff36 322px,#fffd2c 343px,#ffc418 368px,#ff9408 399px,#ff7f00 417px,#9f4e00 419px,#994a00 421px,#993200 472px,#652b0f 473px,#232323 474px,#232323 737px)"></div>
<div class="cs" style="top:372px;background:linear-gradient(90deg,#232323 0px,#232323 14px,#212a26 15px,#009952 16px,#009936 226px,#00b23f 227px,#01ff5a 228px,#64ff49 279px,#d4ff36 326px,#fffe2e 342px,#ffc61a 366px,#ff9409 398px,#ff7d01 418px,#f27600 419px,#b95900 420px,#994900 421px,#993100 473px,#832e07 474px,#32251f 475px,#232323 476px,#232323 737px)"></div>
<div class="cs" style="top:373px;background:linear-gradient(90deg,#232323 0px,#232323 15px,#02924f 16px,#009952 17px,#009937 226px,#00d94e 227px,#02ff5b 228px,#61ff4b 277px,#ceff39 323px,#fffe30 341px,#ffc41b 366px,#ff8e08 402px,#ff7a00 420px,#e66d00 421px,#a64e00 422px,#994800 423px,#993000 474px,#922f02 475px,#482718 476px,#232323 477px,#232323 737px)"></div>
<div class="cs" style="top:374px;background:linear-gradient(90deg,#232323 0px,#232323 15px,#097b47 16px,#009953 17px,#009938 226px,#01f95b 227px,#04ff5c 229px,#74ff49 285px,#dbff38 327px,#fffc31 341px,#ffc71d 364px,#ff980c 393px,#ff7801 421px,#f97400 422px,#994600 424px,#992f00 476px,#652a0f 477px,#232323 478px,#232323 737px)"></div>
<div class="cs" style="top:375px;background:linear-gradient(90deg,#232323 0px,#232323 15px,#0f653e 16px,#009953 17px,#009939 225px,#00bf47 226px,#02ff5e 227px,#5fff4e 275px,#cdff3c 321px,#fffd33 340px,#ffc51e 364px,#ff940c 395px,#ff7501 423px,#f26e00 424px,#b25100 425px,#994500 426px,#992e00 477px,#832c07 478px,#32241f 479px,#232323 480px,#232323 737px)"></div>
<div class="cs" style="top:376px;background:linear-gradient(90deg,#232323 0px,#232323 15px,#164f35 16px,#009954 17px,#00993a 225px,#00df54 226px,#02ff5f 227px,#72ff4d 283px,#dfff3b 327px,#fffd35 339px,#ffc11e 365px,#ff8e0b 399px,#ff7200 425px,#df6300 426px,#a64900 427px,#994300 428px,#992d00 478px,#922c02 479px,#482618 480px,#232323 481px,#232323 737px)"></div>
<div class="cs" style="top:377px;background:linear-gradient(90deg,#232323 0px,#232323 15px,#1a402f 16px,#009955 17px,#00993a 224px,#00a63f 225px,#01ff61 226px,#6fff4f 281px,#d9ff3d 324px,#fffe37 338px,#ffc521 362px,#ff910d 395px,#ff7001 426px,#f96d00 427px,#994200 429px,#992c00 480px,#65280f 481px,#232323 482px,#232323 737px)"></div>
<div class="cs" style="top:378px;background:linear-gradient(90deg,#232323 0px,#232323 16px,#009955 17px,#00993b 224px,#00c64c 225px,#02ff62 226px,#65ff52 276px,#d0ff40 320px,#fffe38 337px,#ffc522 361px,#ff910e 394px,#ff6e01 428px,#f26700 429px,#b24b00 430px,#994000 431px,#992c00 481px,#832a07 482px,#2a2321 483px,#232323 484px,#232323 737px)"></div>
<div class="cs" style="top:379px;background:linear-gradient(90deg,#232323 0px,#232323 16px,#07834c 17px,#009956 18px,#00993c 224px,#01ec5c 225px,#02ff63 226px,#6fff52 280px,#ddff40 324px,#fffc39 337px,#ffc423 361px,#ff9411 391px,#ff6b00 430px,#df5d00 431px,#a64400 432px,#993f00 433px,#992b00 482px,#922a02 483px,#40251a 484px,#232323 485px,#232323 737px)"></div>
<div class="cs" style="top:380px;background:linear-gradient(90deg,#232323 0px,#232323 16px,#0b7446 17px,#009956 18px,#00993d 223px,#00ac44 224px,#01ff65 225px,#6cff54 278px,#dfff41 324px,#fffd3b 336px,#ffc826 358px,#ff9813 387px,#ff6b01 429px,#ff6901 431px,#f96600 432px,#993d00 434px,#992a00 484px,#232323 486px,#232323 737px)"></div>
<div class="cs" style="top:381px;background:linear-gradient(90deg,#232323 0px,#232323 16px,#009957 18px,#00993e 223px,#00d255 224px,#02ff66 225px,#6bff55 277px,#d9ff44 321px,#fffd3d 335px,#ffc426 359px,#ff9112 391px,#ff6601 433px,#f26000 434px,#b24600 435px,#993c00 436px,#992900 485px,#7b2709 486px,#2a2321 487px,#232323 488px,#232323 737px)"></div>
<div class="cs" style="top:382px;background:linear-gradient(90deg,#232323 0px,#232323 16px,#1a4030 17px,#009958 18px,#00993e 223px,#01f263 224px,#03ff67 225px,#6aff57 276px,#dbff45 321px,#fffe3f 334px,#ffc428 358px,#ff9012 391px,#ff6400 435px,#df5700 436px,#a64000 437px,#993a00 438px,#992800 486px,#922802 487px,#40241a 488px,#232323 489px,#232323 737px)"></div>
<div class="cs" style="top:383px;background:linear-gradient(90deg,#232323 0px,#232323 16px,#1f322a 17px,#009958 18px,#00993f 222px,#00b94c 223px,#01ff69 224px,#69ff59 275px,#daff47 320px,#fffc40 334px,#ffc92b 355px,#ff9917 383px,#ff6904 427px,#ff6201 436px,#f95f00 437px,#993900 439px,#992700 488px,#232323 490px,#232323 737px)"></div>
<div class="cs" style="top:384px;background:linear-gradient(90deg,#232323 0px,#232323 17px,#029256 18px,#009959 19px,#009940 222px,#00d95b 223px,#02ff6a 224px,#68ff5b 274px,#d4ff4a 317px,#fffc42 333px,#ffc52b 356px,#ff9416 386px,#ff6804 427px,#ff6001 438px,#f25a00 439px,#b24200 440px,#993800 441px,#992600 489px,#7b2509 490px,#2a2321 491px,#232323 492px,#232323 737px)"></div>
<div class="cs" style="top:385px;background:linear-gradient(90deg,#232323 0px,#232323 17px,#097b4c 18px,#00995a 19px,#009941 221px,#009f44 222px,#01f969 223px,#05ff6b 225px,#67ff5c 273px,#d3ff4c 316px,#fffd44 332px,#ffc72d 354px,#ff9518 384px,#ff6705 427px,#ff5d00 440px,#df5100 441px,#a63c00 442px,#993700 443px,#992600 490px,#922502 491px,#40241a 492px,#232323 493px,#232323 737px)"></div>
<div class="cs" style="top:386px;background:linear-gradient(90deg,#232323 0px,#232323 17px,#00995a 19px,#009942 221px,#00bf52 222px,#02ff6d 223px,#5dff5f 268px,#d5ff4d 316px,#fffd46 331px,#ffc32d 355px,#ff9118 386px,#ff6204 432px,#ff5b01 441px,#f95800 442px,#993600 444px,#992500 492px,#232323 494px,#232323 737px)"></div>
<div class="cs" style="top:387px;background:linear-gradient(90deg,#232323 0px,#232323 17px,#164f38 18px,#00995b 19px,#009943 221px,#01e664 222px,#02ff6f 223px,#65ff60 271px,#d2ff50 314px,#fffe48 330px,#ffc530 353px,#ff941a 383px,#ff6506 427px,#ff5900 443px,#ec5200 444px,#b23d00 445px,#993400 446px,#992400 493px,#7b2409 494px,#2a2321 495px,#232323 496px,#232323 737px)"></div>
<div class="cs" style="top:388px;background:linear-gradient(90deg,#232323 0px,#232323 17px,#1c392e 18px,#00995c 19px,#009944 220px,#00a649 221px,#01ff70 222px,#64ff62 270px,#d1ff51 313px,#fffc49 330px,#ffc832 351px,#ff981d 379px,#ff6a09 420px,#ff5700 445px,#d94900 446px,#9f3500 447px,#993200 449px,#992300 494px,#922302 495px,#40231a 496px,#232323 497px,#232323 737px)"></div>
<div class="cs" style="top:389px;background:linear-gradient(90deg,#232323 0px,#232323 18px,#00995c 19px,#009945 220px,#00c658 221px,#02ff72 222px,#63ff63 269px,#d0ff53 312px,#fffc4b 329px,#ffc432 352px,#ff941d 381px,#ff6708 423px,#ff5501 446px,#f95200 447px,#993200 449px,#992200 496px,#232323 498px,#232323 737px)"></div>
<div class="cs" style="top:390px;background:linear-gradient(90deg,#232323 0px,#232323 18px,#097b4e 19px,#00995d 20px,#009945 220px,#01f26e 221px,#03ff73 222px,#62ff65 268px,#d2ff55 312px,#fffd4d 328px,#ffc635 350px,#ff921d 381px,#ff6207 427px,#ff5300 448px,#ec4c00 449px,#b23900 450px,#993100 451px,#992200 497px,#7b2209 498px,#2a2321 499px,#232323 500px,#232323 737px)"></div>
<div class="cs" style="top:391px;background:linear-gradient(90deg,#232323 0px,#232323 18px,#0f6544 19px,#00995d 20px,#009946 219px,#00ac4f 220px,#01ff75 221px,#68ff66 270px,#cfff57 310px,#fffd4f 327px,#ffc435 350px,#ff911e 381px,#ff660a 421px,#ff5100 450px,#d94400 451px,#9f3200 452px,#992f00 454px,#992100 498px,#922102 499px,#40221a 500px,#232323 501px,#232323 737px)"></div>
<div class="cs" style="top:392px;background:linear-gradient(90deg,#232323 0px,#232323 18px,#14573d 19px,#00995e 20px,#009947 219px,#00d262 220px,#02ff76 221px,#67ff68 269px,#d1ff59 310px,#fffe52 326px,#ffc738 348px,#ff9822 375px,#ff6d0e 413px,#ff4f01 451px,#f94d00 452px,#992e00 454px,#992000 500px,#232323 502px,#232323 737px)"></div>
<div class="cs" style="top:393px;background:linear-gradient(90deg,#232323 0px,#232323 18px,#1a4032 19px,#00995f 20px,#009948 219px,#01f975 220px,#05ff77 222px,#66ff6a 268px,#d3ff5a 310px,#fffc52 326px,#ffc539 348px,#ff9522 376px,#ff690d 416px,#ff4d00 453px,#ec4700 454px,#b23500 455px,#992d00 456px,#991f00 501px,#74200b 502px,#2a2321 503px,#232323 504px,#232323 737px)"></div>
<div class="cs" style="top:394px;background:linear-gradient(90deg,#232323 0px,#232323 19px,#009960 20px,#009949 218px,#00b958 219px,#02ff79 220px,#5eff6c 264px,#c7ff5e 305px,#fffc55 325px,#ffc339 348px,#ff9122 378px,#ff630c 421px,#ff4b00 455px,#d93f00 456px,#9f2e00 457px,#992c00 459px,#991f00 502px,#8a1f04 503px,#39221c 504px,#232323 505px,#232323 737px)"></div>
<div class="cs" style="top:395px;background:linear-gradient(90deg,#232323 0px,#232323 19px,#078355 20px,#009960 21px,#00994a 218px,#00df6c 219px,#02ff7b 220px,#64ff6d 266px,#ccff5f 306px,#fffd57 324px,#ffc73d 345px,#ff9525 374px,#ff680f 414px,#ff4a01 456px,#f94700 457px,#992b00 459px,#991e00 504px,#572114 505px,#232323 506px,#232323 737px)"></div>
<div class="cs" style="top:396px;background:linear-gradient(90deg,#232323 0px,#232323 19px,#0d6d4a 20px,#009961 21px,#00994b 217px,#009f4e 218px,#01ff7c 219px,#63ff6f 265px,#cbff61 305px,#fffd59 323px,#ffc13c 347px,#ff8d22 379px,#ff5d0b 426px,#ff4800 458px,#ec4200 459px,#b23100 460px,#992a00 461px,#991d00 505px,#741f0b 506px,#2a2321 507px,#232323 508px,#232323 737px)"></div>
<div class="cs" style="top:397px;background:linear-gradient(90deg,#232323 0px,#232323 19px,#14573e 20px,#009962 21px,#00994c 217px,#00bf5f 218px,#02ff7e 219px,#62ff71 264px,#cdff63 305px,#fffe5b 322px,#ffc841 343px,#ff9829 370px,#ff6c13 408px,#ff4600 460px,#d93b00 461px,#9f2b00 462px,#992900 464px,#991d00 506px,#8a1d04 507px,#39221c 508px,#232323 509px,#232323 737px)"></div>
<div class="cs" style="top:398px;background:linear-gradient(90deg,#232323 0px,#232323 19px,#1a4033 20px,#009962 21px,#00994d 217px,#01ec76 218px,#02ff7f 219px,#68ff72 266px,#d8ff63 308px,#fffc5c 322px,#ffc842 342px,#ff9529 371px,#ff6611 413px,#ff4401 461px,#f94200 462px,#992800 464px,#991c00 508px,#572014 509px,#232323 510px,#232323 737px)"></div>
<div class="cs" style="top:399px;background:linear-gradient(90deg,#232323 0px,#232323 20px,#009963 21px,#00994e 216px,#00a654 217px,#01ff81 218px,#67ff74 265px,#d7ff65 307px,#fffc5f 321px,#ffc442 343px,#ff9229 372px,#ff6311 415px,#ff4300 463px,#ec3d00 464px,#ac2c00 465px,#992700 466px,#991b00 509px,#741d0b 510px,#2a2221 511px,#232323 512px,#232323 737px)"></div>
<div class="cs" style="top:400px;background:linear-gradient(90deg,#232323 0px,#232323 20px,#078358 21px,#009964 22px,#00994f 216px,#02ff83 218px,#66ff76 264px,#d6ff67 306px,#fffd61 320px,#ffc645 341px,#ff922a 371px,#ff6413 413px,#ff4100 465px,#9f2800 467px,#992600 469px,#991b00 510px,#831c07 511px,#39211c 512px,#232323 513px,#232323 737px)"></div>
<div class="cs" style="top:401px;background:linear-gradient(90deg,#232323 0px,#232323 20px,#0d6d4c 21px,#009964 22px,#009950 216px,#01f27e 217px,#03ff84 218px,#65ff78 263px,#cdff6a 302px,#fffd63 319px,#ffc245 342px,#ff8e29 373px,#ff6112 415px,#ff3f00 466px,#f93d00 467px,#bf2f00 468px,#992500 469px,#991a00 511px,#921a02 512px,#4f1f16 513px,#232323 514px,#232323 737px)"></div>
<div class="cs" style="top:402px;background:linear-gradient(90deg,#232323 0px,#232323 20px,#145740 21px,#009965 22px,#009951 215px,#00ac5b 216px,#01ff86 217px,#6bff79 265px,#d8ff6b 305px,#fffe66 318px,#ffc749 339px,#ff9830 365px,#ff6a18 404px,#ff4102 461px,#ff3e00 468px,#e63700 469px,#ac2900 470px,#992400 471px,#991900 513px,#6d1d0d 514px,#2a2221 515px,#232323 516px,#232323 737px)"></div>
<div class="cs" style="top:403px;background:linear-gradient(90deg,#232323 0px,#232323 20px,#1a4034 21px,#009966 22px,#009952 215px,#00d973 216px,#02ff88 217px,#6aff7b 264px,#d7ff6d 304px,#fffc66 318px,#ffc74a 338px,#ff9530 366px,#ff6717 406px,#ff4003 462px,#ff3c00 470px,#9f2500 472px,#992300 474px,#991900 514px,#831a07 515px,#39211c 516px,#232323 517px,#232323 737px)"></div>
<div class="cs" style="top:404px;background:linear-gradient(90deg,#232323 0px,#232323 21px,#009967 22px,#009953 215px,#01f986 216px,#05ff89 218px,#69ff7d 263px,#d9ff6f 304px,#fffc69 317px,#ffc54b 338px,#ff9230 367px,#ff6417 408px,#ff3c01 468px,#ff3b00 471px,#f93900 472px,#bf2b00 473px,#992200 474px,#991800 515px,#921802 516px,#4f1f16 517px,#232323 518px,#232323 737px)"></div>
<div class="cs" style="top:405px;background:linear-gradient(90deg,#232323 0px,#232323 21px,#07835a 22px,#009967 23px,#009954 214px,#00bf68 215px,#02ff8b 216px,#63ff7f 260px,#d5ff72 302px,#fffd6b 316px,#ffca4f 335px,#ff9b36 360px,#ff6e1e 396px,#ff4507 450px,#ff3900 473px,#e63300 474px,#ac2600 475px,#992100 476px,#991700 517px,#651c0f 518px,#232323 519px,#232323 737px)"></div>
<div class="cs" style="top:406px;background:linear-gradient(90deg,#232323 0px,#232323 21px,#0d6d4e 22px,#009968 23px,#009955 214px,#00df7b 215px,#02ff8d 216px,#67ff81 261px,#cfff74 299px,#fffd6e 315px,#ffc34e 337px,#ff8f31 367px,#ff6118 409px,#ff3a02 469px,#ff3700 475px,#9f2200 477px,#992000 479px,#991700 518px,#831907 519px,#32211f 520px,#232323 521px,#232323 737px)"></div>
<div class="cs" style="top:407px;background:linear-gradient(90deg,#232323 0px,#232323 21px,#145742 22px,#009969 23px,#009956 213px,#009f59 214px,#01ff8e 215px,#61ff83 258px,#c8ff77 296px,#fffe70 314px,#ffc651 335px,#ff9536 362px,#ff671c 401px,#ff3f06 458px,#ff3600 476px,#f93400 477px,#bf2800 478px,#992000 479px,#991600 519px,#921702 520px,#481f18 521px,#232323 522px,#232323 737px)"></div>
<div class="cs" style="top:408px;background:linear-gradient(90deg,#232323 0px,#232323 21px,#1c3930 22px,#00996a 23px,#009957 213px,#00c670 214px,#02ff90 215px,#60ff85 257px,#caff79 296px,#fffc71 314px,#ffc653 334px,#ff9537 361px,#ff671d 400px,#ff3f07 456px,#ff3400 478px,#e62f00 479px,#ac2300 480px,#991f00 481px,#991500 521px,#651b0f 522px,#232323 523px,#232323 737px)"></div>
<div class="cs" style="top:409px;background:linear-gradient(90deg,#232323 0px,#232323 22px,#00996a 23px,#009958 213px,#01ec87 214px,#03ff92 215px,#66ff86 259px,#d8ff7a 300px,#fffc74 313px,#ffc454 334px,#ff9539 360px,#ff671e 399px,#ff4008 453px,#ff3300 480px,#9f1f00 482px,#991d00 484px,#991500 522px,#831707 523px,#32211f 524px,#232323 525px,#232323 737px)"></div>
<div class="cs" style="top:410px;background:linear-gradient(90deg,#232323 0px,#232323 22px,#097b59 23px,#00996b 24px,#009959 212px,#00a660 213px,#01ff94 214px,#6aff88 260px,#d4ff7c 298px,#fffd76 312px,#ffc455 333px,#ff9238 361px,#ff641e 401px,#ff3c07 459px,#ff3200 481px,#f93000 482px,#bf2500 483px,#991d00 484px,#991400 523px,#921502 524px,#401f1a 525px,#232323 526px,#232323 737px)"></div>
<div class="cs" style="top:411px;background:linear-gradient(90deg,#232323 0px,#232323 22px,#0f654c 23px,#00996c 24px,#00995a 212px,#00d27b 213px,#02ff95 214px,#64ff8b 257px,#ceff7f 295px,#fffd79 311px,#ffc256 333px,#ff8f38 362px,#ff611d 403px,#ff3b07 460px,#ff3000 483px,#e62b00 484px,#ac2000 485px,#991c00 486px,#991300 525px,#232323 527px,#232323 737px)"></div>
<div class="cs" style="top:412px;background:linear-gradient(90deg,#232323 0px,#232323 22px,#18483a 23px,#00996d 24px,#00995b 212px,#01f290 213px,#03ff97 214px,#63ff8d 256px,#cdff81 294px,#fffe7b 310px,#ffc75b 330px,#ff933c 358px,#ff6722 396px,#ff400b 449px,#ff2f00 485px,#9f1d00 487px,#991b00 489px,#991300 526px,#7b1709 527px,#2a2221 528px,#232323 529px,#232323 737px)"></div>
<div class="cs" style="top:413px;background:linear-gradient(90deg,#232323 0px,#232323 22px,#1f322c 23px,#00996d 24px,#00995c 211px,#00b96f 212px,#02ff99 213px,#62ff8f 255px,#ccff84 293px,#fffc7c 310px,#ffc75d 329px,#ff933e 357px,#ff6623 395px,#ff3e0b 451px,#ff2e00 486px,#f22b00 487px,#b92000 488px,#991b00 489px,#991200 527px,#921302 528px,#401f1a 529px,#232323 530px,#232323 737px)"></div>
<div class="cs" style="top:414px;background:linear-gradient(90deg,#232323 0px,#232323 23px,#029269 24px,#00996e 25px,#00995d 211px,#00d984 212px,#02ff9b 213px,#66ff90 256px,#d1ff85 294px,#fffc7f 309px,#ffc55e 329px,#ff903d 358px,#ff6423 396px,#ff3b0a 455px,#ff2c00 488px,#e62700 489px,#a61c00 490px,#991a00 491px,#991200 529px,#232323 531px,#232323 737px)"></div>
<div class="cs" style="top:415px;background:linear-gradient(90deg,#232323 0px,#232323 23px,#0b7457 24px,#00996f 25px,#00995e 210px,#009f62 211px,#01f999 212px,#05ff9c 214px,#6aff92 257px,#d0ff88 293px,#fffd82 308px,#ffc861 327px,#ff9844 352px,#ff6b28 388px,#ff4410 438px,#ff2b00 490px,#9f1a00 492px,#991900 494px,#991100 530px,#7b1509 531px,#2a2221 532px,#232323 533px,#232323 737px)"></div>
<div class="cs" style="top:416px;background:linear-gradient(90deg,#232323 0px,#232323 23px,#009970 25px,#00995f 210px,#00bf77 211px,#02ff9e 212px,#66ff94 255px,#ccff8a 291px,#fffd84 307px,#ffc662 327px,#ff9342 354px,#ff6525 393px,#ff3f0e 445px,#ff2a00 491px,#f22700 492px,#b91e00 493px,#991800 494px,#991100 531px,#921202 532px,#391f1c 533px,#232323 534px,#232323 737px)"></div>
<div class="cs" style="top:417px;background:linear-gradient(90deg,#232323 0px,#232323 23px,#1a4036 24px,#009971 25px,#009960 210px,#01df8c 211px,#03ffa0 212px,#60ff97 252px,#c8ff8d 289px,#fffe87 306px,#ffc664 326px,#ff9344 353px,#ff6627 391px,#ff400f 442px,#ff2800 493px,#e62400 494px,#a61a00 495px,#991700 496px,#991000 533px,#571b14 534px,#232323 535px,#232323 737px)"></div>
<div class="cs" style="top:418px;background:linear-gradient(90deg,#232323 0px,#232323 24px,#009971 25px,#009962 209px,#00a66a 210px,#01ffa2 211px,#64ff99 253px,#cbff8f 289px,#fffe8a 305px,#ffc464 326px,#ff9345 352px,#ff682a 388px,#ff4212 437px,#ff2700 495px,#9f1800 497px,#991600 499px,#990f00 534px,#74150b 535px,#2a2221 536px,#232323 537px,#232323 737px)"></div>
<div class="cs" style="top:419px;background:linear-gradient(90deg,#232323 0px,#232323 24px,#078363 25px,#009972 26px,#009963 209px,#00c67f 210px,#02ffa4 211px,#68ff9b 254px,#d3ff91 291px,#fffc8b 305px,#ffc467 325px,#ff9347 351px,#ff6529 389px,#ff3c0f 446px,#ff2600 496px,#f22300 497px,#b91b00 498px,#991600 499px,#990f00 535px,#8a1104 536px,#391f1c 537px,#232323 538px,#232323 737px)"></div>
<div class="cs" style="top:420px;background:linear-gradient(90deg,#232323 0px,#232323 24px,#0f6550 25px,#009973 26px,#009964 209px,#01ec9a 210px,#03ffa6 211px,#67ff9d 253px,#cfff93 289px,#fffd8d 304px,#ffc76a 323px,#ff964b 348px,#ff672c 386px,#ff3f12 439px,#ff2400 498px,#e62000 499px,#a61700 500px,#991500 501px,#990e00 537px,#571a14 538px,#232323 539px,#232323 737px)"></div>
<div class="cs" style="top:421px;background:linear-gradient(90deg,#232323 0px,#232323 24px,#164f41 25px,#009974 26px,#009965 208px,#00ac72 209px,#01ffa8 210px,#6bff9f 254px,#d5ff95 290px,#fffd90 303px,#ffc269 324px,#ff9048 351px,#ff622a 390px,#ff3b10 445px,#ff2300 500px,#9f1500 502px,#991400 504px,#990e00 538px,#74140b 539px,#2a2221 540px,#232323 541px,#232323 737px)"></div>
<div class="cs" style="top:422px;background:linear-gradient(90deg,#232323 0px,#232323 24px,#1f322d 25px,#009975 26px,#009966 208px,#00d28c 209px,#02ffaa 210px,#67ffa1 252px,#d7ff97 290px,#fffe93 302px,#ffc56d 322px,#ff934c 348px,#ff652d 386px,#ff4014 435px,#ff2200 501px,#f22000 502px,#b91800 503px,#991400 504px,#990d00 539px,#8a1004 540px,#391f1c 541px,#232323 542px,#232323 737px)"></div>
<div class="cs" style="top:423px;background:linear-gradient(90deg,#232323 0px,#232323 25px,#029270 26px,#009976 27px,#009967 208px,#01f9a8 209px,#05ffac 211px,#69ffa3 252px,#d3ff9a 288px,#fffe96 301px,#ffc56f 321px,#ff904c 349px,#ff652e 385px,#ff3f15 435px,#ff2100 503px,#e61d00 504px,#a61500 505px,#991300 506px,#990d00 541px,#571914 542px,#232323 543px,#232323 737px)"></div>
<div class="cs" style="top:424px;background:linear-gradient(90deg,#232323 0px,#232323 25px,#0b745c 26px,#009976 27px,#009969 207px,#00b97e 208px,#02ffae 209px,#65ffa6 250px,#cfff9d 286px,#fffc97 301px,#ffc370 321px,#ff904d 348px,#ff652f 384px,#ff4017 432px,#ff1f00 505px,#9f1300 507px,#991200 509px,#990c00 542px,#74130b 543px,#2a2221 544px,#232323 545px,#232323 737px)"></div>
<div class="cs" style="top:425px;background:linear-gradient(90deg,#232323 0px,#232323 25px,#145748 26px,#009977 27px,#00996a 207px,#00d996 208px,#03ffb0 209px,#61ffa8 248px,#cbffa0 284px,#fffd9a 300px,#ffc876 318px,#ff9351 345px,#ff6431 383px,#ff3c15 437px,#ff1f00 506px,#f21d00 507px,#b21500 508px,#991200 509px,#990c00 543px,#8a0e04 544px,#391f1c 545px,#232323 546px,#232323 737px)"></div>
<div class="cs" style="top:426px;background:linear-gradient(90deg,#232323 0px,#232323 25px,#1a4038 26px,#009978 27px,#00996b 206px,#009f6f 207px,#01ffb2 208px,#68ffaa 250px,#d7ffa1 287px,#fffd9d 299px,#ffc173 320px,#ff9051 346px,#ff6230 384px,#ff3b15 438px,#ff1d00 508px,#df1900 509px,#a61300 510px,#991100 511px,#990b00 544px,#920d02 545px,#4f1a16 546px,#232323 547px,#232323 737px)"></div>
<div class="cs" style="top:427px;background:linear-gradient(90deg,#232323 0px,#232323 26px,#009979 27px,#00996c 206px,#00bf87 207px,#02ffb4 208px,#67ffac 249px,#d3ffa4 285px,#fffea0 298px,#ffc679 317px,#ff9354 343px,#ff6634 379px,#ff3e18 431px,#ff1c00 509px,#f91b00 510px,#991000 512px,#990b00 546px,#6d140d 547px,#2a2121 548px,#232323 549px,#232323 737px)"></div>
<div class="cs" style="top:428px;background:linear-gradient(90deg,#232323 0px,#232323 26px,#097b64 27px,#00997a 28px,#00996d 206px,#01e6a4 207px,#03ffb6 208px,#63ffaf 247px,#d5ffa6 285px,#fffea3 297px,#ffbf76 319px,#ff8b51 347px,#ff5d30 387px,#ff3715 442px,#ff1b00 511px,#f21900 512px,#b21300 513px,#991000 514px,#990a00 547px,#830f07 548px,#391e1c 549px,#232323 550px,#232323 737px)"></div>
<div class="cs" style="top:429px;background:linear-gradient(90deg,#232323 0px,#232323 26px,#00997b 28px,#00996f 205px,#00a678 206px,#01ffb8 207px,#6affb1 249px,#d1ffa9 283px,#fffca4 297px,#ffc47c 316px,#ff9358 341px,#ff6838 375px,#ff411d 423px,#ff1f04 498px,#ff1a00 513px,#df1600 514px,#a61000 515px,#990f00 516px,#990a00 548px,#920b02 549px,#4f1916 550px,#232323 551px,#232323 737px)"></div>
<div class="cs" style="top:430px;background:linear-gradient(90deg,#232323 0px,#232323 26px,#1a4039 27px,#00997c 28px,#009970 205px,#00c690 206px,#02ffba 207px,#69ffb3 248px,#d0ffac 282px,#fffda7 296px,#ffc27c 316px,#ff935a 340px,#ff6437 377px,#ff3c1a 430px,#ff1a01 511px,#ff1900 514px,#f91800 515px,#990f00 517px,#990900 550px,#6d130d 551px,#2a2121 552px,#232323 553px,#232323 737px)"></div>
<div class="cs" style="top:431px;background:linear-gradient(90deg,#232323 0px,#232323 26px,#212a29 27px,#00997d 28px,#009971 205px,#01f2b3 206px,#03ffbc 207px,#65ffb6 246px,#cfffae 281px,#fffdaa 295px,#ffc580 314px,#ff935b 339px,#ff653a 375px,#ff3d1c 427px,#ff1b03 506px,#ff1800 516px,#f21600 517px,#b21000 518px,#990e00 519px,#990900 551px,#830e07 552px,#391e1c 553px,#232323 554px,#232323 737px)"></div>
<div class="cs" style="top:432px;background:linear-gradient(90deg,#232323 0px,#232323 27px,#07836d 28px,#00997d 29px,#009973 204px,#00ac81 205px,#02ffbf 206px,#61ffb8 244px,#cbffb1 279px,#fffead 294px,#ffc583 313px,#ff905b 340px,#ff6339 376px,#ff3b1c 429px,#ff1902 510px,#ff1700 518px,#df1400 519px,#a60e00 520px,#990d00 521px,#990800 552px,#920a02 553px,#4f1916 554px,#232323 555px,#232323 737px)"></div>
<div class="cs" style="top:433px;background:linear-gradient(90deg,#232323 0px,#232323 27px,#0f6556 28px,#00997e 29px,#009974 204px,#00d9a4 205px,#02ffc1 206px,#68ffba 246px,#d4ffb3 281px,#fefeb0 293px,#ffc383 313px,#ff8e5b 340px,#ff623a 376px,#ff3c1d 426px,#ff1a03 506px,#ff1600 519px,#f91500 520px,#990d00 522px,#990800 554px,#6d120d 555px,#2a2121 556px,#232323 557px,#232323 737px)"></div>
<div class="cs" style="top:434px;background:linear-gradient(90deg,#232323 0px,#232323 27px,#184840 28px,#00997f 29px,#009975 204px,#01f9be 205px,#06ffc3 207px,#64ffbd 244px,#d0ffb6 279px,#fffcb1 293px,#ffc386 312px,#ff8e5d 339px,#ff623b 375px,#ff3c1f 424px,#ff1a04 504px,#ff1500 521px,#f21300 522px,#b20e00 523px,#990c00 524px,#990700 555px,#830c07 556px,#321f1f 557px,#232323 558px,#232323 737px)"></div>
<div class="cs" style="top:435px;background:linear-gradient(90deg,#232323 0px,#232323 27px,#212a29 28px,#009980 29px,#009976 203px,#00b98f 204px,#02ffc5 205px,#60ffc0 242px,#cfffb9 278px,#fffdb5 292px,#ffc68a 310px,#ff9162 336px,#ff613c 374px,#ff391d 428px,#ff1703 511px,#ff1400 523px,#df1100 524px,#a60c00 525px,#990b00 526px,#990700 556px,#920802 557px,#481a18 558px,#232323 559px,#232323 737px)"></div>
<div class="cs" style="top:436px;background:linear-gradient(90deg,#232323 0px,#232323 28px,#048a75 29px,#009981 30px,#009978 203px,#01dfaf 204px,#03ffc7 205px,#64ffc2 243px,#ceffbc 277px,#fffdb8 291px,#ffc68d 309px,#ff9163 335px,#ff623e 372px,#ff3a1f 425px,#ff1805 506px,#ff1300 524px,#f91200 525px,#990b00 527px,#990600 558px,#65130f 559px,#232323 560px,#232323 737px)"></div>
<div class="cs" style="top:437px;background:linear-gradient(90deg,#232323 0px,#232323 28px,#0d6d5e 29px,#009982 30px,#009979 202px,#009f7e 203px,#01ffca 204px,#69ffc4 244px,#cdffbf 276px,#fffebb 290px,#ffbf8a 311px,#ff8e63 336px,#ff613f 372px,#ff3b21 422px,#ff1906 501px,#ff1200 526px,#f21100 527px,#b20c00 528px,#990a00 529px,#990600 559px,#830b07 560px,#321f1f 561px,#232323 562px,#232323 737px)"></div>
<div class="cs" style="top:438px;background:linear-gradient(90deg,#232323 0px,#232323 28px,#164f47 29px,#009983 30px,#00997b 202px,#00bf99 203px,#02ffcc 204px,#6affc7 244px,#daffc1 279px,#fefebf 289px,#ffc28e 309px,#ff8c63 336px,#ff5e3e 374px,#ff3921 424px,#ff1907 500px,#ff1100 528px,#d90e00 529px,#9f0a00 530px,#990900 532px,#990500 560px,#920702 561px,#481a18 562px,#232323 563px,#232323 737px)"></div>
<div class="cs" style="top:439px;background:linear-gradient(90deg,#232323 0px,#232323 28px,#1f322f 29px,#009984 30px,#00997c 202px,#01ecbf 203px,#03ffce 204px,#69ffc9 243px,#d6ffc4 277px,#fffcbf 289px,#ffc291 308px,#ff8e66 334px,#ff6444 367px,#ff3e26 414px,#ff1d0b 486px,#ff1000 529px,#f90f00 530px,#990900 532px,#990500 562px,#65120f 563px,#232323 564px,#232323 737px)"></div>
<div class="cs" style="top:440px;background:linear-gradient(90deg,#232323 0px,#232323 29px,#048a79 30px,#009985 31px,#00997d 201px,#00a688 202px,#02ffd1 203px,#62ffcc 240px,#c7ffc7 272px,#fffdc3 288px,#ffca9a 304px,#ff966f 328px,#ff694a 361px,#ff422a 406px,#ff1e0d 481px,#ff0f00 531px,#ec0e00 532px,#b20a00 533px,#990900 534px,#990400 563px,#830a07 564px,#321f1f 565px,#232323 566px,#232323 737px)"></div>
<div class="cs" style="top:441px;background:linear-gradient(90deg,#232323 0px,#232323 29px,#0d6d61 30px,#009986 31px,#00997f 201px,#00d2ae 202px,#02ffd3 203px,#67ffcf 241px,#c6ffca 271px,#fffdc6 287px,#ffc094 307px,#ff8c69 333px,#ff5e43 370px,#ff3722 423px,#ff1607 504px,#ff0e00 533px,#d90c00 534px,#9f0800 535px,#990800 537px,#990400 564px,#920602 565px,#481918 566px,#232323 567px,#232323 737px)"></div>
<div class="cs" style="top:442px;background:linear-gradient(90deg,#232323 0px,#232323 29px,#164f49 30px,#009987 31px,#009980 201px,#01f2cb 202px,#03ffd5 203px,#6effd1 243px,#deffcc 277px,#fffeca 286px,#ffc59b 304px,#ff916f 329px,#ff6449 363px,#ff3d29 411px,#ff1b0c 486px,#ff0d00 534px,#f90d00 535px,#990700 537px,#990400 566px,#65110f 567px,#232323 568px,#232323 737px)"></div>
<div class="cs" style="top:443px;background:linear-gradient(90deg,#232323 0px,#232323 29px,#1f3230 30px,#009988 31px,#009982 200px,#00b297 201px,#02ffd8 202px,#64ffd4 239px,#cbffd0 271px,#fefecd 285px,#ffc39b 304px,#ff8e6e 330px,#ff6249 364px,#ff3b28 413px,#ff190b 490px,#ff0c00 536px,#ec0b00 537px,#b20800 538px,#990700 539px,#990300 567px,#830907 568px,#321f1f 569px,#232323 570px,#232323 737px)"></div>
<div class="cs" style="top:444px;background:linear-gradient(90deg,#232323 0px,#232323 30px,#048a7c 31px,#009989 32px,#009983 200px,#00d9ba 201px,#03ffda 202px,#63ffd7 238px,#c3ffd3 268px,#fffcce 285px,#ffc39e 303px,#ff8e70 329px,#ff644c 361px,#ff3d2b 408px,#ff1a0d 485px,#ff0b00 538px,#d90900 539px,#9f0700 540px,#990600 542px,#990300 568px,#920502 569px,#481918 570px,#232323 571px,#232323 737px)"></div>
<div class="cs" style="top:445px;background:linear-gradient(90deg,#232323 0px,#232323 30px,#0d6d63 31px,#00998a 32px,#009984 200px,#01f9d7 201px,#04ffdd 202px,#67ffd9 239px,#d4ffd5 272px,#fffdd2 284px,#ffc6a3 301px,#ff8f73 327px,#ff604b 363px,#ff3828 415px,#ff170b 493px,#ff0a00 539px,#f90a00 540px,#990600 542px,#990200 570px,#65110f 571px,#232323 572px,#232323 737px)"></div>
<div class="cs" style="top:446px;background:linear-gradient(90deg,#232323 0px,#232323 30px,#164f4a 31px,#00998b 32px,#009986 199px,#00bfa7 200px,#02ffdf 201px,#69ffdc 239px,#d3ffd9 271px,#fffdd6 283px,#ffc1a1 302px,#ff8a71 329px,#ff5c49 366px,#ff3627 418px,#ff170c 491px,#ff0900 541px,#ec0900 542px,#b20600 543px,#990500 544px,#990200 571px,#830807 572px,#321f1f 573px,#232323 574px,#232323 737px)"></div>
<div class="cs" style="top:447px;background:linear-gradient(90deg,#232323 0px,#232323 30px,#1f3230 31px,#00998c 32px,#009987 199px,#01dfc5 200px,#03ffe2 201px,#65ffdf 237px,#c7ffdc 267px,#fffeda 282px,#ffc4a6 300px,#ff9179 324px,#ff6451 357px,#ff3d2f 404px,#ff1b11 476px,#ff0900 543px,#d90700 544px,#9f0500 545px,#990500 547px,#990100 572px,#920302 573px,#481818 574px,#232323 575px,#232323 737px)"></div>
<div class="cs" style="top:448px;background:linear-gradient(90deg,#232323 0px,#232323 31px,#048a80 32px,#00998d 33px,#009989 198px,#009f8f 199px,#01ffe4 200px,#66ffe2 237px,#d1ffdf 269px,#fefedd 281px,#ffc2a7 300px,#ff8f7a 324px,#ff6453 356px,#ff3e31 401px,#ff1c12 472px,#ff0800 544px,#f90700 545px,#990400 547px,#990100 574px,#65100f 575px,#232323 576px,#232323 737px)"></div>
<div class="cs" style="top:449px;background:linear-gradient(90deg,#232323 0px,#232323 31px,#0d6d66 32px,#00998e 33px,#00998a 198px,#00c6b3 199px,#02ffe7 200px,#6effe4 239px,#dbffe2 271px,#fffcde 281px,#ffc8af 297px,#ff9682 319px,#ff6858 351px,#ff4135 395px,#ff1e16 464px,#ff0700 546px,#ec0600 547px,#b20500 548px,#990400 549px,#990100 575px,#830707 576px,#321f1f 577px,#232323 578px,#232323 737px)"></div>
<div class="cs" style="top:450px;background:linear-gradient(90deg,#232323 0px,#232323 31px,#164f4c 32px,#009990 33px,#00998c 198px,#01ecd8 199px,#03ffe9 200px,#6dffe7 238px,#d3ffe5 268px,#fffde2 280px,#ffc5af 297px,#ff9583 319px,#ff695b 349px,#ff4136 394px,#ff1e16 463px,#ff0600 548px,#d90500 549px,#9f0300 550px,#990300 552px,#990000 576px,#920202 577px,#481818 578px,#232323 579px,#232323 737px)"></div>
<div class="cs" style="top:451px;background:linear-gradient(90deg,#232323 0px,#232323 31px,#1f3231 32px,#009991 33px,#00998e 197px,#00ac9f 198px,#02ffec 199px,#62ffea 234px,#ceffe8 266px,#fffde6 279px,#ffc5b2 296px,#ff9485 318px,#ff685b 349px,#ff4138 392px,#ff1e17 461px,#ff0500 549px,#f90500 550px,#bf0400 551px,#990300 552px,#990000 578px,#650f0f 579px,#232323 580px,#232323 737px)"></div>
<div class="cs" style="top:452px;background:linear-gradient(90deg,#232323 0px,#232323 32px,#048a84 33px,#009992 34px,#00998f 197px,#00d2c5 198px,#03ffef 199px,#67ffed 235px,#d1ffeb 266px,#fffeea 278px,#ffc9b8 294px,#ff988b 315px,#ff6b60 345px,#ff433b 388px,#ff201a 455px,#ff0400 551px,#e60400 552px,#ac0300 553px,#990200 554px,#990000 579px,#830707 580px,#321f1f 581px,#232323 582px,#232323 737px)"></div>
<div class="cs" style="top:453px;background:linear-gradient(90deg,#232323 0px,#232323 32px,#0d6d69 33px,#009993 34px,#009991 197px,#01f2e5 198px,#04fff1 199px,#66fff0 234px,#ccffef 264px,#feffee 277px,#ffc6b8 294px,#ff9489 316px,#ff665e 348px,#ff413a 390px,#ff1f1a 455px,#ff0400 553px,#9f0200 555px,#990200 557px,#990000 580px,#920202 581px,#481818 582px,#232323 583px,#232323 737px)"></div>
<div class="cs" style="top:454px;background:linear-gradient(90deg,#232323 0px,#232323 32px,#184846 33px,#009994 34px,#009992 196px,#00b9b1 197px,#02fff4 198px,#61fff3 232px,#cffff2 264px,#fffcef 277px,#ffc6bb 293px,#ff948c 315px,#ff6b64 343px,#ff433e 385px,#ff201c 451px,#ff0301 553px,#f90300 555px,#bf0200 556px,#990100 557px,#990000 582px,#650f0f 583px,#232323 584px,#232323 737px)"></div>
<div class="cs" style="top:455px;background:linear-gradient(90deg,#232323 0px,#232323 32px,#212a2a 33px,#009995 34px,#009994 196px,#01d9d2 197px,#03fff7 198px,#69fff6 234px,#ddfff5 267px,#fffdf3 276px,#ffc7bf 292px,#ff9892 312px,#ff6d68 340px,#ff4541 381px,#ff221f 444px,#ff0503 542px,#ff0200 556px,#e60200 557px,#ac0100 558px,#990100 559px,#990000 583px,#830707 584px,#321f1f 585px,#232323 586px,#232323 737px)"></div>
<div class="cs" style="top:456px;background:linear-gradient(90deg,#232323 0px,#232323 33px,#078381 34px,#009996 35px,#009996 195px,#009f9c 196px,#01f9f3 197px,#06fff9 199px,#6efff9 235px,#e0fff9 267px,#fffdf7 275px,#ffc7c2 291px,#ff9490 313px,#ff6865 343px,#ff413f 385px,#ff1f1d 450px,#ff0302 550px,#ff0100 558px,#9f0000 560px,#990000 562px,#990000 584px,#920202 585px,#401a1a 586px,#232323 587px,#232323 737px)"></div>
<div class="cs" style="top:457px;background:linear-gradient(90deg,#232323 0px,#232323 33px,#0f6564 34px,#009997 35px,#009997 195px,#00bfbd 196px,#02fffc 197px,#6afffc 233px,#d7fffc 264px,#fffefb 274px,#ffc4c2 291px,#ff9391 313px,#ff6968 341px,#ff4342 381px,#ff1f1f 447px,#ff0202 550px,#ff0000 559px,#f90000 560px,#ac0000 561px,#990000 562px,#990000 586px,#232323 588px,#232323 737px)"></div>
<div class="cs" style="top:458px;background:linear-gradient(90deg,#232323 0px,#232323 33px,#184848 34px,#009999 35px,#009999 195px,#01e5e5 196px,#03ffff 197px,#68feff 232px,#d6feff 263px,#fffbfc 274px,#ffc5c5 290px,#ff9495 311px,#ff6768 341px,#ff4141 383px,#ff2021 444px,#ff0506 534px,#ff0001 557px,#f90001 558px,#a60000 560px,#990000 561px,#990000 587px,#7b0909 588px,#2a2121 589px,#232323 590px,#232323 737px)"></div>
<div class="cs" style="top:459px;background:linear-gradient(90deg,#232323 0px,#232323 33px,#212a2a 34px,#009899 35px,#009799 194px,#00a4a6 195px,#02fcff 196px,#5ffcff 229px,#cefbff 261px,#fff8fc 274px,#ffc2c6 290px,#ff9497 310px,#ff676a 340px,#ff4143 381px,#ff1f21 444px,#ff0305 540px,#ff0002 555px,#ec0001 556px,#bf0001 557px,#9f0001 558px,#990000 560px,#990000 588px,#920202 589px,#401a1a 590px,#232323 591px,#232323 737px)"></div>
<div class="cs" style="top:460px;background:linear-gradient(90deg,#232323 0px,#232323 34px,#097a7b 35px,#009799 36px,#009699 194px,#00c1c6 195px,#03f9ff 196px,#69f9ff 232px,#d6f8ff 263px,#fff5fc 274px,#ffc3c9 289px,#ff9298 310px,#ff686d 338px,#ff4245 379px,#ff2124 438px,#ff0507 532px,#ff0002 553px,#b20001 555px,#990001 556px,#990000 590px,#232323 592px,#232323 737px)"></div>
<div class="cs" style="top:461px;background:linear-gradient(90deg,#232323 0px,#232323 34px,#009699 36px,#009499 194px,#01eaf2 195px,#03f7ff 196px,#70f5ff 234px,#e1f4ff 266px,#fff1fd 274px,#ffbdc7 290px,#ff9198 310px,#ff676d 338px,#ff3f44 381px,#ff1d21 446px,#ff0104 547px,#ff0003 550px,#f20003 551px,#cc0002 552px,#9f0002 553px,#990001 555px,#990000 591px,#7b0909 592px,#2a2121 593px,#232323 594px,#232323 737px)"></div>
<div class="cs" style="top:462px;background:linear-gradient(90deg,#232323 0px,#232323 34px,#1a3f40 35px,#009599 36px,#009299 193px,#00a5ac 194px,#02f4ff 195px,#67f2ff 231px,#d2f1ff 262px,#ffeefd 274px,#ffb8c4 291px,#ff8993 313px,#ff5f67 344px,#ff3b41 386px,#ff191e 455px,#ff0004 548px,#e50003 549px,#b90003 550px,#990002 551px,#990000 592px,#8a0404 593px,#391c1c 594px,#232323 595px,#232323 737px)"></div>
<div class="cs" style="top:463px;background:linear-gradient(90deg,#232323 0px,#232323 35px,#028d92 36px,#009499 37px,#009199 193px,#00c7d2 194px,#03f1ff 195px,#65f0ff 230px,#ceeeff 261px,#ffebfd 274px,#ffb8c8 290px,#ff8d99 310px,#ff636d 339px,#ff3d45 381px,#ff1b21 447px,#ff0005 545px,#f90005 546px,#d90004 547px,#a60003 548px,#990003 549px,#990000 594px,#571414 595px,#232323 596px,#232323 737px)"></div>
<div class="cs" style="top:464px;background:linear-gradient(90deg,#232323 0px,#232323 35px,#0b7074 36px,#009299 37px,#008f99 193px,#01e9f9 194px,#06eeff 196px,#68ecff 231px,#d9eaff 264px,#ffe8fd 274px,#ffb3c5 291px,#ff8694 313px,#ff5d69 343px,#ff3b44 383px,#ff1a21 449px,#ff0006 543px,#f20005 544px,#bf0004 545px,#9f0003 546px,#990003 548px,#990000 595px,#740b0b 596px,#2a2121 597px,#232323 598px,#232323 737px)"></div>
<div class="cs" style="top:465px;background:linear-gradient(90deg,#232323 0px,#232323 35px,#145357 36px,#009199 37px,#008e99 192px,#00abb9 193px,#02ecff 194px,#66eaff 230px,#cee7ff 261px,#ffe5fe 274px,#ffb4c8 290px,#ff8798 311px,#ff5b68 344px,#ff3742 387px,#ff1921 450px,#ff0006 541px,#b20004 543px,#990004 544px,#990000 596px,#8a0404 597px,#391c1c 598px,#232323 599px,#232323 737px)"></div>
<div class="cs" style="top:466px;background:linear-gradient(90deg,#232323 0px,#232323 35px,#1c3739 36px,#009099 37px,#008c99 192px,#01c6d9 193px,#03e9ff 194px,#69e7ff 231px,#dde4ff 265px,#ffe2fe 274px,#ffafc6 291px,#ff8193 314px,#ff5766 346px,#ff333e 393px,#ff151e 459px,#ff0007 538px,#f20007 539px,#a60004 541px,#990004 542px,#990000 598px,#4f1616 599px,#232323 600px,#232323 737px)"></div>
<div class="cs" style="top:467px;background:linear-gradient(90deg,#232323 0px,#232323 36px,#04828a 37px,#008f99 38px,#008a99 191px,#00909f 192px,#01e7ff 193px,#67e4ff 230px,#d2e1ff 262px,#ffdffe 274px,#ffacc6 291px,#ff7d92 315px,#ff5566 347px,#ff323f 392px,#ff131d 463px,#ff0008 536px,#e50007 537px,#990005 539px,#990000 599px,#6d0d0d 600px,#2a2121 601px,#232323 602px,#232323 737px)"></div>
<div class="cs" style="top:468px;background:linear-gradient(90deg,#232323 0px,#232323 36px,#0d666d 37px,#008e99 38px,#008999 191px,#00abbf 192px,#02e4ff 193px,#6de1ff 232px,#ddddff 265px,#ffdcfe 274px,#ffaac7 291px,#ff7d94 314px,#ff5365 348px,#ff2f3d 396px,#ff101b 469px,#ff0009 533px,#f90009 534px,#d90007 535px,#a60006 536px,#990005 537px,#990000 600px,#830707 601px,#391c1c 602px,#232323 603px,#232323 737px)"></div>
<div class="cs" style="top:469px;background:linear-gradient(90deg,#232323 0px,#232323 36px,#164b4f 37px,#008d99 38px,#008799 191px,#01d1ec 192px,#03e2ff 193px,#6bdeff 231px,#d2dbff 262px,#ffd9fe 274px,#ffa5c5 292px,#ff7b95 314px,#ff5469 345px,#ff3242 389px,#ff121e 462px,#ff000a 531px,#f20009 532px,#bf0007 533px,#9f0006 534px,#990005 536px,#990000 601px,#920202 602px,#4f1616 603px,#232323 604px,#232323 737px)"></div>
<div class="cs" style="top:470px;background:linear-gradient(90deg,#232323 0px,#232323 36px,#212a2a 37px,#008c99 38px,#008699 190px,#0091a6 191px,#02dfff 192px,#68dbff 230px,#d9d7ff 264px,#ffd5fe 274px,#ffa1c2 293px,#ff728d 319px,#ff4c61 353px,#ff2a3a 402px,#ff0c18 481px,#ff000b 529px,#b20007 531px,#990006 532px,#990000 603px,#6d0d0d 604px,#2a2121 605px,#232323 606px,#232323 737px)"></div>
<div class="cs" style="top:471px;background:linear-gradient(90deg,#232323 0px,#232323 37px,#077783 38px,#008b99 39px,#008499 190px,#02ddff 192px,#69d9ff 230px,#d2d5ff 262px,#fed2ff 274px,#ffa1c5 292px,#ff7592 316px,#ff4e66 349px,#ff2f41 392px,#ff111f 461px,#ff000c 526px,#f9000b 527px,#cc0009 528px,#a60007 529px,#990007 530px,#990000 604px,#830707 605px,#391c1c 606px,#232323 607px,#232323 737px)"></div>
<div class="cs" style="top:472px;background:linear-gradient(90deg,#232323 0px,#232323 37px,#0f5d65 38px,#008999 39px,#008399 190px,#01cff2 191px,#03daff 192px,#6fd6ff 232px,#e0d1ff 266px,#fecfff 274px,#ff9dc3 293px,#ff7090 318px,#ff4b64 351px,#ff2b3e 397px,#ff0d1c 471px,#ff000d 524px,#e5000b 525px,#990007 527px,#990000 605px,#920202 606px,#4f1616 607px,#232323 608px,#232323 737px)"></div>
<div class="cs" style="top:473px;background:linear-gradient(90deg,#232323 0px,#232323 37px,#1a3c40 38px,#008899 39px,#008299 189px,#0092ac 190px,#02d8ff 191px,#64d3ff 228px,#cecfff 261px,#ffcafc 275px,#ff9dc6 292px,#ff7395 315px,#ff4d69 347px,#ff2c41 393px,#ff0e1e 466px,#ff000e 521px,#f9000d 522px,#d9000b 523px,#ac0009 524px,#990008 525px,#990000 607px,#650f0f 608px,#232323 609px,#232323 737px)"></div>
<div class="cs" style="top:474px;background:linear-gradient(90deg,#232323 0px,#232323 38px,#008799 39px,#008099 189px,#00b5d9 190px,#03d5ff 191px,#5fd1ff 226px,#c7ccff 259px,#ffc7fc 275px,#ff9dc9 291px,#ff7397 314px,#ff4b68 348px,#ff2b41 394px,#ff0d1e 467px,#ff000f 519px,#f2000e 520px,#9f0009 522px,#990008 524px,#990000 608px,#830707 609px,#321f1f 610px,#232323 611px,#232323 737px)"></div>
<div class="cs" style="top:475px;background:linear-gradient(90deg,#232323 0px,#232323 38px,#0b6774 39px,#008699 40px,#007f99 189px,#01cef9 190px,#06d3ff 192px,#68ceff 229px,#cec9ff 261px,#ffc4fc 275px,#ff92bf 295px,#ff678c 321px,#ff425f 357px,#ff2339 408px,#ff0818 486px,#ff000f 517px,#df000d 518px,#b2000a 519px,#990009 520px,#990000 609px,#920202 610px,#481818 611px,#232323 612px,#232323 737px)"></div>
<div class="cs" style="top:476px;background:linear-gradient(90deg,#232323 0px,#232323 38px,#144e57 39px,#008599 40px,#007d99 188px,#009cbf 189px,#02d1ff 190px,#68cbff 229px,#d5c6ff 263px,#ffc2fc 275px,#ff92c2 294px,#ff678e 320px,#ff4564 353px,#ff263e 400px,#ff0a1c 475px,#ff0010 514px,#f90010 515px,#cc000d 516px,#a6000a 517px,#990009 518px,#990000 611px,#6d0d0d 612px,#2a2121 613px,#232323 614px,#232323 737px)"></div>
<div class="cs" style="top:477px;background:linear-gradient(90deg,#232323 0px,#232323 38px,#1f2f32 39px,#008499 40px,#007c99 188px,#01b4df 189px,#03ceff 190px,#66c9ff 228px,#d5c3ff 263px,#ffbffd 275px,#ff96ca 291px,#ff6b95 316px,#ff4465 352px,#ff243d 402px,#ff071a 482px,#ff0011 512px,#e5000f 513px,#99000a 515px,#990000 612px,#830707 613px,#391c1c 614px,#232323 615px,#232323 737px)"></div>
<div class="cs" style="top:478px;background:linear-gradient(90deg,#232323 0px,#232323 39px,#04778a 40px,#008399 41px,#007b99 187px,#00809f 188px,#01ccff 189px,#69c6ff 229px,#dcc0ff 265px,#ffbcfd 275px,#ff8cc1 295px,#ff638d 321px,#ff3f61 357px,#ff223c 405px,#ff071a 483px,#ff0012 510px,#d9000f 511px,#ac000c 512px,#99000a 513px,#990000 613px,#920202 614px,#481818 615px,#232323 616px,#232323 737px)"></div>
<div class="cs" style="top:479px;background:linear-gradient(90deg,#232323 0px,#232323 39px,#0d5e6d 40px,#008299 41px,#007999 187px,#009cc6 188px,#02caff 189px,#6ac4ff 229px,#d5bdff 263px,#ffb9fd 275px,#ff8ec6 293px,#ff6491 319px,#ff4063 355px,#ff213d 404px,#ff071b 481px,#ff0013 507px,#f20012 508px,#9f000c 510px,#99000b 512px,#990000 615px,#650f0f 616px,#232323 617px,#232323 737px)"></div>
<div class="cs" style="top:480px;background:linear-gradient(90deg,#232323 0px,#232323 39px,#184048 40px,#008199 41px,#007899 187px,#01b8ec 188px,#03c7ff 189px,#6ac1ff 229px,#d5baff 263px,#ffb7fd 275px,#ff8cc6 293px,#ff6292 319px,#ff4268 351px,#ff2543 395px,#ff0920 468px,#ff0014 505px,#99000c 508px,#990000 616px,#830707 617px,#321f1f 618px,#232323 619px,#232323 737px)"></div>
<div class="cs" style="top:481px;background:linear-gradient(90deg,#232323 0px,#232323 39px,#21292a 40px,#008099 41px,#007699 186px,#0080a6 187px,#02c5ff 188px,#65bfff 227px,#cbb8ff 260px,#ffb4fe 275px,#ff84bf 296px,#ff5b8a 324px,#ff375c 363px,#ff1a36 418px,#ff0116 500px,#ff0015 502px,#f90015 503px,#a6000d 505px,#99000c 506px,#990000 617px,#920202 618px,#481818 619px,#232323 620px,#232323 737px)"></div>
<div class="cs" style="top:482px;background:linear-gradient(90deg,#232323 0px,#232323 40px,#09687b 41px,#007f99 42px,#007599 186px,#00a1d2 187px,#02c3ff 188px,#6bbcff 229px,#dcb5ff 265px,#ffb1fe 275px,#ff84c2 295px,#ff5d8f 321px,#ff3b63 356px,#ff1d3b 409px,#ff0219 491px,#ff0016 500px,#ec0014 501px,#bf0010 502px,#99000d 503px,#990000 619px,#650f0f 620px,#232323 621px,#232323 737px)"></div>
<div class="cs" style="top:483px;background:linear-gradient(90deg,#232323 0px,#232323 40px,#144b57 41px,#007e99 42px,#007499 186px,#01b7f2 187px,#03c1ff 188px,#69baff 228px,#d5b2ff 263px,#ffaffe 275px,#ff84c5 294px,#ff5d91 320px,#ff3a64 356px,#ff1e3e 405px,#ff051d 480px,#ff0017 498px,#d90013 499px,#ac000f 500px,#99000d 501px,#990000 620px,#830707 621px,#2a2121 622px,#232323 623px,#232323 737px)"></div>
<div class="cs" style="top:484px;background:linear-gradient(90deg,#232323 0px,#232323 40px,#1c3439 41px,#007d99 42px,#007299 185px,#0085b2 186px,#02bfff 187px,#64b8ff 226px,#cbb0ff 260px,#ffacfe 275px,#ff80c3 295px,#ff5a90 321px,#ff3761 359px,#ff1838 416px,#ff0018 495px,#f20017 496px,#9f000f 498px,#99000e 500px,#990000 621px,#920202 622px,#401a1a 623px,#232323 624px,#232323 737px)"></div>
<div class="cs" style="top:485px;background:linear-gradient(90deg,#232323 0px,#232323 41px,#04718a 42px,#007c99 43px,#007199 185px,#00a0d9 186px,#03bcff 187px,#64b5ff 226px,#cbaeff 260px,#ffaafe 275px,#ff7ec3 295px,#ff5a92 320px,#ff3865 356px,#ff1d40 403px,#ff041e 479px,#ff0019 493px,#e50017 494px,#b90012 495px,#99000f 496px,#990000 623px,#232323 625px,#232323 737px)"></div>
<div class="cs" style="top:486px;background:linear-gradient(90deg,#232323 0px,#232323 41px,#0d5a6d 42px,#007b99 43px,#007099 184px,#00749f 185px,#01b6f9 186px,#06baff 188px,#67b3ff 227px,#d5aaff 263px,#ffa7fe 275px,#ff7ec6 294px,#ff5791 321px,#ff3663 358px,#ff183b 412px,#ff001b 490px,#f9001a 491px,#a60011 493px,#99000f 494px,#990000 624px,#7b0909 625px,#2a2121 626px,#232323 627px,#232323 737px)"></div>
<div class="cs" style="top:487px;background:linear-gradient(90deg,#232323 0px,#232323 41px,#183e48 42px,#007a99 43px,#006f99 184px,#008abf 185px,#02b8ff 186px,#6db0ff 229px,#dfa7ff 266px,#ffa4ff 275px,#ff7ac4 295px,#ff5793 320px,#ff3666 356px,#ff1a3f 406px,#ff011d 484px,#ff001c 488px,#ec0019 489px,#bf0014 490px,#9f0011 491px,#990010 493px,#990000 625px,#920202 626px,#401a1a 627px,#232323 628px,#232323 737px)"></div>
<div class="cs" style="top:488px;background:linear-gradient(90deg,#232323 0px,#232323 41px,#21282a 42px,#007999 43px,#006d99 184px,#019fdf 185px,#03b6ff 186px,#63aeff 225px,#d5a5ff 263px,#ffa0fc 276px,#ff7ac7 294px,#ff5390 322px,#ff3160 362px,#ff1438 419px,#ff001d 486px,#b20014 488px,#990011 489px,#990000 626px,#990000 627px,#232323 629px,#232323 737px)"></div>
<div class="cs" style="top:489px;background:linear-gradient(90deg,#232323 0px,#232323 42px,#09627b 43px,#007799 44px,#006c99 183px,#0075a6 184px,#01b4ff 185px,#69acff 227px,#d5a3ff 263px,#ff9dfc 276px,#ff78c7 294px,#ff5392 321px,#ff3366 357px,#ff1941 404px,#ff011f 480px,#ff001e 483px,#f2001c 484px,#cc0017 485px,#9f0012 486px,#990011 488px,#990000 628px,#740b0b 629px,#2a2121 630px,#232323 631px,#232323 737px)"></div>
<div class="cs" style="top:490px;background:linear-gradient(90deg,#232323 0px,#232323 42px,#144857 43px,#007699 44px,#006b99 183px,#008ac6 184px,#02b2ff 185px,#64aaff 225px,#d9a0ff 264px,#ff9bfc 276px,#ff74c5 295px,#ff5091 322px,#ff3063 360px,#ff153c 413px,#ff001f 481px,#e5001c 482px,#b90016 483px,#990012 484px,#990000 629px,#8a0404 630px,#391c1c 631px,#232323 632px,#232323 737px)"></div>
<div class="cs" style="top:491px;background:linear-gradient(90deg,#232323 0px,#232323 42px,#1f2d32 43px,#007599 44px,#006a99 183px,#01a3ec 184px,#03b0ff 185px,#67a7ff 226px,#df9dff 266px,#ff98fc 276px,#ff71c3 296px,#ff4e90 323px,#ff3065 359px,#ff163f 409px,#ff0120 478px,#f9001f 479px,#a60014 481px,#990013 482px,#990000 626px,#990000 631px,#571414 632px,#232323 633px,#232323 737px)"></div>
<div class="cs" style="top:492px;background:linear-gradient(90deg,#232323 0px,#232323 43px,#046a8a 44px,#007499 45px,#006999 182px,#0075ac 183px,#02aeff 184px,#62a5ff 224px,#cb9cff 260px,#ff96fd 276px,#ff72c8 294px,#ff5095 320px,#ff3067 357px,#ff1641 406px,#ff0021 476px,#f2001f 477px,#bf0018 478px,#9f0014 479px,#990013 481px,#990000 630px,#990000 632px,#7b0909 633px,#2a2121 634px,#232323 635px,#232323 737px)"></div>
<div class="cs" style="top:493px;background:linear-gradient(90deg,#232323 0px,#232323 43px,#0f5065 44px,#007399 45px,#006799 182px,#008ed2 183px,#02acff 184px,#68a3ff 226px,#cc9aff 260px,#ff94fd 276px,#ff6fc6 295px,#ff4b91 323px,#ff2d64 360px,#ff113b 417px,#ff0022 474px,#b20018 476px,#990014 477px,#990000 629px,#990000 633px,#920202 634px,#401a1a 635px,#232323 636px,#232323 737px)"></div>
<div class="cs" style="top:494px;background:linear-gradient(90deg,#232323 0px,#232323 43px,#1a3740 44px,#007299 45px,#006699 182px,#01a6f9 183px,#05a9ff 185px,#6ba0ff 227px,#d896ff 264px,#ff91fd 276px,#ff6cc4 296px,#ff4b93 322px,#ff2d67 358px,#ff133f 411px,#ff0024 471px,#f20022 472px,#a60017 474px,#990015 475px,#990000 626px,#990000 635px,#232323 637px,#232323 737px)"></div>
<div class="cs" style="top:495px;background:linear-gradient(90deg,#232323 0px,#232323 44px,#026d92 45px,#007199 46px,#006599 181px,#007ab9 182px,#02a8ff 183px,#619fff 223px,#c895ff 259px,#ff8ffd 276px,#ff68c2 297px,#ff458d 326px,#ff2760 366px,#ff0f3b 419px,#ff0025 469px,#e50021 470px,#990015 472px,#990000 631px,#990000 636px,#740b0b 637px,#2a2121 638px,#232323 639px,#232323 737px)"></div>
<div class="cs" style="top:496px;background:linear-gradient(90deg,#232323 0px,#232323 44px,#0d536d 45px,#007099 46px,#006499 181px,#008dd9 182px,#02a6ff 183px,#6c9cff 227px,#d891ff 264px,#ff8dfe 276px,#ff69c7 295px,#ff4792 323px,#ff2965 361px,#ff103e 414px,#ff0126 466px,#f90025 467px,#d90020 468px,#a60018 469px,#990016 470px,#990000 629px,#990000 637px,#8a0404 638px,#391c1c 639px,#232323 640px,#232323 737px)"></div>
<div class="cs" style="top:497px;background:linear-gradient(90deg,#232323 0px,#232323 44px,#16404f 45px,#007099 46px,#006399 180px,#00679f 181px,#01a4ff 182px,#679aff 225px,#cf90ff 261px,#ff8afe 276px,#ff66c5 296px,#ff4591 324px,#ff2662 364px,#ff0d3a 422px,#ff0027 464px,#f20025 465px,#bf001d 466px,#9f0018 467px,#990017 469px,#990002 610px,#990000 639px,#571414 640px,#232323 641px,#232323 737px)"></div>
<div class="cs" style="top:498px;background:linear-gradient(90deg,#232323 0px,#232323 44px,#21282a 45px,#006f99 46px,#006199 180px,#007abf 181px,#02a2ff 182px,#6798ff 225px,#d88dff 264px,#ff88fe 276px,#ff66c8 295px,#ff4493 323px,#ff2868 359px,#ff1142 408px,#ff0029 462px,#b2001c 464px,#990018 465px,#990002 610px,#990000 640px,#740b0b 641px,#2a2121 642px,#232323 643px,#232323 737px)"></div>
<div class="cs" style="top:499px;background:linear-gradient(90deg,#232323 0px,#232323 45px,#0b5674 46px,#006e99 47px,#006099 180px,#0190e6 181px,#03a0ff 182px,#6596ff 224px,#d88aff 264px,#ff86fe 276px,#ff63c6 296px,#ff4495 322px,#ff2767 360px,#ff0f41 411px,#ff012a 459px,#f20028 460px,#a6001b 462px,#990018 463px,#990001 621px,#990000 639px,#740b0b 640px,#481818 641px,#232323 642px,#232323 737px)"></div>
<div class="cs" style="top:500px;background:linear-gradient(90deg,#232323 0px,#232323 45px,#144357 46px,#006d99 47px,#005f99 179px,#0067a6 180px,#019eff 181px,#6b93ff 226px,#db88ff 265px,#ff84fe 276px,#ff60c4 297px,#ff4294 323px,#ff2667 360px,#ff0d3f 415px,#ff002b 457px,#e50027 458px,#990019 460px,#990002 614px,#990000 636px,#2a2121 639px,#232323 640px,#232323 737px)"></div>
<div class="cs" style="top:501px;background:linear-gradient(90deg,#232323 0px,#232323 45px,#1f2c32 46px,#006c99 47px,#005e99 179px,#0079c6 180px,#029cff 181px,#6692ff 224px,#d286ff 262px,#ff81fe 276px,#ff5fc7 296px,#ff4094 323px,#ff2466 362px,#ff0c40 414px,#ff012d 454px,#f9002b 455px,#d90025 456px,#ac001d 457px,#99001a 458px,#990003 604px,#990000 633px,#830707 634px,#571414 635px,#321f1f 636px,#232323 637px,#232323 737px)"></div>
<div class="cs" style="top:502px;background:linear-gradient(90deg,#232323 0px,#232323 46px,#075d83 47px,#006b99 48px,#005d99 179px,#0193f2 180px,#039aff 181px,#5f91ff 221px,#c985ff 259px,#ff7ffe 276px,#ff5cc5 297px,#ff3e93 324px,#ff2265 363px,#ff0a3d 420px,#ff002e 452px,#f2002b 453px,#9f001c 455px,#99001a 457px,#990003 607px,#990000 630px,#8a0405 631px,#321f1f 633px,#232323 634px,#232323 636px,#351616 639px,#232323 640px,#232323 737px)"></div>
<div class="cs" style="top:503px;background:linear-gradient(90deg,#232323 0px,#232323 46px,#006a99 48px,#005c99 178px,#0067ac 179px,#0199ff 180px,#6c8dff 226px,#de81ff 266px,#ff7bfc 277px,#ff5dca 295px,#ff3f98 321px,#ff256c 357px,#ff0e46 405px,#ff002f 450px,#df0029 451px,#b20020 452px,#99001c 453px,#990005 588px,#990001 627px,#8a0405 628px,#650f10 629px,#391c1d 630px,#232323 631px,#272020 634px,#391313 637px,#232323 640px,#232323 737px)"></div>
<div class="cs" style="top:504px;background:linear-gradient(90deg,#232323 0px,#232323 46px,#1c3039 47px,#006999 48px,#005b99 178px,#0080d9 179px,#0297ff 180px,#6a8bff 225px,#d57fff 263px,#ff79fc 277px,#ff57c3 298px,#ff3a91 326px,#ff1f64 365px,#ff073c 423px,#ff0131 447px,#f9002f 448px,#cc0026 449px,#a6001f 450px,#99001c 451px,#990005 592px,#990001 624px,#920203 625px,#232323 628px,#262121 631px,#361515 633px,#391313 634px,#242222 637px,#232323 737px)"></div>
<div class="cs" style="top:505px;background:linear-gradient(90deg,#232323 0px,#232323 47px,#045f8a 48px,#006899 49px,#005a99 178px,#0191f9 179px,#0595ff 181px,#6a89ff 225px,#de7cff 266px,#ff77fc 277px,#ff56c4 298px,#ff3993 325px,#ff1f67 363px,#ff0941 415px,#ff0032 445px,#e5002d 446px,#99001d 448px,#990005 591px,#990002 622px,#6d0d0e 623px,#232323 625px,#242222 628px,#391313 631px,#242222 634px,#232323 737px)"></div>
<div class="cs" style="top:506px;background:linear-gradient(90deg,#232323 0px,#232323 47px,#0f4965 48px,#006799 49px,#005999 177px,#006bb9 178px,#0293ff 179px,#6388ff 222px,#cf7cff 261px,#ff75fc 277px,#ff53c2 299px,#ff3792 326px,#ff1d64 366px,#ff063d 423px,#ff0134 442px,#f90032 443px,#d9002b 444px,#ac0022 445px,#99001e 446px,#990007 577px,#990002 619px,#2a2121 622px,#232323 623px,#242222 625px,#391314 628px,#2d1c1c 630px,#232323 632px,#232323 737px)"></div>
<div class="cs" style="top:507px;background:linear-gradient(90deg,#232323 0px,#232323 47px,#1c3039 48px,#006699 49px,#005899 177px,#0080df 178px,#0292ff 179px,#6b85ff 225px,#db78ff 265px,#ff73fd 277px,#ff55c9 296px,#ff3998 322px,#ff1e68 362px,#ff0740 418px,#ff0035 440px,#f20032 441px,#9f0020 443px,#99001e 445px,#990006 587px,#990003 616px,#830709 617px,#2a2121 619px,#232323 620px,#232323 622px,#391314 625px,#232323 629px,#232323 737px)"></div>
<div class="cs" style="top:508px;background:linear-gradient(90deg,#232323 0px,#232323 48px,#026192 49px,#006599 50px,#005799 176px,#005a9f 177px,#0190ff 178px,#6484ff 222px,#d277ff 262px,#ff70fd 277px,#ff52c7 297px,#ff3594 325px,#ff1b66 365px,#ff053e 422px,#ff0036 438px,#990020 441px,#990009 564px,#990003 613px,#8a0407 614px,#571415 615px,#321f1f 616px,#232323 617px,#232323 619px,#381415 622px,#381415 623px,#232323 626px,#232323 737px)"></div>
<div class="cs" style="top:509px;background:linear-gradient(90deg,#232323 0px,#232323 48px,#0d4c6d 49px,#006499 50px,#005699 176px,#006bbf 177px,#028eff 178px,#6282ff 221px,#cc76ff 260px,#ff6efd 277px,#ff4fc5 298px,#ff3393 326px,#ff1b67 364px,#ff053f 421px,#ff0138 435px,#f90036 436px,#a60024 438px,#990021 439px,#99000a 557px,#990004 610px,#8a0407 611px,#650f11 612px,#391c1d 613px,#232323 614px,#272020 617px,#391314 620px,#232323 623px,#232323 737px)"></div>
<div class="cs" style="top:510px;background:linear-gradient(90deg,#232323 0px,#232323 48px,#183748 49px,#006399 50px,#005499 176px,#0182ec 177px,#038cff 178px,#6081ff 220px,#cc74ff 260px,#ff6cfd 277px,#ff4fc8 297px,#ff3598 323px,#ff1d6d 359px,#ff0846 409px,#ff0039 433px,#ec0035 434px,#bf002a 435px,#990022 436px,#99000a 557px,#990004 607px,#920206 608px,#6d0d0f 609px,#401a1b 610px,#232323 611px,#262121 614px,#361516 616px,#391314 617px,#242222 620px,#232323 737px)"></div>
<div class="cs" style="top:511px;background:linear-gradient(90deg,#232323 0px,#232323 49px,#025e92 50px,#006299 51px,#005499 175px,#005aa6 176px,#018bff 177px,#6a7eff 224px,#d870ff 264px,#ff6afd 277px,#ff4cc6 298px,#ff3397 324px,#ff1a69 363px,#ff0442 417px,#ff003b 431px,#d90032 432px,#ac0027 433px,#990022 434px,#990009 566px,#990004 605px,#6d0d10 606px,#232323 608px,#262121 611px,#391314 614px,#242222 617px,#232323 737px)"></div>
<div class="cs" style="top:512px;background:linear-gradient(90deg,#232323 0px,#232323 49px,#0d4a6d 50px,#006199 51px,#005299 175px,#0289ff 177px,#687cff 223px,#d56eff 263px,#ff68fe 277px,#ff4ac6 298px,#ff2f93 327px,#ff1766 367px,#ff023f 423px,#ff013d 428px,#f20039 429px,#9f0025 431px,#990023 433px,#99000a 559px,#990005 602px,#2a2121 605px,#232323 606px,#242222 608px,#391314 611px,#232323 615px,#232323 737px)"></div>
<div class="cs" style="top:513px;background:linear-gradient(90deg,#232323 0px,#232323 49px,#183648 50px,#006099 51px,#005199 175px,#0181f2 176px,#0387ff 177px,#667aff 222px,#d56cff 263px,#ff66fe 277px,#ff4ac9 297px,#ff3199 323px,#ff196c 361px,#ff0445 413px,#ff003e 426px,#990024 429px,#99000b 555px,#990005 599px,#83070b 600px,#4f1618 601px,#2a2121 602px,#232323 603px,#232323 605px,#391314 608px,#232323 612px,#232323 737px)"></div>
<div class="cs" style="top:514px;background:linear-gradient(90deg,#232323 0px,#232323 50px,#025c92 51px,#005f99 52px,#005199 174px,#005eb2 175px,#0186ff 176px,#6978ff 223px,#d56aff 263px,#ff64fe 277px,#ff49c9 297px,#ff2f98 324px,#ff1669 364px,#ff0141 421px,#ff0140 423px,#f9003e 424px,#a60029 426px,#990025 427px,#99000c 549px,#990006 596px,#83070b 597px,#571416 598px,#321f1f 599px,#232323 600px,#232323 602px,#381415 605px,#381415 606px,#232323 609px,#232323 737px)"></div>
<div class="cs" style="top:515px;background:linear-gradient(90deg,#232323 0px,#232323 50px,#0d486d 51px,#005f99 52px,#004f99 174px,#0070d9 175px,#0284ff 176px,#6777ff 222px,#d269ff 262px,#ff62fe 277px,#ff46c7 298px,#ff2b94 327px,#ff1365 369px,#ff0042 421px,#ec003c 422px,#bf0030 423px,#9f0028 424px,#990026 426px,#99000d 541px,#990006 593px,#8a040a 594px,#650f13 595px,#391c1e 596px,#232323 597px,#272020 600px,#381415 602px,#381415 603px,#232323 606px,#232323 737px)"></div>
<div class="cs" style="top:516px;background:linear-gradient(90deg,#232323 0px,#232323 50px,#183548 51px,#005e99 52px,#004e99 174px,#017ff9 175px,#0582ff 177px,#6575ff 221px,#d566ff 263px,#ff60fe 277px,#ff42c3 300px,#ff2993 328px,#ff1468 366px,#ff0043 419px,#b2002e 421px,#990027 422px,#99000e 537px,#990007 590px,#920208 591px,#6d0d11 592px,#391c1e 593px,#232323 594px,#262121 597px,#361516 599px,#391315 600px,#242222 603px,#232323 737px)"></div>
<div class="cs" style="top:517px;background:linear-gradient(90deg,#232323 0px,#232323 51px,#025992 52px,#005d99 53px,#004e99 173px,#0061bf 174px,#0281ff 175px,#6374ff 220px,#cf65ff 261px,#ff5efe 277px,#ff42c6 299px,#ff2995 327px,#ff1268 367px,#ff0145 416px,#f20041 417px,#cc0036 418px,#9f002a 419px,#990028 421px,#99000f 531px,#990007 587px,#920209 588px,#232323 591px,#262121 594px,#391315 597px,#242222 600px,#232323 737px)"></div>
<div class="cs" style="top:518px;background:linear-gradient(90deg,#232323 0px,#232323 51px,#0d476d 52px,#005c99 53px,#004d99 173px,#006fdf 174px,#027fff 175px,#6871ff 222px,#d862ff 264px,#ff5bfc 278px,#ff40c6 299px,#ff2895 327px,#ff1167 368px,#ff0047 414px,#e5003f 415px,#b90032 416px,#990029 417px,#99000f 532px,#990008 585px,#2a2121 588px,#232323 589px,#242222 591px,#391315 594px,#232323 598px,#232323 737px)"></div>
<div class="cs" style="top:519px;background:linear-gradient(90deg,#232323 0px,#232323 51px,#183548 52px,#005b99 53px,#004c99 172px,#004f9f 173px,#017eff 174px,#6670ff 221px,#d261ff 262px,#ff59fc 278px,#ff3fc6 299px,#ff2593 329px,#ff1069 367px,#ff0149 411px,#f90046 412px,#a6002e 414px,#99002a 415px,#990010 527px,#990008 582px,#83070d 583px,#4f1619 584px,#2a2121 585px,#232323 586px,#232323 588px,#391315 591px,#232323 595px,#232323 737px)"></div>
<div class="cs" style="top:520px;background:linear-gradient(90deg,#232323 0px,#232323 52px,#025792 53px,#005a99 54px,#004b99 172px,#0060c6 173px,#027cff 174px,#646eff 220px,#d25fff 262px,#ff57fc 278px,#ff3bc2 301px,#ff228e 333px,#ff0c61 376px,#ff014a 409px,#ec0044 410px,#bf0037 411px,#9f002d 412px,#99002b 414px,#990012 517px,#990009 579px,#83070e 580px,#571417 581px,#321f20 582px,#232323 583px,#232323 585px,#381416 588px,#381416 589px,#232323 592px,#232323 737px)"></div>
<div class="cs" style="top:521px;background:linear-gradient(90deg,#232323 0px,#232323 52px,#0d456d 53px,#005999 54px,#004a99 172px,#0171ec 173px,#037aff 174px,#626dff 219px,#d25dff 262px,#ff55fc 278px,#ff3bc5 300px,#ff2495 328px,#ff0f69 367px,#ff004c 407px,#b20034 409px,#99002c 410px,#990011 523px,#990009 576px,#8a040c 577px,#650f14 578px,#321f20 579px,#232323 580px,#272020 583px,#381416 585px,#381416 586px,#232323 589px,#232323 737px)"></div>
<div class="cs" style="top:522px;background:linear-gradient(90deg,#232323 0px,#232323 52px,#183448 53px,#005899 54px,#004999 171px,#0052ac 172px,#0179ff 173px,#656bff 220px,#cf5cff 261px,#ff53fc 278px,#ff38c3 301px,#ff2191 331px,#ff0c65 372px,#ff014e 404px,#f2004a 405px,#a60031 407px,#99002d 408px,#990012 518px,#99000a 573px,#92020b 574px,#391c1e 576px,#232323 577px,#272020 580px,#391315 583px,#232323 586px,#232323 737px)"></div>
<div class="cs" style="top:523px;background:linear-gradient(90deg,#232323 0px,#232323 53px,#025492 54px,#005799 55px,#004899 171px,#0063d2 172px,#0277ff 173px,#6369ff 219px,#cf5aff 261px,#ff52fd 278px,#ff3aca 298px,#ff239a 325px,#ff0e6c 365px,#ff0050 402px,#e50047 403px,#99002f 405px,#990015 502px,#99000a 570px,#92020c 571px,#232323 574px,#262121 577px,#391315 580px,#242222 583px,#232323 737px)"></div>
<div class="cs" style="top:524px;background:linear-gradient(90deg,#232323 0px,#232323 53px,#0d436d 54px,#005799 55px,#004799 171px,#0170f2 172px,#0376ff 173px,#6168ff 218px,#c759ff 258px,#ff50fd 278px,#ff36c6 300px,#ff2096 328px,#ff0c6a 368px,#ff0152 399px,#f9004f 400px,#d90045 401px,#a60034 402px,#990030 403px,#990016 498px,#99000b 568px,#4f161a 570px,#232323 571px,#242222 574px,#391316 577px,#232323 581px,#232323 737px)"></div>
<div class="cs" style="top:525px;background:linear-gradient(90deg,#232323 0px,#232323 53px,#183348 54px,#005699 55px,#004699 170px,#0055b9 171px,#0174ff 172px,#6665ff 220px,#d256ff 262px,#ff4efd 278px,#ff34c4 301px,#ff1d92 331px,#ff0864 375px,#ff0154 397px,#f2004f 398px,#bf003e 399px,#9f0033 400px,#990030 402px,#990015 505px,#99000b 565px,#7c0911 566px,#4f161a 567px,#2a2121 568px,#232323 569px,#242222 571px,#391316 574px,#2f1a1c 576px,#232323 578px,#232323 737px)"></div>
<div class="cs" style="top:526px;background:linear-gradient(90deg,#232323 0px,#232323 54px,#025292 55px,#005599 56px,#004599 170px,#0062d9 171px,#0273ff 172px,#6b63ff 222px,#d553ff 263px,#ff4cfd 278px,#ff33c4 301px,#ff1b90 333px,#ff0560 380px,#ff0055 395px,#b2003b 397px,#990032 398px,#990017 495px,#99000c 562px,#830710 563px,#571419 564px,#321f20 565px,#232323 566px,#232323 568px,#381417 571px,#2f1a1c 573px,#232323 575px,#232323 737px)"></div>
<div class="cs" style="top:527px;background:linear-gradient(90deg,#232323 0px,#232323 54px,#0d426d 55px,#005499 56px,#004499 169px,#00479f 170px,#016ff9 171px,#0571ff 173px,#6063ff 217px,#c754ff 258px,#ff4afd 278px,#ff31c5 301px,#ff1c96 329px,#ff096a 369px,#ff0158 392px,#f20053 393px,#a60038 395px,#990033 396px,#990018 491px,#99000c 559px,#8a040f 560px,#321f20 562px,#232323 563px,#272021 566px,#381417 568px,#381417 569px,#232323 572px,#232323 737px)"></div>
<div class="cs" style="top:528px;background:linear-gradient(90deg,#232323 0px,#232323 54px,#1c2c39 55px,#005399 56px,#004399 169px,#0054bf 170px,#0270ff 171px,#6561ff 219px,#d250ff 262px,#ff49fe 278px,#ff31c7 300px,#ff1b95 330px,#ff0768 372px,#ff015a 390px,#e50050 391px,#990035 393px,#99001a 482px,#99000d 556px,#8a0410 557px,#650f16 558px,#391c1f 559px,#232323 560px,#272021 563px,#391316 566px,#232323 569px,#232323 737px)"></div>
<div class="cs" style="top:529px;background:linear-gradient(90deg,#232323 0px,#232323 55px,#044c8a 56px,#005299 57px,#004299 169px,#0161df 170px,#026eff 171px,#6a5eff 221px,#d24eff 262px,#ff47fe 278px,#ff2ec5 301px,#ff1994 331px,#ff0566 374px,#ff015c 387px,#f90059 388px,#d9004d 389px,#a6003b 390px,#990036 391px,#99001b 478px,#99000e 553px,#92020f 554px,#232323 557px,#262121 560px,#361518 562px,#391316 563px,#242222 566px,#232323 737px)"></div>
<div class="cs" style="top:530px;background:linear-gradient(90deg,#232323 0px,#232323 55px,#0f3d65 56px,#005199 57px,#004299 168px,#0047a6 169px,#016dff 170px,#685dff 220px,#d54cff 263px,#ff45fe 278px,#ff2ec8 300px,#ff1a98 328px,#ff0568 372px,#ff015e 385px,#f20059 386px,#9f0039 388px,#990036 390px,#99001a 484px,#99000e 551px,#740b14 552px,#48181c 553px,#232323 554px,#242222 557px,#391316 560px,#232323 564px,#232323 737px)"></div>
<div class="cs" style="top:531px;background:linear-gradient(90deg,#232323 0px,#232323 55px,#1c2c39 56px,#005199 57px,#004199 168px,#0053c6 169px,#026bff 170px,#665cff 219px,#d24bff 262px,#ff43fe 278px,#ff2cc6 301px,#ff1796 330px,#ff0366 375px,#ff0060 383px,#df0053 384px,#b20042 385px,#990038 386px,#99001b 479px,#99000f 548px,#2a2122 551px,#232323 552px,#242222 554px,#391317 557px,#2e1b1d 559px,#232323 561px,#232323 737px)"></div>
<div class="cs" style="top:532px;background:linear-gradient(90deg,#232323 0px,#232323 56px,#044a8a 57px,#005099 58px,#004099 168px,#0165f2 169px,#026aff 170px,#6b59ff 221px,#dd47ff 266px,#ff42fe 278px,#ff29c4 302px,#ff1491 334px,#ff0163 379px,#f9005f 381px,#cc004e 382px,#a6003f 383px,#990039 384px,#99001c 476px,#99000f 545px,#830713 546px,#57141a 547px,#321f20 548px,#232323 549px,#232323 551px,#391317 554px,#232323 558px,#232323 737px)"></div>
<div class="cs" style="top:533px;background:linear-gradient(90deg,#232323 0px,#232323 56px,#143657 57px,#004f99 58px,#003f99 167px,#0047ac 168px,#0169ff 169px,#6958ff 220px,#da46ff 265px,#ff3ffc 279px,#ff2ac9 300px,#ff1699 328px,#ff036a 371px,#ff0165 378px,#e5005a 379px,#99003b 381px,#99001e 467px,#990010 542px,#8a0412 543px,#321f21 545px,#232323 546px,#232323 548px,#381418 551px,#381418 552px,#232323 555px,#232323 737px)"></div>
<div class="cs" style="top:534px;background:linear-gradient(90deg,#232323 0px,#232323 56px,#1f2832 57px,#004e99 58px,#003e99 167px,#0055d2 168px,#0267ff 169px,#6557ff 218px,#d246ff 262px,#ff3dfc 279px,#ff27c7 301px,#ff1497 330px,#ff0167 375px,#f90064 376px,#d90057 377px,#ac0044 378px,#99003c 379px,#99001e 469px,#990011 539px,#8a0413 540px,#650f18 541px,#391c1f 542px,#232323 543px,#272021 546px,#391317 549px,#232323 552px,#232323 737px)"></div>
<div class="cs" style="top:535px;background:linear-gradient(90deg,#232323 0px,#232323 57px,#074583 58px,#004d99 59px,#003d99 167px,#0163f9 168px,#0465ff 170px,#6c54ff 221px,#dd42ff 266px,#ff3bfc 279px,#ff25c3 303px,#ff1091 335px,#ff0169 373px,#f20063 374px,#9f0040 376px,#99003d 378px,#990020 462px,#990011 536px,#920212 537px,#6d0d18 538px,#401a1e 539px,#232323 540px,#262122 543px,#361519 545px,#391317 546px,#242222 549px,#232323 737px)"></div>
<div class="cs" style="top:536px;background:linear-gradient(90deg,#232323 0px,#232323 57px,#16334f 58px,#004c99 59px,#003d99 166px,#0049b9 167px,#0164ff 168px,#6854ff 219px,#d242ff 262px,#ff3afc 279px,#ff23c4 303px,#ff1094 333px,#ff006c 371px,#df005d 372px,#b2004a 373px,#99003f 374px,#990022 454px,#990012 534px,#6d0d18 535px,#232323 537px,#262122 540px,#391317 543px,#242222 546px,#232323 737px)"></div>
<div class="cs" style="top:537px;background:linear-gradient(90deg,#232323 0px,#232323 57px,#21262a 58px,#004c99 59px,#003c99 166px,#0054d9 167px,#0263ff 168px,#6f51ff 222px,#dd3fff 266px,#ff38fc 279px,#ff22c4 303px,#ff0f94 333px,#ff016f 368px,#f9006b 369px,#a60046 371px,#990040 372px,#990022 455px,#990012 531px,#2a2122 534px,#232323 535px,#242222 537px,#391317 540px,#2d1c1e 542px,#232323 544px,#232323 737px)"></div>
<div class="cs" style="top:538px;background:linear-gradient(90deg,#232323 0px,#232323 58px,#0b3e74 59px,#004b99 60px,#003b99 165px,#003d9f 166px,#0162ff 167px,#6251ff 216px,#d23fff 262px,#ff36fd 279px,#ff22c8 301px,#ff0f97 331px,#ff0171 366px,#ec0067 367px,#bf0053 368px,#990042 369px,#990025 445px,#990013 528px,#830716 529px,#2a2122 531px,#232323 532px,#232323 534px,#391318 537px,#232323 541px,#232323 737px)"></div>
<div class="cs" style="top:539px;background:linear-gradient(90deg,#232323 0px,#232323 58px,#182f48 59px,#004a99 60px,#003a99 165px,#0048bf 166px,#0260ff 167px,#724dff 223px,#e53aff 269px,#ff35fd 279px,#ff1fc4 303px,#ff0c91 336px,#ff0073 364px,#d90061 365px,#ac004c 366px,#990043 367px,#990024 448px,#990014 525px,#8a0415 526px,#57141c 527px,#321f21 528px,#232323 529px,#232323 531px,#381418 534px,#381418 535px,#232323 538px,#232323 737px)"></div>
<div class="cs" style="top:540px;background:linear-gradient(90deg,#232323 0px,#232323 59px,#024792 60px,#004999 61px,#003999 165px,#0158ec 166px,#025fff 167px,#654eff 217px,#d23bff 262px,#ff33fd 279px,#ff1ec5 303px,#ff0c95 333px,#ff0176 361px,#f2006f 362px,#9f0048 364px,#990044 366px,#990025 445px,#990014 522px,#8a0416 523px,#650f1b 524px,#391c20 525px,#232323 526px,#272021 529px,#391318 532px,#232323 535px,#232323 737px)"></div>
<div class="cs" style="top:541px;background:linear-gradient(90deg,#232323 0px,#232323 59px,#0d3a6d 60px,#004899 61px,#003999 164px,#003da6 165px,#015eff 166px,#6f4bff 221px,#d23aff 262px,#ff31fd 279px,#ff1dc5 303px,#ff0a93 335px,#ff0178 359px,#990046 362px,#990027 440px,#990015 519px,#920216 520px,#6d0d1a 521px,#401a1f 522px,#232323 523px,#262122 526px,#361519 528px,#391318 529px,#242222 532px,#232323 737px)"></div>
<div class="cs" style="top:542px;background:linear-gradient(90deg,#232323 0px,#232323 59px,#1c2a39 60px,#004899 61px,#003899 164px,#025cff 166px,#604cff 214px,#c23bff 256px,#ff30fd 279px,#ff1bc3 304px,#ff078d 340px,#ff017c 356px,#f90078 357px,#a6004e 359px,#990048 360px,#990029 433px,#990016 516px,#920216 517px,#232323 520px,#262122 523px,#391318 526px,#242222 529px,#232323 737px)"></div>
<div class="cs" style="top:543px;background:linear-gradient(90deg,#232323 0px,#232323 60px,#04428a 61px,#004799 62px,#003799 164px,#0157f2 165px,#025bff 166px,#7147ff 222px,#df34ff 267px,#ff2efe 279px,#ff1ccc 300px,#ff0c9d 328px,#ff017e 354px,#ec0074 355px,#bf005d 356px,#99004a 357px,#99002c 425px,#990016 514px,#2a2122 517px,#232323 518px,#242222 520px,#391318 523px,#232323 527px,#232323 737px)"></div>
<div class="cs" style="top:544px;background:linear-gradient(90deg,#232323 0px,#232323 60px,#143257 61px,#004699 62px,#003699 163px,#003dac 164px,#015aff 165px,#6748ff 217px,#cf35ff 261px,#ff2dfe 279px,#ff19c6 303px,#ff0794 335px,#ff0080 352px,#b20058 354px,#99004b 355px,#99002b 428px,#990017 511px,#830719 512px,#4f161e 513px,#2a2122 514px,#232323 515px,#232323 517px,#391319 520px,#232323 524px,#232323 737px)"></div>
<div class="cs" style="top:545px;background:linear-gradient(90deg,#232323 0px,#232323 60px,#1f2732 61px,#004599 62px,#003599 163px,#004bd9 164px,#0258ff 165px,#6946ff 218px,#d733ff 264px,#ff2bfe 279px,#ff18c6 303px,#ff0693 336px,#ff0184 349px,#f2007c 350px,#cc0068 351px,#9f0051 352px,#99004c 354px,#99002d 423px,#990018 508px,#83071a 509px,#57141e 510px,#321f22 511px,#232323 512px,#232323 514px,#381419 517px,#381419 518px,#232323 521px,#232323 737px)"></div>
<div class="cs" style="top:546px;background:linear-gradient(90deg,#232323 0px,#232323 61px,#0b3a74 62px,#004499 63px,#003599 163px,#0155f9 164px,#0457ff 166px,#6a44ff 218px,#d232ff 262px,#ff29fe 279px,#ff17c8 302px,#ff0595 335px,#ff0187 347px,#e50078 348px,#b90060 349px,#99004f 350px,#99002f 417px,#990018 505px,#8a041a 506px,#650f1d 507px,#391c21 508px,#232323 509px,#272021 512px,#38141a 514px,#381419 515px,#232323 518px,#232323 737px)"></div>
<div class="cs" style="top:547px;background:linear-gradient(90deg,#232323 0px,#232323 61px,#182d48 62px,#004499 63px,#003499 162px,#003eb9 163px,#0156ff 164px,#6e42ff 220px,#dc2eff 266px,#ff28fe 279px,#ff15c7 303px,#ff0495 335px,#ff018a 344px,#f90086 345px,#a60058 347px,#990050 348px,#99002f 418px,#990019 502px,#92021a 503px,#6d0d1d 504px,#391c21 505px,#232323 506px,#262122 509px,#36151a 511px,#391319 512px,#242222 515px,#232323 737px)"></div>
<div class="cs" style="top:548px;background:linear-gradient(90deg,#232323 0px,#232323 62px,#024192 63px,#004399 64px,#003399 162px,#004adf 163px,#0254ff 164px,#6a42ff 218px,#d22fff 262px,#ff25fc 280px,#ff14c7 303px,#ff0394 336px,#ff018d 342px,#ec0081 343px,#bf0068 344px,#9f0056 345px,#990051 347px,#990030 416px,#99001a 499px,#92021a 500px,#232323 503px,#262122 506px,#391319 509px,#242222 512px,#232323 737px)"></div>
<div class="cs" style="top:549px;background:linear-gradient(90deg,#232323 0px,#232323 62px,#0f3465 63px,#004299 64px,#003299 161px,#00349f 162px,#0153ff 163px,#6441ff 215px,#d22dff 262px,#ff24fc 280px,#ff13c7 303px,#ff0191 339px,#ff0190 340px,#b20063 342px,#990054 343px,#990032 411px,#99001b 497px,#4f1620 499px,#232323 500px,#242222 503px,#391319 506px,#232323 510px,#232323 737px)"></div>
<div class="cs" style="top:550px;background:linear-gradient(90deg,#232323 0px,#232323 62px,#1f2732 63px,#004199 64px,#003299 161px,#0040c6 162px,#0252ff 163px,#5e41ff 212px,#ca2dff 259px,#ff23ff 279px,#ff13cc 301px,#ff039b 331px,#ff0194 337px,#f2008b 338px,#cc0074 339px,#9f005a 340px,#990055 342px,#990035 403px,#99001b 494px,#7c091d 495px,#4f1620 496px,#2a2122 497px,#232323 498px,#232323 500px,#39131a 503px,#2f1a1e 505px,#232323 507px,#232323 737px)"></div>
<div class="cs" style="top:551px;background:linear-gradient(90deg,#232323 0px,#232323 63px,#09397b 64px,#004099 65px,#003199 161px,#014bec 162px,#0251ff 163px,#6b3dff 218px,#d729ff 264px,#ff21fc 280px,#ff0fc2 306px,#ff0196 335px,#e50086 336px,#990058 338px,#990036 401px,#99001c 491px,#83071d 492px,#571420 493px,#321f22 494px,#232323 495px,#232323 497px,#38141a 500px,#38141a 501px,#232323 504px,#232323 737px)"></div>
<div class="cs" style="top:552px;background:linear-gradient(90deg,#232323 0px,#232323 63px,#162e4f 64px,#004099 65px,#003099 160px,#0034a6 161px,#0150ff 162px,#653dff 215px,#d728ff 264px,#ff1ffc 280px,#ff0ec5 305px,#ff019b 332px,#f90096 333px,#d90081 334px,#a60062 335px,#99005a 336px,#99003a 392px,#99001e 484px,#99001d 488px,#8a041d 489px,#650f1f 490px,#321f22 491px,#232323 492px,#272021 495px,#38141b 497px,#38141a 498px,#232323 501px,#232323 737px)"></div>
<div class="cs" style="top:553px;background:linear-gradient(90deg,#232323 0px,#232323 64px,#023d92 65px,#003f99 66px,#002f99 160px,#0041d2 161px,#024eff 162px,#603dff 212px,#c52aff 257px,#ff1efd 280px,#ff0fca 302px,#ff019e 330px,#f20094 331px,#bf0074 332px,#9f0060 333px,#99005b 335px,#99003a 392px,#99001e 485px,#92021e 486px,#391c22 488px,#232323 489px,#272021 492px,#39131a 495px,#232323 498px,#232323 737px)"></div>
<div class="cs" style="top:554px;background:linear-gradient(90deg,#232323 0px,#232323 64px,#0f3265 65px,#003e99 66px,#002f99 160px,#0149f2 161px,#024dff 162px,#6c39ff 218px,#dc24ff 266px,#ff1dfd 280px,#ff0cc7 304px,#ff01a1 328px,#b2006f 330px,#99005e 331px,#99003b 390px,#99001f 482px,#92021f 483px,#232323 486px,#262122 489px,#39131a 492px,#242222 495px,#232323 737px)"></div>
<div class="cs" style="top:555px;background:linear-gradient(90deg,#232323 0px,#232323 64px,#1f2632 65px,#003d99 66px,#002e99 159px,#0035b2 160px,#014cff 161px,#6439ff 214px,#d424ff 263px,#ff1bfd 280px,#ff0ac5 305px,#ff01a5 325px,#f2009c 326px,#a60069 328px,#990060 329px,#99003e 384px,#990020 477px,#99001f 480px,#4f1621 482px,#232323 483px,#242222 486px,#39131a 489px,#232323 493px,#232323 737px)"></div>
<div class="cs" style="top:556px;background:linear-gradient(90deg,#232323 0px,#232323 65px,#09367b 66px,#003c99 67px,#002d99 159px,#0040d9 160px,#024bff 161px,#6338ff 213px,#ca24ff 259px,#ff1afd 280px,#ff09c6 305px,#ff01a8 323px,#e50096 324px,#990062 326px,#99003d 386px,#990020 477px,#2a2123 480px,#232323 481px,#242222 483px,#39131b 486px,#2e1b1f 488px,#232323 490px,#232323 737px)"></div>
<div class="cs" style="top:557px;background:linear-gradient(90deg,#232323 0px,#232323 65px,#182b48 66px,#003c99 67px,#002d99 158px,#002e9f 159px,#0148f9 160px,#0449ff 162px,#6d35ff 218px,#d720ff 264px,#ff18fd 280px,#ff07c2 307px,#ff01ad 320px,#f901a7 321px,#d90091 322px,#a6006e 323px,#990064 324px,#99003f 382px,#990021 474px,#830721 475px,#571422 476px,#321f23 477px,#232323 478px,#232323 480px,#38141b 483px,#2f1a1e 485px,#232323 487px,#232323 737px)"></div>
<div class="cs" style="top:558px;background:linear-gradient(90deg,#232323 0px,#232323 66px,#04388a 67px,#003b99 68px,#002c99 158px,#0036bf 159px,#0148ff 160px,#6635ff 214px,#c822ff 258px,#ff17fd 280px,#ff06c4 306px,#ff01b0 318px,#f200a6 319px,#bf0082 320px,#9f006b 321px,#990065 323px,#990041 379px,#990024 463px,#990022 471px,#8a0422 472px,#321f23 474px,#232323 475px,#232323 477px,#38141c 480px,#38141c 481px,#232323 484px,#232323 737px)"></div>
<div class="cs" style="top:559px;background:linear-gradient(90deg,#232323 0px,#232323 66px,#142d57 67px,#003a99 68px,#002b99 158px,#003edf 159px,#0247ff 160px,#6634ff 214px,#d41eff 263px,#ff15fe 280px,#ff06c8 304px,#ff01b4 316px,#df009c 317px,#b2007c 318px,#990069 319px,#990045 371px,#990026 455px,#990023 468px,#8a0423 469px,#650f23 470px,#391c23 471px,#232323 472px,#272022 475px,#39131b 478px,#232323 481px,#232323 737px)"></div>
<div class="cs" style="top:560px;background:linear-gradient(90deg,#232323 0px,#232323 66px,#21242a 67px,#023892 68px,#003999 69px,#002a99 157px,#002ea6 158px,#0146ff 159px,#6832ff 215px,#d41dff 263px,#ff14fe 280px,#ff06cb 303px,#ff01b9 313px,#f900b3 314px,#cc0091 315px,#a60075 316px,#99006b 317px,#990047 368px,#990028 449px,#990024 465px,#920223 466px,#232323 469px,#262122 472px,#36151c 474px,#39131b 475px,#242223 478px,#232323 737px)"></div>
<div class="cs" style="top:561px;background:linear-gradient(90deg,#232323 0px,#232323 67px,#0d316d 68px,#003999 69px,#002a99 157px,#0036c6 158px,#0245ff 159px,#5d33ff 209px,#bc20ff 253px,#ff12fe 280px,#ff04c7 305px,#ff01bd 311px,#e500a8 312px,#99006e 314px,#990048 366px,#990029 446px,#990024 463px,#740b24 464px,#481823 465px,#232323 466px,#242223 469px,#39131c 472px,#232323 476px,#232323 737px)"></div>
<div class="cs" style="top:562px;background:linear-gradient(90deg,#232323 0px,#232323 67px,#1f2632 68px,#003899 69px,#002999 157px,#013fec 158px,#0244ff 159px,#6730ff 214px,#cd1bff 260px,#ff11fe 280px,#ff02c7 305px,#ff01c2 308px,#f901bb 309px,#d900a2 310px,#ac0080 311px,#990070 312px,#99004a 363px,#99002b 440px,#990025 460px,#2a2123 463px,#232323 464px,#242223 466px,#39131c 469px,#2e1b1f 471px,#232323 473px,#232323 737px)"></div>
<div class="cs" style="top:563px;background:linear-gradient(90deg,#232323 0px,#232323 68px,#09327b 69px,#003799 70px,#002899 156px,#002dac 157px,#0143ff 158px,#6b2dff 216px,#d917ff 265px,#ff10fe 280px,#ff02c9 304px,#ff01c6 306px,#f200ba 307px,#9f0078 309px,#990072 311px,#99004f 355px,#99002f 427px,#990026 457px,#830725 458px,#571424 459px,#321f23 460px,#232323 461px,#232323 463px,#39131c 466px,#232323 470px,#232323 737px)"></div>
<div class="cs" style="top:564px;background:linear-gradient(90deg,#232323 0px,#232323 68px,#182948 69px,#003699 70px,#002899 156px,#0036d2 157px,#0241ff 158px,#602eff 210px,#c11bff 255px,#ff0efc 281px,#ff01ca 304px,#df00af 305px,#b2008b 306px,#990076 307px,#990051 352px,#990031 422px,#990027 454px,#8a0426 455px,#571425 456px,#321f23 457px,#232323 458px,#232323 460px,#38141d 463px,#38141d 464px,#232323 467px,#232323 737px)"></div>
<div class="cs" style="top:565px;background:linear-gradient(90deg,#232323 0px,#232323 69px,#04338a 70px,#003699 71px,#002799 156px,#013df2 157px,#0240ff 158px,#6c2bff 216px,#d416ff 263px,#ff0cfc 281px,#ff01d0 301px,#f901c9 302px,#cc00a3 303px,#a60083 304px,#990078 305px,#990053 349px,#990031 422px,#990028 451px,#8a0427 452px,#650f26 453px,#391c24 454px,#232323 455px,#272022 458px,#39131d 461px,#232323 464px,#232323 737px)"></div>
<div class="cs" style="top:566px;background:linear-gradient(90deg,#232323 0px,#232323 69px,#162a4f 70px,#003599 71px,#002699 155px,#002eb9 156px,#013fff 157px,#6a2aff 215px,#d414ff 263px,#ff0bfc 281px,#ff01d4 299px,#ec00c2 300px,#bf009c 301px,#99007c 302px,#990057 343px,#990034 414px,#990029 448px,#920229 449px,#6d0d27 450px,#401a24 451px,#232323 452px,#262122 455px,#36151e 457px,#39131d 458px,#242223 461px,#232323 737px)"></div>
<div class="cs" style="top:567px;background:linear-gradient(90deg,#232323 0px,#232323 69px,#21242a 70px,#023392 71px,#003499 72px,#002699 155px,#0035d9 156px,#023eff 157px,#652aff 212px,#c815ff 258px,#ff0afc 281px,#ff01d8 297px,#d900b6 298px,#ac008f 299px,#99007e 300px,#990058 342px,#990035 411px,#99002a 446px,#6d0d27 447px,#232323 449px,#262122 452px,#39131d 455px,#242223 458px,#232323 737px)"></div>
<div class="cs" style="top:568px;background:linear-gradient(90deg,#232323 0px,#232323 70px,#003399 72px,#002599 154px,#00269f 155px,#013dff 156px,#6528ff 212px,#cd13ff 260px,#ff08fc 281px,#ff01de 294px,#f200d1 295px,#9f0087 297px,#99007f 299px,#990056 345px,#990033 418px,#99002b 443px,#2a2123 446px,#232323 447px,#242223 449px,#39131d 452px,#2d1c20 454px,#232323 456px,#232323 737px)"></div>
<div class="cs" style="top:569px;background:linear-gradient(90deg,#232323 0px,#232323 70px,#1f2532 71px,#003399 72px,#002499 154px,#002dbf 155px,#013cff 156px,#6d26ff 216px,#d90fff 265px,#ff07fd 281px,#ff01e3 292px,#990084 295px,#990059 341px,#990035 413px,#99002c 440px,#83072a 441px,#2a2124 443px,#232323 444px,#232323 446px,#39131e 449px,#232323 453px,#232323 737px)"></div>
<div class="cs" style="top:570px;background:linear-gradient(90deg,#232323 0px,#232323 71px,#0d2c6d 72px,#003299 73px,#002499 154px,#0035e6 155px,#023bff 156px,#6227ff 210px,#c811ff 258px,#ff06fd 281px,#ff01ea 289px,#f901e2 290px,#a60094 292px,#990087 293px,#99005c 337px,#990039 403px,#99002d 437px,#8a042c 438px,#571427 439px,#321f24 440px,#232323 441px,#232323 443px,#38141e 446px,#38141e 447px,#232323 450px,#232323 737px)"></div>
<div class="cs" style="top:571px;background:linear-gradient(90deg,#232323 0px,#232323 71px,#1f2532 72px,#003199 73px,#002399 153px,#0026a6 154px,#013aff 155px,#6625ff 212px,#cd0fff 260px,#ff04fd 281px,#ff01ee 287px,#ec00da 288px,#bf00af 289px,#99008b 290px,#990060 332px,#99003c 396px,#99002e 434px,#8a042d 435px,#650f29 436px,#391c25 437px,#232323 438px,#272022 441px,#36151f 443px,#38141e 444px,#232323 447px,#232323 737px)"></div>
<div class="cs" style="top:572px;background:linear-gradient(90deg,#232323 0px,#232323 72px,#092d7b 73px,#003099 74px,#002299 153px,#002cc6 154px,#0239ff 155px,#6623ff 212px,#d40cff 263px,#ff03fd 281px,#ff01f3 285px,#d900cd 286px,#ac00a1 287px,#99008e 288px,#990065 326px,#990042 383px,#99002f 431px,#92022e 432px,#6d0d2a 433px,#391c25 434px,#232323 435px,#262122 438px,#36151f 440px,#39131e 441px,#242223 444px,#232323 737px)"></div>
<div class="cs" style="top:573px;background:linear-gradient(90deg,#232323 0px,#232323 72px,#1a2640 73px,#003099 74px,#002299 153px,#0135f2 154px,#0237ff 155px,#6523ff 211px,#c60eff 257px,#ff02fd 281px,#ff01fb 282px,#f201ec 283px,#cc00c5 284px,#9f0098 285px,#99008f 287px,#990066 325px,#990042 383px,#990031 428px,#92022f 429px,#232323 432px,#262122 435px,#39131e 438px,#242223 441px,#232323 737px)"></div>
<div class="cs" style="top:574px;background:linear-gradient(90deg,#232323 0px,#232323 73px,#092c7b 74px,#002f99 75px,#002199 152px,#0025ac 153px,#0137ff 154px,#6721ff 212px,#cd0bff 260px,#fe01ff 280px,#e500e4 281px,#b900b6 282px,#990095 283px,#99006b 320px,#990046 375px,#990031 426px,#2a2124 429px,#232323 430px,#242223 432px,#39131f 435px,#232323 439px,#232323 737px)"></div>
<div class="cs" style="top:575px;background:linear-gradient(90deg,#232323 0px,#232323 73px,#16274f 74px,#002e99 75px,#002099 152px,#002ed9 153px,#0235ff 154px,#6021ff 208px,#c60bff 257px,#f601ff 277px,#f301f9 278px,#a500a6 280px,#990098 281px,#99006e 317px,#99004b 366px,#990033 423px,#83072f 424px,#4f1629 425px,#2a2124 426px,#232323 427px,#232323 429px,#39131f 432px,#232323 436px,#232323 737px)"></div>
<div class="cs" style="top:576px;background:linear-gradient(90deg,#232323 0px,#232323 74px,#042c8a 75px,#002d99 76px,#002099 152px,#0133f9 153px,#0434ff 155px,#661fff 211px,#cd09ff 260px,#f101ff 275px,#e100ec 276px,#b900bf 277px,#9b009f 278px,#980099 280px,#99006b 320px,#990047 374px,#990034 420px,#830730 421px,#57142a 422px,#321f25 423px,#232323 424px,#232323 426px,#381420 429px,#38141f 430px,#232323 433px,#232323 737px)"></div>
<div class="cs" style="top:577px;background:linear-gradient(90deg,#232323 0px,#232323 74px,#16274f 75px,#002d99 76px,#001f99 151px,#0026b9 152px,#0133ff 153px,#6a1dff 213px,#d406ff 263px,#ec01ff 273px,#a900b2 275px,#920099 276px,#990094 284px,#99006b 320px,#990045 378px,#990035 417px,#8a0433 418px,#650f2d 419px,#391c26 420px,#232323 421px,#272022 424px,#381420 426px,#381420 427px,#232323 430px,#232323 737px)"></div>
<div class="cs" style="top:578px;background:linear-gradient(90deg,#232323 0px,#232323 75px,#042b8a 76px,#002c99 77px,#001f99 151px,#002cdf 152px,#0232ff 153px,#611eff 208px,#c608ff 257px,#e501ff 270px,#dc01f2 271px,#bb00cc 272px,#94009f 273px,#8f0099 274px,#990094 284px,#99006c 320px,#99004a 369px,#990036 414px,#920235 415px,#391c26 417px,#232323 418px,#262123 421px,#361520 423px,#391320 424px,#232323 427px,#232323 737px)"></div>
<div class="cs" style="top:579px;background:linear-gradient(90deg,#232323 0px,#232323 75px,#142757 76px,#002b99 77px,#001e99 150px,#001f9f 151px,#0131ff 152px,#611dff 208px,#c606ff 257px,#e001ff 268px,#cc00e5 269px,#a600b9 270px,#8b0099 271px,#990096 283px,#99006e 317px,#990047 375px,#990038 411px,#920236 412px,#232323 415px,#262123 418px,#391320 421px,#242223 424px,#232323 737px)"></div>
<div class="cs" style="top:580px;background:linear-gradient(90deg,#232323 0px,#232323 75px,#21242a 76px,#022a92 77px,#002b99 78px,#001d99 150px,#0024bf 151px,#0130ff 152px,#691aff 212px,#d402ff 263px,#d901ff 265px,#d601f9 266px,#bc00d9 267px,#9200a6 268px,#880099 269px,#990096 283px,#99006e 318px,#99004c 366px,#990039 409px,#4f162b 411px,#232323 412px,#242223 415px,#391320 418px,#232323 422px,#232323 737px)"></div>
<div class="cs" style="top:581px;background:linear-gradient(90deg,#232323 0px,#232323 76px,#002a99 78px,#001d99 150px,#002cec 151px,#022fff 152px,#621aff 208px,#cd02ff 260px,#d401ff 263px,#cc00f2 264px,#a300bf 265px,#89009f 266px,#860099 268px,#990096 283px,#99006c 320px,#990048 374px,#99003a 406px,#7c0934 407px,#4f162b 408px,#2a2124 409px,#232323 410px,#242223 412px,#391321 415px,#2f1a22 417px,#232323 419px,#232323 737px)"></div>
<div class="cs" style="top:582px;background:linear-gradient(90deg,#232323 0px,#232323 76px,#21232a 77px,#022992 78px,#002999 79px,#001c99 149px,#001ea6 150px,#012eff 151px,#6419ff 209px,#cd01ff 260px,#d001ff 261px,#9500b2 263px,#810099 264px,#990096 283px,#99006b 321px,#990046 378px,#99003b 403px,#830736 404px,#57142d 405px,#321f26 406px,#232323 407px,#232323 409px,#381421 412px,#381421 413px,#232323 416px,#232323 737px)"></div>
<div class="cs" style="top:583px;background:linear-gradient(90deg,#232323 0px,#232323 77px,#002899 79px,#001c99 149px,#022dff 151px,#5d19ff 205px,#c402ff 256px,#c901ff 258px,#c101f2 259px,#8700a6 261px,#7e0099 262px,#990096 283px,#99006c 320px,#990046 378px,#99003d 400px,#8a0439 401px,#650f31 402px,#321f26 403px,#232323 404px,#272023 407px,#381421 409px,#381421 410px,#232323 413px,#232323 737px)"></div>
<div class="cs" style="top:584px;background:linear-gradient(90deg,#232323 0px,#232323 77px,#1f2432 78px,#002899 79px,#001b99 149px,#012af2 150px,#022cff 151px,#6a15ff 212px,#c401ff 256px,#b300e5 257px,#7a0099 259px,#990096 283px,#99006d 319px,#990049 373px,#99003e 397px,#92023c 398px,#391c28 400px,#232323 401px,#272023 404px,#391322 407px,#232323 410px,#232323 737px)"></div>
<div class="cs" style="top:585px;background:linear-gradient(90deg,#232323 0px,#232323 78px,#0d266d 79px,#002799 80px,#001a99 148px,#001fb2 149px,#012bff 150px,#6515ff 209px,#be01ff 253px,#bb01f9 254px,#a500d9 255px,#8000a6 256px,#770099 257px,#990096 283px,#99006c 321px,#990048 375px,#99003f 394px,#92023d 395px,#232323 398px,#262123 401px,#391322 404px,#242223 407px,#232323 737px)"></div>
<div class="cs" style="top:586px;background:linear-gradient(90deg,#232323 0px,#232323 78px,#1f2332 79px,#002699 80px,#001a99 148px,#0024d9 149px,#022aff 150px,#5e16ff 205px,#ba01ff 251px,#b200f2 252px,#8e00bf 253px,#78009f 254px,#760099 256px,#990096 283px,#99006a 323px,#990046 380px,#990041 392px,#740b37 393px,#48182c 394px,#232323 395px,#242223 398px,#391322 401px,#232323 405px,#232323 737px)"></div>
<div class="cs" style="top:587px;background:linear-gradient(90deg,#232323 0px,#232323 79px,#0d256d 80px,#002699 81px,#001999 148px,#0129f9 149px,#0429ff 151px,#6912ff 211px,#b501ff 249px,#8200b2 251px,#710099 252px,#990096 283px,#99006b 322px,#990047 378px,#990042 389px,#2a2125 392px,#232323 393px,#242223 395px,#391323 398px,#2e1b23 400px,#232323 402px,#232323 737px)"></div>
<div class="cs" style="top:588px;background:linear-gradient(90deg,#232323 0px,#232323 79px,#1f2332 80px,#002599 81px,#001999 147px,#001fbf 148px,#0128ff 149px,#6612ff 209px,#af01ff 246px,#ad01f9 247px,#8f00cc 248px,#7600a6 249px,#6e0099 250px,#990096 283px,#990069 325px,#990044 384px,#990044 386px,#83073d 387px,#571431 388px,#321f27 389px,#232323 390px,#232323 392px,#391323 395px,#232323 399px,#232323 737px)"></div>
<div class="cs" style="top:589px;background:linear-gradient(90deg,#232323 0px,#232323 80px,#09247b 81px,#002499 82px,#001899 147px,#0023df 148px,#0227ff 149px,#5f12ff 205px,#ab01ff 244px,#9c00e5 245px,#6a0099 247px,#990097 283px,#99006d 320px,#990049 375px,#990045 383px,#8a0440 384px,#321f27 386px,#232323 387px,#232323 389px,#381423 392px,#381423 393px,#232323 396px,#232323 737px)"></div>
<div class="cs" style="top:590px;background:linear-gradient(90deg,#232323 0px,#232323 80px,#1a2340 81px,#002499 82px,#001899 146px,#00189f 147px,#0127ff 148px,#6310ff 207px,#a501ff 241px,#a301f9 242px,#9000d9 243px,#7300ac 244px,#680099 245px,#990097 283px,#99006e 319px,#990048 377px,#990047 380px,#8a0442 381px,#650f37 382px,#391c29 383px,#232323 384px,#272023 387px,#391324 390px,#232323 393px,#232323 737px)"></div>
<div class="cs" style="top:591px;background:linear-gradient(90deg,#232323 0px,#232323 81px,#09237b 82px,#002399 83px,#001799 146px,#001dc6 147px,#0126ff 148px,#670eff 209px,#a101ff 239px,#9b00f2 240px,#68009f 242px,#670099 244px,#990097 283px,#990070 317px,#99004a 373px,#990048 377px,#920246 378px,#232323 381px,#262123 384px,#361524 386px,#391324 387px,#242223 390px,#232323 737px)"></div>
<div class="cs" style="top:592px;background:linear-gradient(90deg,#232323 0px,#232323 81px,#1a2340 82px,#002299 83px,#001699 146px,#0022ec 147px,#0225ff 148px,#650eff 208px,#9d01ff 237px,#8b00df 238px,#7100b2 239px,#620099 240px,#990097 283px,#99006f 319px,#99004b 372px,#99004a 375px,#740b3d 376px,#48182f 377px,#232323 378px,#242223 381px,#391324 384px,#232323 388px,#232323 737px)"></div>
<div class="cs" style="top:593px;background:linear-gradient(90deg,#232323 0px,#232323 82px,#09227b 83px,#002199 84px,#001699 145px,#0017a6 146px,#0124ff 147px,#640dff 207px,#9701ff 234px,#9501f9 235px,#7c00cc 236px,#6600a6 237px,#5f0099 238px,#990097 283px,#99006c 322px,#99004b 372px,#2a2125 375px,#232323 376px,#242223 378px,#391325 381px,#2d1c24 383px,#232323 385px,#232323 737px)"></div>
<div class="cs" style="top:594px;background:linear-gradient(90deg,#232323 0px,#232323 82px,#1a2340 83px,#002199 84px,#001599 145px,#001dd2 146px,#0223ff 147px,#5d0dff 203px,#9301ff 232px,#8600e5 233px,#5c0099 235px,#990096 284px,#99006d 321px,#99004d 369px,#830745 370px,#2a2126 372px,#232323 373px,#232323 375px,#391325 378px,#232323 382px,#232323 737px)"></div>
<div class="cs" style="top:595px;background:linear-gradient(90deg,#232323 0px,#232323 83px,#09217b 84px,#002099 85px,#001599 145px,#0120f2 146px,#0222ff 147px,#680aff 209px,#9001ff 230px,#7c00d9 231px,#6400ac 232px,#5a0099 233px,#990096 284px,#99006c 323px,#99004f 366px,#8a0449 367px,#571436 368px,#321f28 369px,#232323 370px,#232323 372px,#381425 375px,#381425 376px,#232323 379px,#232323 737px)"></div>
<div class="cs" style="top:596px;background:linear-gradient(90deg,#232323 0px,#232323 83px,#1a2240 84px,#001f99 85px,#001499 144px,#0018b9 145px,#0121ff 146px,#630aff 206px,#8a01ff 227px,#8500f2 228px,#5a009f 230px,#590099 232px,#990096 284px,#99006a 325px,#990051 363px,#8a044a 364px,#650f3c 365px,#391c2b 366px,#232323 367px,#272024 370px,#391326 373px,#232323 376px,#232323 737px)"></div>
<div class="cs" style="top:597px;background:linear-gradient(90deg,#232323 0px,#232323 84px,#09207b 85px,#001f99 86px,#001499 144px,#001bd9 145px,#0220ff 146px,#6309ff 206px,#8601ff 225px,#540099 228px,#990096 284px,#99006a 325px,#990053 360px,#92024f 361px,#6d0d40 362px,#401a2e 363px,#232323 364px,#262123 367px,#361526 369px,#391326 370px,#242223 373px,#232323 737px)"></div>
<div class="cs" style="top:598px;background:linear-gradient(90deg,#232323 0px,#232323 84px,#1a2240 85px,#001e99 86px,#001399 143px,#00149f 144px,#011ff9 145px,#041fff 147px,#6507ff 207px,#8101ff 222px,#7f00f9 223px,#5700a6 225px,#520099 226px,#990096 284px,#99006b 324px,#990054 358px,#6d0d41 359px,#232323 361px,#262124 364px,#391327 367px,#242223 370px,#232323 737px)"></div>
<div class="cs" style="top:599px;background:linear-gradient(90deg,#232323 0px,#232323 85px,#091f7b 86px,#001d99 87px,#001399 143px,#0017bf 144px,#011eff 145px,#6407ff 206px,#7d01ff 220px,#7600ec 221px,#6100bf 222px,#4f0099 223px,#990096 284px,#99006c 323px,#990056 355px,#2a2126 358px,#232323 359px,#242223 361px,#391327 364px,#232323 368px,#232323 737px)"></div>
<div class="cs" style="top:600px;background:linear-gradient(90deg,#232323 0px,#232323 85px,#1a2140 86px,#001d99 87px,#001299 143px,#001adf 144px,#021dff 145px,#6406ff 206px,#7a01ff 218px,#6900d9 219px,#5500ac 220px,#4c0099 221px,#990096 284px,#99006d 322px,#990058 352px,#83074d 353px,#4f1636 354px,#2a2126 355px,#232323 356px,#232323 358px,#391328 361px,#232323 365px,#232323 737px)"></div>
<div class="cs" style="top:601px;background:linear-gradient(90deg,#232323 0px,#232323 86px,#091e7b 87px,#001c99 88px,#001299 142px,#0013a6 143px,#011dff 144px,#6106ff 204px,#7501ff 215px,#7000f2 216px,#4c009f 218px,#4b0099 220px,#990096 284px,#99006c 324px,#99005a 349px,#83074f 350px,#57143a 351px,#321f2a 352px,#232323 353px,#232323 355px,#381428 358px,#381428 359px,#232323 362px,#232323 737px)"></div>
<div class="cs" style="top:602px;background:linear-gradient(90deg,#232323 0px,#232323 86px,#1a2140 87px,#001b99 88px,#001199 142px,#0016c6 143px,#011cff 144px,#6a02ff 209px,#7101ff 213px,#6700e5 214px,#5500b9 215px,#470099 216px,#990096 284px,#990064 334px,#99005c 346px,#8a0454 347px,#650f42 348px,#391c2d 349px,#232323 350px,#272024 353px,#381428 355px,#381428 356px,#232323 359px,#232323 737px)"></div>
<div class="cs" style="top:603px;background:linear-gradient(90deg,#232323 0px,#232323 87px,#091d7b 88px,#001b99 89px,#001099 142px,#011af2 143px,#021bff 144px,#6503ff 206px,#6c01ff 210px,#6b00f9 211px,#4a00a6 213px,#450099 214px,#990097 284px,#99006d 323px,#99005e 343px,#92025a 344px,#6d0d47 345px,#391c2e 346px,#232323 347px,#262124 350px,#361528 352px,#391329 353px,#242223 356px,#232323 737px)"></div>
<div class="cs" style="top:604px;background:linear-gradient(90deg,#232323 0px,#232323 87px,#1a2140 88px,#001a99 89px,#001099 141px,#0012ac 142px,#011aff 143px,#6202ff 204px,#6901ff 208px,#6300ec 209px,#5100bf 210px,#45009f 211px,#440099 213px,#970099 281px,#990065 333px,#990060 340px,#92025c 341px,#232323 344px,#262124 347px,#391329 350px,#242223 353px,#232323 737px)"></div>
<div class="cs" style="top:605px;background:linear-gradient(90deg,#232323 0px,#232323 88px,#0d1d6d 89px,#001999 90px,#000f99 141px,#0015d2 142px,#0219ff 143px,#5d03ff 201px,#6601ff 206px,#4a00b2 208px,#400099 209px,#940099 279px,#990094 286px,#990067 331px,#990062 338px,#2a2127 341px,#232323 342px,#242223 344px,#39132a 347px,#232323 351px,#232323 737px)"></div>
<div class="cs" style="top:606px;background:linear-gradient(90deg,#232323 0px,#232323 88px,#1f2232 89px,#001999 90px,#000f99 141px,#0118f9 142px,#0318ff 144px,#6101ff 203px,#5d00f2 204px,#5000cc 205px,#40009f 206px,#3f0099 208px,#940099 279px,#990090 289px,#990066 332px,#990064 335px,#830757 336px,#4f163b 337px,#2a2127 338px,#232323 339px,#232323 341px,#39132b 344px,#232323 348px,#232323 737px)"></div>
<div class="cs" style="top:607px;background:linear-gradient(90deg,#232323 0px,#232323 89px,#0d1c6d 90px,#001899 91px,#000e99 140px,#0011b9 141px,#0117ff 142px,#5e01ff 201px,#5600e5 202px,#4600b9 203px,#3b0099 204px,#8c0099 273px,#990096 285px,#99006f 321px,#990067 332px,#830759 333px,#571440 334px,#321f2b 335px,#232323 336px,#232323 338px,#38142b 341px,#38142a 342px,#232323 345px,#232323 737px)"></div>
<div class="cs" style="top:608px;background:linear-gradient(90deg,#232323 0px,#232323 89px,#1f2232 90px,#021892 91px,#001799 92px,#000e99 140px,#0013d9 141px,#0216ff 142px,#5901ff 198px,#5800f9 199px,#3d00a6 201px,#390099 202px,#8c0099 273px,#990096 285px,#990070 321px,#990069 329px,#8a0460 330px,#650f4a 331px,#321f2b 332px,#232323 333px,#272025 336px,#38142b 338px,#38142b 339px,#232323 342px,#232323 737px)"></div>
<div class="cs" style="top:609px;background:linear-gradient(90deg,#232323 0px,#232323 90px,#001799 92px,#000d99 139px,#000e9f 140px,#0116ff 141px,#5601ff 196px,#5300f2 197px,#4300bf 198px,#39009f 199px,#380099 201px,#8c0099 273px,#990096 285px,#99006c 326px,#920266 327px,#391c30 329px,#232323 330px,#272025 333px,#39132c 336px,#232323 339px,#232323 737px)"></div>
<div class="cs" style="top:610px;background:linear-gradient(90deg,#232323 0px,#232323 90px,#21222a 91px,#021792 92px,#001699 93px,#000d99 139px,#0010bf 140px,#0115ff 141px,#5301ff 194px,#3c00b2 196px,#350099 197px,#7f0099 263px,#990096 285px,#99006e 323px,#920269 324px,#232323 327px,#262124 330px,#39132d 333px,#242224 336px,#232323 737px)"></div>
<div class="cs" style="top:611px;background:linear-gradient(90deg,#232323 0px,#232323 91px,#141d57 92px,#001599 93px,#000c99 139px,#0012e6 140px,#0214ff 141px,#4e01ff 191px,#4c00f2 192px,#3600a6 194px,#330099 195px,#7f0099 263px,#990096 285px,#990070 321px,#4f163f 323px,#232323 324px,#242224 327px,#39132d 330px,#232323 334px,#232323 737px)"></div>
<div class="cs" style="top:612px;background:linear-gradient(90deg,#232323 0px,#232323 92px,#04178a 93px,#001599 94px,#000c99 138px,#000da6 139px,#0113ff 140px,#4b01ff 189px,#4500e5 190px,#300099 192px,#7f0099 263px,#990096 285px,#990073 318px,#7c095e 319px,#4f1640 320px,#2a2128 321px,#232323 322px,#242224 324px,#39132e 327px,#2f1a29 329px,#232323 331px,#232323 737px)"></div>
<div class="cs" style="top:613px;background:linear-gradient(90deg,#232323 0px,#232323 92px,#181e48 93px,#001499 94px,#000b99 138px,#0112ff 140px,#4701ff 186px,#4600f9 187px,#3f00d9 188px,#3100a6 189px,#2e0099 190px,#800099 264px,#990096 285px,#990076 315px,#830765 316px,#571446 317px,#321f2d 318px,#232323 319px,#232323 321px,#38142e 324px,#38142e 325px,#232323 328px,#232323 737px)"></div>
<div class="cs" style="top:614px;background:linear-gradient(90deg,#232323 0px,#232323 93px,#09177b 94px,#001399 95px,#000b99 138px,#0111f2 139px,#0211ff 140px,#4401ff 184px,#4200f2 185px,#3500bf 186px,#2d009f 187px,#2d0099 189px,#800099 264px,#990096 285px,#990078 312px,#8a046d 313px,#650f52 314px,#321f2d 315px,#232323 316px,#272025 319px,#38142e 321px,#38142e 322px,#232323 325px,#232323 737px)"></div>
<div class="cs" style="top:615px;background:linear-gradient(90deg,#232323 0px,#232323 93px,#1a1f40 94px,#001399 95px,#000a99 137px,#000bac 138px,#0111ff 139px,#4101ff 182px,#3000b2 184px,#2a0099 185px,#7a0099 259px,#990096 285px,#99007b 309px,#8a0470 310px,#650f54 311px,#391c33 312px,#232323 313px,#272025 316px,#391330 319px,#232323 322px,#232323 737px)"></div>
<div class="cs" style="top:616px;background:linear-gradient(90deg,#232323 0px,#232323 94px,#0d186d 95px,#001299 96px,#000a99 137px,#000ed9 138px,#0210ff 139px,#3d01ff 179px,#3b00f2 180px,#2a00a6 182px,#280099 183px,#7a0099 259px,#990096 285px,#99007e 306px,#920278 307px,#232323 310px,#262125 313px,#391330 316px,#242224 319px,#232323 737px)"></div>
<div class="cs" style="top:617px;background:linear-gradient(90deg,#232323 0px,#232323 94px,#1f2132 95px,#021392 96px,#001199 97px,#000999 137px,#010ff9 138px,#030eff 140px,#3a01ff 177px,#3500e5 178px,#260099 180px,#6f0099 250px,#990096 285px,#990081 304px,#740b63 305px,#481840 306px,#232323 307px,#242224 310px,#391331 313px,#232323 317px,#232323 737px)"></div>
<div class="cs" style="top:618px;background:linear-gradient(90deg,#232323 0px,#232323 95px,#001199 97px,#000999 136px,#000bb9 137px,#010eff 138px,#3601ff 174px,#3600f9 175px,#3000d9 176px,#2700ac 177px,#240099 178px,#750099 255px,#990097 285px,#990084 301px,#2a2129 304px,#232323 305px,#242224 307px,#391332 310px,#2e1b2a 312px,#232323 314px,#232323 737px)"></div>
<div class="cs" style="top:619px;background:linear-gradient(90deg,#232323 0px,#232323 95px,#21222a 96px,#04138a 97px,#001099 98px,#000899 136px,#000cdf 137px,#020dff 138px,#3301ff 172px,#3200f2 173px,#23009f 175px,#230099 177px,#750099 255px,#990097 285px,#990087 298px,#830774 299px,#57144e 300px,#321f2f 301px,#232323 302px,#232323 304px,#391332 307px,#232323 311px,#232323 737px)"></div>
<div class="cs" style="top:620px;background:linear-gradient(90deg,#232323 0px,#232323 96px,#161c4f 97px,#000f99 98px,#000899 135px,#00089f 136px,#010dff 137px,#3001ff 170px,#2c00df 171px,#2400b2 172px,#200099 173px,#6e0099 249px,#990097 285px,#99008b 295px,#8a047d 296px,#321f30 298px,#232323 299px,#232323 301px,#381432 304px,#381432 305px,#232323 308px,#232323 737px)"></div>
<div class="cs" style="top:621px;background:linear-gradient(90deg,#232323 0px,#232323 97px,#09147b 98px,#000f99 99px,#000899 135px,#0009c6 136px,#010cff 137px,#2c01ff 167px,#2d00f9 168px,#2600cc 169px,#2000a6 170px,#1e0099 171px,#6e0099 249px,#990097 285px,#99008e 292px,#8a0480 293px,#650f5e 294px,#391c36 295px,#232323 296px,#272026 299px,#391334 302px,#232323 305px,#232323 737px)"></div>
<div class="cs" style="top:622px;background:linear-gradient(90deg,#232323 0px,#232323 97px,#1a1e40 98px,#000e99 99px,#000799 135px,#000aec 136px,#020bff 137px,#2a01ff 165px,#2700e5 166px,#1c0099 168px,#6d0099 248px,#990097 285px,#990092 289px,#92028a 290px,#6d0d67 291px,#401a3e 292px,#232323 293px,#262125 296px,#361533 298px,#391335 299px,#242224 302px,#232323 737px)"></div>
<div class="cs" style="top:623px;background:linear-gradient(90deg,#232323 0px,#232323 98px,#0d166d 99px,#000d99 100px,#000799 134px,#0007a6 135px,#010aff 136px,#2601ff 162px,#2600f9 163px,#2200d9 164px,#1c00ac 165px,#1a0099 166px,#6d0099 248px,#990096 286px,#990094 287px,#6d0d69 288px,#232323 290px,#262125 293px,#391335 296px,#242224 299px,#232323 737px)"></div>
<div class="cs" style="top:624px;background:linear-gradient(90deg,#232323 0px,#232323 98px,#21222a 99px,#020e92 100px,#000d99 101px,#000699 134px,#0008d2 135px,#0109ff 136px,#2301ff 160px,#2300f2 161px,#19009f 163px,#190099 165px,#6d0099 248px,#990098 284px,#2a212a 287px,#232323 288px,#242224 290px,#391336 293px,#361534 294px,#262125 296px,#232323 737px)"></div>
<div class="cs" style="top:625px;background:linear-gradient(90deg,#232323 0px,#232323 99px,#141957 100px,#000c99 101px,#000699 134px,#0108f2 135px,#0209ff 136px,#2101ff 158px,#160099 161px,#670099 242px,#960099 281px,#810783 282px,#2a212a 284px,#232323 285px,#232323 287px,#391337 290px,#232323 294px,#232323 737px)"></div>
<div class="cs" style="top:626px;background:linear-gradient(90deg,#232323 0px,#232323 100px,#071083 101px,#000c99 102px,#000599 133px,#0006b2 134px,#0108ff 135px,#1d01ff 155px,#1d00f9 156px,#1500a6 158px,#150099 159px,#6c0099 247px,#920099 278px,#85048a 279px,#551457 280px,#311f32 281px,#232323 282px,#232323 284px,#381437 287px,#381436 288px,#232323 291px,#232323 737px)"></div>
<div class="cs" style="top:627px;background:linear-gradient(90deg,#232323 0px,#232323 100px,#1a1d40 101px,#000b99 102px,#000599 133px,#0006d9 134px,#0207ff 135px,#1a01ff 153px,#1a00ec 154px,#1600bf 155px,#120099 156px,#6c0099 247px,#8e0099 275px,#82048a 276px,#610f65 277px,#381c39 278px,#232323 279px,#272027 282px,#391339 285px,#232323 288px,#232323 737px)"></div>
<div class="cs" style="top:628px;background:linear-gradient(90deg,#232323 0px,#232323 101px,#0f1565 102px,#000a99 103px,#000499 133px,#0106f9 134px,#0306ff 136px,#1800ff 151px,#1600d9 152px,#1200ac 153px,#110099 154px,#620099 238px,#8a0099 272px,#850292 273px,#650d6d 274px,#3e1a40 275px,#232323 276px,#262126 279px,#361536 281px,#391339 282px,#242224 285px,#232323 737px)"></div>
<div class="cs" style="top:629px;background:linear-gradient(90deg,#232323 0px,#232323 101px,#21212a 102px,#040d8a 103px,#000a99 104px,#000499 132px,#0005bf 133px,#0106ff 134px,#1401ff 148px,#1500f2 149px,#0f009f 151px,#100099 153px,#620099 238px,#860099 269px,#810292 270px,#232323 273px,#252126 276px,#381339 279px,#242224 282px,#232323 737px)"></div>
<div class="cs" style="top:630px;background:linear-gradient(90deg,#232323 0px,#232323 102px,#181b48 103px,#000999 104px,#000399 132px,#0005df 133px,#0205ff 134px,#1201ff 146px,#0d0099 149px,#610099 237px,#840099 267px,#29212a 270px,#232323 271px,#242224 273px,#371339 276px,#232323 280px,#232323 737px)"></div>
<div class="cs" style="top:631px;background:linear-gradient(90deg,#232323 0px,#232323 103px,#0b1174 104px,#000899 105px,#000399 131px,#0003a6 132px,#0104ff 133px,#0e01ff 143px,#0f00f9 144px,#0c00a6 146px,#0c0099 147px,#5d0099 233px,#800099 264px,#700783 265px,#47164f 266px,#29212a 267px,#232323 268px,#232323 270px,#361339 273px,#232323 277px,#232323 737px)"></div>
<div class="cs" style="top:632px;background:linear-gradient(90deg,#232323 0px,#232323 103px,#21212a 104px,#020a92 105px,#000899 106px,#000399 131px,#0003c6 132px,#0103ff 133px,#0c01ff 141px,#0c00ec 142px,#0b00bf 143px,#0a009f 144px,#0b0099 146px,#5f0099 235px,#7d0099 261px,#6d0783 262px,#4b1457 263px,#2f1f32 264px,#232323 265px,#232323 267px,#341438 270px,#341438 271px,#232323 274px,#232323 737px)"></div>
<div class="cs" style="top:633px;background:linear-gradient(90deg,#232323 0px,#232323 104px,#181a48 105px,#000799 106px,#000299 131px,#0003ec 132px,#0203ff 133px,#0a00ff 139px,#0900b2 141px,#080099 142px,#5c0099 232px,#790099 258px,#6f048a 259px,#550f65 260px,#341c39 261px,#232323 262px,#262027 265px,#331438 267px,#331438 268px,#232323 271px,#232323 737px)"></div>
<div class="cs" style="top:634px;background:linear-gradient(90deg,#232323 0px,#232323 105px,#0b0f74 106px,#000699 107px,#000299 130px,#0002ac 131px,#0102ff 132px,#0601ff 136px,#0700f2 137px,#0700cc 138px,#06009f 139px,#080099 141px,#560099 226px,#760099 255px,#720292 256px,#580d6d 257px,#331c39 258px,#232323 259px,#252126 262px,#311536 264px,#331339 265px,#242224 268px,#232323 737px)"></div>
<div class="cs" style="top:635px;background:linear-gradient(90deg,#232323 0px,#232323 105px,#21212a 106px,#020892 107px,#000699 108px,#000199 130px,#0001d2 131px,#0101ff 132px,#0401ff 134px,#0500e5 135px,#0500b9 136px,#050099 137px,#530099 223px,#720099 252px,#6f0292 253px,#232323 256px,#252126 259px,#321339 262px,#242224 265px,#232323 737px)"></div>
<div class="cs" style="top:636px;background:linear-gradient(90deg,#232323 0px,#232323 106px,#181a48 107px,#000599 108px,#000199 130px,#0101f2 131px,#0200f9 132px,#0300a6 134px,#030099 135px,#590099 229px,#700099 250px,#28212a 253px,#232323 254px,#242224 256px,#321339 259px,#232323 263px,#232323 737px)"></div>
<div class="cs" style="top:637px;background:linear-gradient(90deg,#232323 0px,#232323 107px,#0d106d 108px,#000499 109px,#000099 129px,#0100bf 131px,#01009f 132px,#030099 134px,#530099 223px,#6d0099 247px,#5b097c 248px,#40164f 249px,#28212a 250px,#232323 251px,#232323 253px,#311339 256px,#2b1a2f 258px,#232323 260px,#232323 737px)"></div>
<div class="cs" style="top:638px;background:linear-gradient(90deg,#232323 0px,#232323 107px,#21212a 108px,#04088a 109px,#000499 110px,#030099 134px,#560099 226px,#6a0099 244px,#5d0783 245px,#431457 246px,#2c1f32 247px,#232323 248px,#232323 250px,#2f1438 253px,#2f1438 254px,#232323 257px,#232323 737px)"></div>
<div class="cs" style="top:639px;background:linear-gradient(90deg,#232323 0px,#232323 108px,#1a1b40 109px,#000399 110px,#030099 133px,#530099 223px,#660099 241px,#5f048a 242px,#4a0f65 243px,#2c1f32 244px,#232323 245px,#252027 248px,#2e1438 250px,#2f1438 251px,#232323 254px,#232323 737px)"></div>
<div class="cs" style="top:640px;background:linear-gradient(90deg,#232323 0px,#232323 109px,#000399 111px,#030099 133px,#4e0099 217px,#630099 238px,#600292 239px,#301c39 241px,#232323 242px,#252027 245px,#2f1339 248px,#232323 251px,#232323 737px)"></div>
<div class="cs" style="top:641px;background:linear-gradient(90deg,#232323 0px,#232323 110px,#070883 111px,#000299 112px,#030099 133px,#520099 221px,#600099 235px,#5d0292 236px,#232323 239px,#242126 242px,#2e1339 245px,#242224 248px,#232323 737px)"></div>
<div class="cs" style="top:642px;background:linear-gradient(90deg,#232323 0px,#232323 110px,#1f1f32 111px,#020392 112px,#000199 113px,#030099 132px,#4f0099 218px,#5e0099 233px,#3a164f 235px,#232323 236px,#242224 239px,#2d1339 242px,#232323 246px,#232323 737px)"></div>
<div class="cs" style="top:643px;background:linear-gradient(90deg,#232323 0px,#232323 111px,#1a1a40 112px,#000199 113px,#040099 133px,#520099 221px,#5b0099 230px,#27212a 233px,#232323 234px,#242224 236px,#2c1339 239px,#281b2e 241px,#232323 243px,#232323 737px)"></div>
<div class="cs" style="top:644px;background:linear-gradient(90deg,#232323 0px,#232323 112px,#000099 114px,#040099 133px,#540099 223px,#580099 227px,#4f0783 228px,#3b1457 229px,#2a1f32 230px,#232323 231px,#232323 233px,#2b1438 236px,#281a2f 238px,#232323 240px,#232323 737px)"></div>
<div class="cs" style="top:645px;background:linear-gradient(90deg,#232323 0px,#232323 113px,#0b0b74 114px,#000099 115px,#040099 133px,#550099 224px,#50048a 225px,#2a1f32 227px,#232323 228px,#232323 230px,#2a1438 233px,#2a1438 234px,#232323 237px,#232323 737px)"></div>
<div class="cs" style="top:646px;background:linear-gradient(90deg,#232323 0px,#232323 113px,#21212a 114px,#070783 115px,#000099 116px,#040099 132px,#520099 221px,#4d048a 222px,#3f0f65 223px,#2c1c39 224px,#232323 225px,#242027 228px,#2a1339 231px,#232323 234px,#232323 737px)"></div>
<div class="cs" style="top:647px;background:linear-gradient(90deg,#232323 0px,#232323 114px,#1f1f32 115px,#020292 116px,#000099 117px,#040099 132px,#4f0099 218px,#4e0292 219px,#232323 222px,#242126 225px,#281536 227px,#291339 228px,#232224 231px,#232323 737px)"></div>
<div class="cs" style="top:648px;background:linear-gradient(90deg,#232323 0px,#232323 115px,#1c1c39 116px,#020292 117px,#000099 118px,#060099 134px,#4e0099 216px,#410b74 217px,#311848 218px,#232323 219px,#232224 222px,#291339 225px,#232323 229px,#232323 737px)"></div>
<div class="cs" style="top:649px;background:linear-gradient(90deg,#232323 0px,#232323 116px,#16164f 117px,#000099 118px,#060099 134px,#4b0099 213px,#26212a 216px,#232323 217px,#232224 219px,#281339 222px,#261b2e 224px,#232323 226px,#232323 737px)"></div>
<div class="cs" style="top:650px;background:linear-gradient(90deg,#232323 0px,#232323 117px,#16164f 118px,#000099 119px,#060099 133px,#480099 210px,#420783 211px,#341457 212px,#281f32 213px,#232323 214px,#232323 216px,#271339 219px,#232323 223px,#232323 737px)"></div>
<div class="cs" style="top:651px;background:linear-gradient(90deg,#232323 0px,#232323 118px,#0f0f65 119px,#000099 120px,#0a0099 138px,#450099 207px,#42048a 208px,#331457 209px,#281f32 210px,#232323 211px,#232323 213px,#261438 216px,#271438 217px,#232323 220px,#232323 737px)"></div>
<div class="cs" style="top:652px;background:linear-gradient(90deg,#232323 0px,#232323 119px,#0d0d6d 120px,#000099 121px,#1b0099 159px,#430099 204px,#3f048a 205px,#360f65 206px,#291c39 207px,#232323 208px,#232027 211px,#261339 214px,#232323 217px,#232323 737px)"></div>
<div class="cs" style="top:653px;background:linear-gradient(90deg,#232323 0px,#232323 120px,#0d0d6d 121px,#000099 122px,#380099 192px,#400099 201px,#3f0292 202px,#360d6d 203px,#2b1a40 204px,#232323 205px,#232126 208px,#251536 210px,#251339 211px,#232224 214px,#232323 737px)"></div>
<div class="cs" style="top:654px;background:linear-gradient(90deg,#232323 0px,#232323 121px,#0d0d6d 122px,#000099 123px,#3e0099 199px,#350d6d 200px,#232323 202px,#232126 205px,#251339 208px,#232224 211px,#232323 737px)"></div>
<div class="cs" style="top:655px;background:linear-gradient(90deg,#232323 0px,#232323 122px,#0d0d6d 123px,#000099 124px,#3c0099 196px,#25212a 199px,#232323 200px,#232224 202px,#241339 205px,#241c2d 207px,#232323 209px,#232323 737px)"></div>
<div class="cs" style="top:656px;background:linear-gradient(90deg,#232323 0px,#232323 123px,#16164f 124px,#010099 125px,#390099 193px,#360783 194px,#25212a 196px,#232323 197px,#232323 199px,#231339 202px,#232323 206px,#232323 737px)"></div>
<div class="cs" style="top:657px;background:linear-gradient(90deg,#232323 0px,#232323 124px,#16164f 125px,#020099 126px,#370099 190px,#35048a 191px,#2c1457 192px,#261f32 193px,#232323 194px,#232323 196px,#231438 199px,#231438 200px,#232323 203px,#232323 737px)"></div>
<div class="cs" style="top:658px;background:linear-gradient(90deg,#232323 0px,#232323 125px,#1b1a40 126px,#050292 127px,#040099 128px,#340099 187px,#33048a 188px,#2e0f65 189px,#271c39 190px,#232323 191px,#232027 194px,#221536 196px,#221438 197px,#232323 200px,#232323 737px)"></div>
<div class="cs" style="top:659px;background:linear-gradient(90deg,#232323 0px,#232323 126px,#1d1c39 127px,#08048a 128px,#050099 129px,#320099 184px,#310292 185px,#2d0d6d 186px,#261c39 187px,#232323 188px,#232126 191px,#221536 193px,#221339 194px,#232224 197px,#232323 737px)"></div>
<div class="cs" style="top:660px;background:linear-gradient(90deg,#232323 0px,#232323 127px,#21212a 128px,#0d097c 129px,#060099 130px,#2f0099 181px,#2f0292 182px,#232323 185px,#232126 188px,#211339 191px,#232224 194px,#232323 737px)"></div>
<div class="cs" style="top:661px;background:linear-gradient(90deg,#232323 0px,#232323 129px,#130f65 130px,#070099 131px,#2e0099 179px,#24212a 182px,#232323 183px,#232224 185px,#201339 188px,#232323 192px,#232323 737px)"></div>
<div class="cs" style="top:662px;background:linear-gradient(90deg,#232323 0px,#232323 130px,#1a1848 131px,#0a0292 132px,#090099 133px,#2b0099 176px,#2a0783 177px,#27164f 178px,#24212a 179px,#232323 180px,#232323 182px,#201339 185px,#232323 189px,#232323 737px)"></div>
<div class="cs" style="top:663px;background:linear-gradient(90deg,#232323 0px,#232323 131px,#1e1c39 132px,#0e0783 133px,#0a0099 134px,#290099 173px,#280783 174px,#261457 175px,#241f32 176px,#232323 177px,#232323 179px,#201438 182px,#201438 183px,#232323 186px,#232323 737px)"></div>
<div class="cs" style="top:664px;background:linear-gradient(90deg,#232323 0px,#232323 132px,#21212a 133px,#130d6d 134px,#0b0099 135px,#270099 170px,#27048a 171px,#260f65 172px,#241c39 173px,#232323 174px,#222027 177px,#1f1438 179px,#1f1438 180px,#232323 183px,#232323 737px)"></div>
<div class="cs" style="top:665px;background:linear-gradient(90deg,#232323 0px,#232323 134px,#1c1848 135px,#0d0292 136px,#0d0099 137px,#240099 167px,#250292 168px,#241c39 170px,#232323 171px,#222126 174px,#1f1536 176px,#1e1339 177px,#232323 180px,#232323 737px)"></div>
<div class="cs" style="top:666px;background:linear-gradient(90deg,#232323 0px,#232323 135px,#201f32 136px,#12097c 137px,#0e0099 138px,#220099 164px,#230292 165px,#232323 168px,#222126 171px,#1e1339 174px,#232224 177px,#232323 737px)"></div>
<div class="cs" style="top:667px;background:linear-gradient(90deg,#232323 0px,#232323 137px,#1a1457 138px,#100292 139px,#0f0099 140px,#210099 162px,#23164f 164px,#232323 165px,#232224 168px,#1d1339 171px,#232323 175px,#232323 737px)"></div>
<div class="cs" style="top:668px;background:linear-gradient(90deg,#232323 0px,#232323 138px,#22212a 139px,#160b74 140px,#100099 141px,#1e0099 159px,#20097c 160px,#22164f 161px,#23212a 162px,#232323 163px,#232224 165px,#1d1339 168px,#201a2f 170px,#232323 172px,#232323 737px)"></div>
<div class="cs" style="top:669px;background:linear-gradient(90deg,#232323 0px,#232323 140px,#1d1848 141px,#130292 142px,#120099 143px,#1c0099 156px,#1e0783 157px,#211457 158px,#221f32 159px,#232323 160px,#232323 162px,#1c1438 165px,#1d1438 166px,#232323 169px,#232323 737px)"></div>
<div class="cs" style="top:670px;background:linear-gradient(90deg,#232323 0px,#232323 141px,#22212a 142px,#180b74 143px,#130099 144px,#1a0099 153px,#1c048a 154px,#1f0f65 155px,#221f32 156px,#232323 157px,#232323 160px,#1c1438 162px,#1c1438 163px,#232323 166px,#232323 737px)"></div>
<div class="cs" style="top:671px;background:linear-gradient(90deg,#232323 0px,#232323 143px,#1d164f 144px,#150292 145px,#150099 146px,#180099 150px,#190292 151px,#211c39 153px,#232323 154px,#222126 161px,#201d2b 162px,#232323 163px,#232323 737px)"></div>
<div class="cs" style="top:672px;background:linear-gradient(90deg,#232323 0px,#232323 144px,#211f32 145px,#19097c 146px,#160099 147px,#170292 148px,#232323 151px,#232323 737px)"></div>
<div class="cs" style="top:673px;background:linear-gradient(90deg,#232323 0px,#232323 146px,#201a40 147px,#232323 148px,#232323 737px)"></div>
<div class="cs" style="top:674px;background:#232323"></div>
<div class="cs" style="top:675px;background:#232323"></div>
<div class="cs" style="top:676px;background:#232323"></div>
<div class="cs" style="top:677px;background:#232323"></div>
</div>
<svg style="left:0;top:0" width="10" height="10"><line x1="1153" y1="677.8" x2="1160" y2="677.8" stroke="#d0d0d0" stroke-width="1.5"/><line x1="1159.7" y1="678" x2="1159.7" y2="684.5" stroke="#d0d0d0" stroke-width="1.5"/><line x1="1153" y1="611.1" x2="1160" y2="611.1" stroke="#d0d0d0" stroke-width="1.5"/><line x1="1247.6" y1="678" x2="1247.6" y2="684.5" stroke="#d0d0d0" stroke-width="1.5"/><line x1="1153" y1="544.4" x2="1160" y2="544.4" stroke="#d0d0d0" stroke-width="1.5"/><line x1="1335.6" y1="678" x2="1335.6" y2="684.5" stroke="#d0d0d0" stroke-width="1.5"/><line x1="1153" y1="477.7" x2="1160" y2="477.7" stroke="#d0d0d0" stroke-width="1.5"/><line x1="1423.5" y1="678" x2="1423.5" y2="684.5" stroke="#d0d0d0" stroke-width="1.5"/><line x1="1153" y1="411.0" x2="1160" y2="411.0" stroke="#d0d0d0" stroke-width="1.5"/><line x1="1511.5" y1="678" x2="1511.5" y2="684.5" stroke="#d0d0d0" stroke-width="1.5"/><line x1="1153" y1="344.2" x2="1160" y2="344.2" stroke="#d0d0d0" stroke-width="1.5"/><line x1="1599.4" y1="678" x2="1599.4" y2="684.5" stroke="#d0d0d0" stroke-width="1.5"/><line x1="1153" y1="277.5" x2="1160" y2="277.5" stroke="#d0d0d0" stroke-width="1.5"/><line x1="1687.3" y1="678" x2="1687.3" y2="684.5" stroke="#d0d0d0" stroke-width="1.5"/><line x1="1153" y1="210.8" x2="1160" y2="210.8" stroke="#d0d0d0" stroke-width="1.5"/><line x1="1775.3" y1="678" x2="1775.3" y2="684.5" stroke="#d0d0d0" stroke-width="1.5"/><line x1="1153" y1="144.1" x2="1160" y2="144.1" stroke="#d0d0d0" stroke-width="1.5"/><line x1="1863.2" y1="678" x2="1863.2" y2="684.5" stroke="#d0d0d0" stroke-width="1.5"/></svg>
<div class="t" style="left:1144.5px;top:671.2px;font-size:16.0px;line-height:16.0px;color:#e0e0e0;transform:scaleX(0.8990);">0</div>
<div class="t" style="left:1155.7px;top:689.1px;font-size:16.0px;line-height:16.0px;color:#e0e0e0;transform:scaleX(0.8990);">0</div>
<div class="t" style="left:1130.5px;top:604.4px;font-size:16.0px;line-height:16.0px;color:#e0e0e0;transform:scaleX(0.9891);">0,1</div>
<div class="t" style="left:1236.6px;top:689.1px;font-size:16.0px;line-height:16.0px;color:#e0e0e0;transform:scaleX(0.9891);">0,1</div>
<div class="t" style="left:1130.5px;top:537.7px;font-size:16.0px;line-height:16.0px;color:#e0e0e0;transform:scaleX(0.9891);">0,2</div>
<div class="t" style="left:1324.6px;top:689.1px;font-size:16.0px;line-height:16.0px;color:#e0e0e0;transform:scaleX(0.9891);">0,2</div>
<div class="t" style="left:1130.5px;top:471.0px;font-size:16.0px;line-height:16.0px;color:#e0e0e0;transform:scaleX(0.9891);">0,3</div>
<div class="t" style="left:1412.5px;top:689.1px;font-size:16.0px;line-height:16.0px;color:#e0e0e0;transform:scaleX(0.9891);">0,3</div>
<div class="t" style="left:1130.5px;top:404.3px;font-size:16.0px;line-height:16.0px;color:#e0e0e0;transform:scaleX(0.9891);">0,4</div>
<div class="t" style="left:1500.5px;top:689.1px;font-size:16.0px;line-height:16.0px;color:#e0e0e0;transform:scaleX(0.9891);">0,4</div>
<div class="t" style="left:1130.5px;top:337.6px;font-size:16.0px;line-height:16.0px;color:#e0e0e0;transform:scaleX(0.9891);">0,5</div>
<div class="t" style="left:1588.4px;top:689.1px;font-size:16.0px;line-height:16.0px;color:#e0e0e0;transform:scaleX(0.9891);">0,5</div>
<div class="t" style="left:1130.5px;top:270.9px;font-size:16.0px;line-height:16.0px;color:#e0e0e0;transform:scaleX(0.9891);">0,6</div>
<div class="t" style="left:1676.3px;top:689.1px;font-size:16.0px;line-height:16.0px;color:#e0e0e0;transform:scaleX(0.9891);">0,6</div>
<div class="t" style="left:1130.5px;top:204.2px;font-size:16.0px;line-height:16.0px;color:#e0e0e0;transform:scaleX(0.9891);">0,7</div>
<div class="t" style="left:1764.3px;top:689.1px;font-size:16.0px;line-height:16.0px;color:#e0e0e0;transform:scaleX(0.9891);">0,7</div>
<div class="t" style="left:1130.5px;top:137.5px;font-size:16.0px;line-height:16.0px;color:#e0e0e0;transform:scaleX(0.9891);">0,8</div>
<div class="t" style="left:1852.2px;top:689.1px;font-size:16.0px;line-height:16.0px;color:#e0e0e0;transform:scaleX(0.9891);">0,8</div>
<div class="a" style="left:1639px;top:120.5px;width:256px;height:217px;background:#2a2a2a"></div>
<div class="a" style="left:1641.5px;top:123.5px;width:250.5px;height:212px;background:#8e8e96"></div>
<div class="a" style="left:0;top:0">
<div class="ci" style="top:125px;background:linear-gradient(90deg,#6d9900 0px,#999600 212px,#998e00 248px)"></div>
<div class="ci" style="top:126px;background:linear-gradient(90deg,#6d9900 0px,#999600 211px,#998e00 248px)"></div>
<div class="ci" style="top:127px;background:linear-gradient(90deg,#6d9900 0px,#999600 210px,#998e00 248px)"></div>
<div class="ci" style="top:128px;background:linear-gradient(90deg,#6d9900 0px,#999600 210px,#998e00 248px)"></div>
<div class="ci" style="top:129px;background:linear-gradient(90deg,#6d9900 0px,#999600 209px,#998d00 248px)"></div>
<div class="ci" style="top:130px;background:linear-gradient(90deg,#6d9900 0px,#999600 208px,#998d00 248px)"></div>
<div class="ci" style="top:131px;background:linear-gradient(90deg,#6e9900 0px,#999600 207px,#998d00 248px)"></div>
<div class="ci" style="top:132px;background:linear-gradient(90deg,#6e9900 0px,#999600 207px,#998d00 248px)"></div>
<div class="ci" style="top:133px;background:linear-gradient(90deg,#6e9900 0px,#999600 206px,#998d00 248px)"></div>
<div class="ci" style="top:134px;background:linear-gradient(90deg,#6e9900 0px,#999600 205px,#998d00 248px)"></div>
<div class="ci" style="top:135px;background:linear-gradient(90deg,#6e9900 0px,#999600 204px,#998d00 248px)"></div>
<div class="ci" style="top:136px;background:linear-gradient(90deg,#6e9900 0px,#999600 204px,#998c00 248px)"></div>
<div class="ci" style="top:137px;background:linear-gradient(90deg,#6e9900 0px,#999600 203px,#998c00 248px)"></div>
<div class="ci" style="top:138px;background:linear-gradient(90deg,#6e9900 0px,#999600 202px,#998c00 248px)"></div>
<div class="ci" style="top:139px;background:linear-gradient(90deg,#6f9900 0px,#999600 202px,#998c00 248px)"></div>
<div class="ci" style="top:140px;background:linear-gradient(90deg,#6f9900 0px,#999600 201px,#998c00 248px)"></div>
<div class="ci" style="top:141px;background:linear-gradient(90deg,#6f9900 0px,#999600 200px,#998c00 248px)"></div>
<div class="ci" style="top:142px;background:linear-gradient(90deg,#6f9900 0px,#999600 199px,#998b00 248px)"></div>
<div class="ci" style="top:143px;background:linear-gradient(90deg,#6f9900 0px,#999600 199px,#998b00 248px)"></div>
<div class="ci" style="top:144px;background:linear-gradient(90deg,#6f9900 0px,#999600 198px,#998b00 248px)"></div>
<div class="ci" style="top:145px;background:linear-gradient(90deg,#6f9900 0px,#999600 197px,#998b00 248px)"></div>
<div class="ci" style="top:146px;background:linear-gradient(90deg,#749f00 0px,#709900 2px,#999600 197px,#998b00 248px)"></div>
<div class="ci" style="top:147px;background:linear-gradient(90deg,#b5f900 0px,#87b900 1px,#709900 2px,#999600 196px,#998b00 248px)"></div>
<div class="ci" style="top:148px;background:linear-gradient(90deg,#baff00 0px,#bbff00 1px,#a4df00 2px,#759f00 3px,#719900 5px,#999600 195px,#998b00 248px)"></div>
<div class="ci" style="top:149px;background:linear-gradient(90deg,#bbff00 0px,#bbff00 2px,#b7f900 3px,#88b900 4px,#719900 5px,#999600 194px,#998a00 248px)"></div>
<div class="ci" style="top:150px;background:linear-gradient(90deg,#bbff00 0px,#bcff00 4px,#a5df00 5px,#769f00 6px,#729900 8px,#999600 194px,#998a00 248px)"></div>
<div class="ci" style="top:151px;background:linear-gradient(90deg,#bbff01 0px,#bdff00 5px,#b8f900 6px,#89b900 7px,#729900 8px,#999600 193px,#998a00 248px)"></div>
<div class="ci" style="top:152px;background:linear-gradient(90deg,#bbff01 0px,#beff00 7px,#a6df00 8px,#779f00 9px,#739900 11px,#999600 192px,#998a00 248px)"></div>
<div class="ci" style="top:153px;background:linear-gradient(90deg,#bbff01 0px,#beff00 8px,#baf900 9px,#8ab900 10px,#739900 11px,#999600 192px,#998a00 248px)"></div>
<div class="ci" style="top:154px;background:linear-gradient(90deg,#bcff01 0px,#bfff00 10px,#a8df00 11px,#789f00 12px,#749900 14px,#999600 191px,#998a00 248px)"></div>
<div class="ci" style="top:155px;background:linear-gradient(90deg,#bcff01 0px,#c0ff00 11px,#bbf900 12px,#8cb900 13px,#749900 14px,#999600 190px,#998900 248px)"></div>
<div class="ci" style="top:156px;background:linear-gradient(90deg,#bcff01 0px,#c1ff00 13px,#a9df00 14px,#799f00 15px,#759900 17px,#999600 189px,#998900 248px)"></div>
<div class="ci" style="top:157px;background:linear-gradient(90deg,#bcff01 0px,#c1ff00 14px,#bdf900 15px,#8db900 16px,#759900 17px,#999600 189px,#998900 248px)"></div>
<div class="ci" style="top:158px;background:linear-gradient(90deg,#bdff01 0px,#c2ff00 16px,#aadf00 17px,#7a9f00 18px,#759900 20px,#999600 188px,#998900 248px)"></div>
<div class="ci" style="top:159px;background:linear-gradient(90deg,#bdff02 0px,#c3ff00 17px,#bef900 18px,#8eb900 19px,#769900 20px,#999600 187px,#998900 248px)"></div>
<div class="ci" style="top:160px;background:linear-gradient(90deg,#bdff02 0px,#c4ff00 19px,#acdf00 20px,#7b9f00 21px,#769900 23px,#999600 185px,#998900 248px)"></div>
<div class="ci" style="top:161px;background:linear-gradient(90deg,#bdff02 0px,#c4ff00 20px,#c0f900 21px,#8fb900 22px,#779900 23px,#999600 186px,#998900 248px)"></div>
<div class="ci" style="top:162px;background:linear-gradient(90deg,#bdff02 0px,#c5ff00 22px,#addf00 23px,#7c9f00 24px,#779900 26px,#999600 185px,#998800 248px)"></div>
<div class="ci" style="top:163px;background:linear-gradient(90deg,#beff02 0px,#c6ff00 23px,#c1f900 24px,#90b900 25px,#779900 26px,#999600 183px,#998800 248px)"></div>
<div class="ci" style="top:164px;background:linear-gradient(90deg,#beff02 0px,#c7ff00 25px,#aedf00 26px,#7d9f00 27px,#789900 29px,#999600 183px,#998800 248px)"></div>
<div class="ci" style="top:165px;background:linear-gradient(90deg,#beff02 0px,#c8ff00 26px,#c3f900 27px,#91b900 28px,#789900 29px,#999600 183px,#998800 248px)"></div>
<div class="ci" style="top:166px;background:linear-gradient(90deg,#beff02 0px,#c9ff00 28px,#b0df00 29px,#7e9f00 30px,#799900 32px,#999600 182px,#998800 248px)"></div>
<div class="ci" style="top:167px;background:linear-gradient(90deg,#bfff02 0px,#c9ff00 29px,#c4f900 30px,#92b900 31px,#799900 32px,#999600 180px,#998800 248px)"></div>
<div class="ci" style="top:168px;background:linear-gradient(90deg,#bfff03 0px,#caff00 31px,#b1df00 32px,#7f9f00 33px,#7a9900 35px,#999600 181px,#998700 248px)"></div>
<div class="ci" style="top:169px;background:linear-gradient(90deg,#bfff03 0px,#cbff00 32px,#c6f900 33px,#94b900 34px,#7a9900 35px,#999600 180px,#998700 248px)"></div>
<div class="ci" style="top:170px;background:linear-gradient(90deg,#bfff03 0px,#ccff00 34px,#b3df00 35px,#809f00 36px,#7b9900 38px,#999600 179px,#998700 248px)"></div>
<div class="ci" style="top:171px;background:linear-gradient(90deg,#c0ff03 0px,#ccff00 35px,#c8f900 36px,#95b900 37px,#7b9900 38px,#999600 178px,#998700 248px)"></div>
<div class="ci" style="top:172px;background:linear-gradient(90deg,#c0ff03 0px,#cdff00 37px,#b4df00 38px,#819f00 39px,#7c9900 41px,#999600 178px,#998700 248px)"></div>
<div class="ci" style="top:173px;background:linear-gradient(90deg,#c0ff03 0px,#ceff00 38px,#c9f900 39px,#96b900 40px,#7c9900 41px,#999600 177px,#998700 248px)"></div>
<div class="ci" style="top:174px;background:linear-gradient(90deg,#c0ff03 0px,#cfff00 40px,#b5df00 41px,#829f00 42px,#7d9900 44px,#999600 176px,#998700 248px)"></div>
<div class="ci" style="top:175px;background:linear-gradient(90deg,#c0ff03 0px,#d0ff00 41px,#cbf900 42px,#97b900 43px,#7d9900 44px,#999600 176px,#998600 248px)"></div>
<div class="ci" style="top:176px;background:linear-gradient(90deg,#c1ff04 0px,#d1ff00 43px,#b7df00 44px,#839f00 45px,#7e9900 47px,#999600 175px,#998600 248px)"></div>
<div class="ci" style="top:177px;background:linear-gradient(90deg,#c1ff04 0px,#d1ff00 44px,#ccf900 45px,#98b900 46px,#7e9900 47px,#999600 174px,#998600 248px)"></div>
<div class="ci" style="top:178px;background:linear-gradient(90deg,#c1ff04 0px,#d2ff00 46px,#b8df00 47px,#849f00 48px,#7f9900 50px,#999600 174px,#998600 248px)"></div>
<div class="ci" style="top:179px;background:linear-gradient(90deg,#c1ff04 0px,#d3ff00 47px,#cef900 48px,#99b900 49px,#7f9900 50px,#999600 173px,#998600 248px)"></div>
<div class="ci" style="top:180px;background:linear-gradient(90deg,#c2ff04 0px,#d4ff00 49px,#badf00 50px,#859f00 51px,#809900 53px,#999600 172px,#998600 248px)"></div>
<div class="ci" style="top:181px;background:linear-gradient(90deg,#c2ff04 0px,#d4ff00 50px,#cff900 51px,#9bb900 52px,#809900 53px,#999600 171px,#998600 248px)"></div>
<div class="ci" style="top:182px;background:linear-gradient(90deg,#c2ff04 0px,#d5ff00 52px,#bbdf00 53px,#869f00 54px,#819900 56px,#999600 171px,#998500 248px)"></div>
<div class="ci" style="top:183px;background:linear-gradient(90deg,#c2ff04 0px,#d6ff00 53px,#d1f900 54px,#9cb900 55px,#819900 56px,#999600 170px,#998500 248px)"></div>
<div class="ci" style="top:184px;background:linear-gradient(90deg,#c3ff05 0px,#d7ff00 55px,#bddf00 56px,#879f00 57px,#829900 59px,#999600 169px,#998500 248px)"></div>
<div class="ci" style="top:185px;background:linear-gradient(90deg,#c3ff05 0px,#d8ff00 56px,#d3f900 57px,#9db900 58px,#829900 59px,#999600 168px,#998500 248px)"></div>
<div class="ci" style="top:186px;background:linear-gradient(90deg,#c3ff05 0px,#d9ff00 58px,#bedf00 59px,#889f00 60px,#839900 62px,#999600 168px,#998500 248px)"></div>
<div class="ci" style="top:187px;background:linear-gradient(90deg,#c3ff05 0px,#d9ff00 59px,#d4f900 60px,#9eb900 61px,#839900 62px,#999600 167px,#998500 248px)"></div>
<div class="ci" style="top:188px;background:linear-gradient(90deg,#c4ff05 0px,#daff00 61px,#bfdf00 62px,#8ea600 63px,#849900 64px,#999600 166px,#998400 248px)"></div>
<div class="ci" style="top:189px;background:linear-gradient(90deg,#c4ff05 0px,#dbff00 62px,#d6f900 63px,#849900 65px,#999600 166px,#998400 248px)"></div>
<div class="ci" style="top:190px;background:linear-gradient(90deg,#c4ff05 0px,#dcff00 64px,#c6e600 65px,#90a600 66px,#859900 67px,#999600 165px,#998400 248px)"></div>
<div class="ci" style="top:191px;background:linear-gradient(90deg,#c4ff05 0px,#ddff00 65px,#d8f900 66px,#859900 68px,#999600 164px,#998400 248px)"></div>
<div class="ci" style="top:192px;background:linear-gradient(90deg,#c4ff06 0px,#deff00 67px,#c8e600 68px,#91a600 69px,#869900 70px,#999600 163px,#998400 248px)"></div>
<div class="ci" style="top:193px;background:linear-gradient(90deg,#c5ff06 0px,#deff00 68px,#d9f900 69px,#869900 71px,#999600 163px,#998400 248px)"></div>
<div class="ci" style="top:194px;background:linear-gradient(90deg,#c5ff06 0px,#dfff00 70px,#c9e600 71px,#92a600 72px,#879900 73px,#999600 163px,#998400 248px)"></div>
<div class="ci" style="top:195px;background:linear-gradient(90deg,#c5ff06 0px,#e0ff00 71px,#dbf900 72px,#879900 74px,#999600 161px,#998300 248px)"></div>
<div class="ci" style="top:196px;background:linear-gradient(90deg,#c5ff06 0px,#e1ff00 73px,#cbe600 74px,#93a600 75px,#889900 76px,#999600 162px,#998300 248px)"></div>
<div class="ci" style="top:197px;background:linear-gradient(90deg,#c6ff06 0px,#e2ff00 74px,#dcf900 75px,#889900 77px,#999600 160px,#998300 248px)"></div>
<div class="ci" style="top:198px;background:linear-gradient(90deg,#c6ff06 0px,#e3ff00 76px,#cce600 77px,#94a600 78px,#899900 79px,#999600 160px,#998300 248px)"></div>
<div class="ci" style="top:199px;background:linear-gradient(90deg,#c6ff06 0px,#e3ff00 77px,#def900 78px,#899900 80px,#999600 158px,#998300 248px)"></div>
<div class="ci" style="top:200px;background:linear-gradient(90deg,#c6ff07 0px,#e5ff00 79px,#cee600 80px,#95a600 81px,#8a9900 82px,#999600 159px,#998300 248px)"></div>
<div class="ci" style="top:201px;background:linear-gradient(90deg,#c7ff07 0px,#e5ff00 80px,#e0f900 81px,#8a9900 83px,#999600 158px,#998300 248px)"></div>
<div class="ci" style="top:202px;background:linear-gradient(90deg,#c7ff07 0px,#e6ff00 82px,#d0e600 83px,#96a600 84px,#8b9900 85px,#999600 157px,#998200 248px)"></div>
<div class="ci" style="top:203px;background:linear-gradient(90deg,#c7ff07 0px,#e7ff00 83px,#e1f900 84px,#8b9900 86px,#999600 157px,#998200 248px)"></div>
<div class="ci" style="top:204px;background:linear-gradient(90deg,#c7ff07 0px,#e8ff00 85px,#d1e600 86px,#97a600 87px,#8c9900 88px,#999600 156px,#998200 248px)"></div>
<div class="ci" style="top:205px;background:linear-gradient(90deg,#c8ff07 0px,#e9ff00 86px,#e3f900 87px,#8c9900 89px,#999600 155px,#998200 248px)"></div>
<div class="ci" style="top:206px;background:linear-gradient(90deg,#c8ff07 0px,#eaff00 88px,#d3e600 89px,#98a600 90px,#8d9900 91px,#999600 155px,#998200 248px)"></div>
<div class="ci" style="top:207px;background:linear-gradient(90deg,#c8ff08 0px,#eaff00 89px,#e5f900 90px,#8d9900 92px,#999600 154px,#998200 248px)"></div>
<div class="ci" style="top:208px;background:linear-gradient(90deg,#c8ff08 0px,#ebff00 91px,#d4e600 92px,#9aa600 93px,#8e9900 94px,#999600 153px,#998100 248px)"></div>
<div class="ci" style="top:209px;background:linear-gradient(90deg,#c9ff08 0px,#ecff00 92px,#e7f900 93px,#8e9900 95px,#999600 152px,#998100 248px)"></div>
<div class="ci" style="top:210px;background:linear-gradient(90deg,#c9ff08 0px,#edff00 94px,#d6e600 95px,#9ba600 96px,#8f9900 97px,#999600 152px,#998100 248px)"></div>
<div class="ci" style="top:211px;background:linear-gradient(90deg,#c9ff08 0px,#eeff00 95px,#e8f900 96px,#8f9900 98px,#999600 151px,#998100 248px)"></div>
<div class="ci" style="top:212px;background:linear-gradient(90deg,#c9ff08 0px,#efff00 97px,#d7e600 98px,#9ca600 99px,#909900 100px,#999500 152px,#998100 248px)"></div>
<div class="ci" style="top:213px;background:linear-gradient(90deg,#caff08 0px,#f0ff00 98px,#eaf900 99px,#909900 101px,#999600 150px,#998100 248px)"></div>
<div class="ci" style="top:214px;background:linear-gradient(90deg,#caff08 0px,#f1ff00 100px,#d9e600 101px,#9da600 102px,#919900 103px,#999500 152px,#998100 248px)"></div>
<div class="ci" style="top:215px;background:linear-gradient(90deg,#caff09 0px,#f1ff00 101px,#ecf900 102px,#929900 104px,#999500 153px,#998000 248px)"></div>
<div class="ci" style="top:216px;background:linear-gradient(90deg,#caff09 0px,#f2ff00 103px,#dbe600 104px,#9ea600 105px,#929900 106px,#999500 151px,#998000 248px)"></div>
<div class="ci" style="top:217px;background:linear-gradient(90deg,#cbff09 0px,#f3ff00 104px,#edf900 105px,#939900 107px,#999400 155px,#998000 248px)"></div>
<div class="ci" style="top:218px;background:linear-gradient(90deg,#cbff09 0px,#f4ff00 106px,#dce600 107px,#9fa600 108px,#939900 109px,#999400 153px,#998000 248px)"></div>
<div class="ci" style="top:219px;background:linear-gradient(90deg,#cbff09 0px,#f5ff00 107px,#eff900 108px,#bec600 109px,#949900 110px,#999400 154px,#998000 248px)"></div>
<div class="ci" style="top:220px;background:linear-gradient(90deg,#cbff09 0px,#f6ff00 109px,#dee600 110px,#a0a600 111px,#949900 112px,#999300 154px,#998000 248px)"></div>
<div class="ci" style="top:221px;background:linear-gradient(90deg,#ccff09 0px,#f7ff00 110px,#f1f900 111px,#959900 113px,#999200 161px,#998000 248px)"></div>
<div class="ci" style="top:222px;background:linear-gradient(90deg,#ccff09 0px,#f8ff00 112px,#dfe600 113px,#a2a600 114px,#959900 115px,#999000 167px,#997f00 248px)"></div>
<div class="ci" style="top:223px;background:linear-gradient(90deg,#ccff0a 0px,#f9ff00 113px,#f3f900 114px,#c1c600 115px,#969900 116px,#997f00 248px)"></div>
<div class="ci" style="top:224px;background:linear-gradient(90deg,#ccff0a 0px,#faff00 115px,#e1e600 116px,#a3a600 117px,#979900 118px,#997f00 248px)"></div>
<div class="ci" style="top:225px;background:linear-gradient(90deg,#cdff0a 0px,#faff00 116px,#f5f900 117px,#979900 119px,#997f00 248px)"></div>
<div class="ci" style="top:226px;background:linear-gradient(90deg,#cdff0a 0px,#fcff00 118px,#e3e600 119px,#a4a600 120px,#989900 121px,#997f00 248px)"></div>
<div class="ci" style="top:227px;background:linear-gradient(90deg,#cdff0a 0px,#fcff00 119px,#f6f900 120px,#989900 122px,#997f00 248px)"></div>
<div class="ci" style="top:228px;background:linear-gradient(90deg,#cdff0a 0px,#fdff00 121px,#e4e600 122px,#a5a600 123px,#999900 124px,#997f00 248px)"></div>
<div class="ci" style="top:229px;background:linear-gradient(90deg,#ceff0a 0px,#feff00 122px,#f8f900 123px,#999900 125px,#997e00 248px)"></div>
<div class="ci" style="top:230px;background:linear-gradient(90deg,#ceff0b 0px,#ffff00 124px,#e6e500 125px,#a6a500 126px,#999800 127px,#997e00 248px)"></div>
<div class="ci" style="top:231px;background:linear-gradient(90deg,#ceff0b 0px,#fffe00 125px,#f9f700 126px,#c6c400 127px,#999800 128px,#997e00 248px)"></div>
<div class="ci" style="top:232px;background:linear-gradient(90deg,#ceff0b 0px,#fffd00 127px,#e6e300 128px,#a6a400 129px,#999700 130px,#997e00 248px)"></div>
<div class="ci" style="top:233px;background:linear-gradient(90deg,#cfff0b 0px,#fffc00 128px,#f9f600 129px,#c6c300 130px,#999700 131px,#997e00 248px)"></div>
<div class="ci" style="top:234px;background:linear-gradient(90deg,#cfff0b 0px,#fffc00 128px,#fffb00 130px,#e6e200 131px,#a6a300 132px,#999600 133px,#997e00 248px)"></div>
<div class="ci" style="top:235px;background:linear-gradient(90deg,#cfff0b 0px,#fffd01 126px,#fffa00 131px,#f9f400 132px,#c6c100 133px,#999600 134px,#997e00 248px)"></div>
<div class="ci" style="top:236px;background:linear-gradient(90deg,#cfff0b 0px,#fffc01 126px,#fff900 133px,#e6e000 134px,#a6a200 135px,#999500 136px,#997d00 248px)"></div>
<div class="ci" style="top:237px;background:linear-gradient(90deg,#d0ff0b 0px,#fffc01 125px,#fff900 134px,#f9f200 135px,#999400 137px,#997d00 248px)"></div>
<div class="ci" style="top:238px;background:linear-gradient(90deg,#d0ff0c 0px,#fffc01 124px,#fff800 136px,#e6de00 137px,#a6a000 138px,#999400 139px,#997d00 248px)"></div>
<div class="ci" style="top:239px;background:linear-gradient(90deg,#d0ff0c 0px,#fffd01 123px,#fff700 137px,#f9f000 138px,#999300 140px,#997d00 248px)"></div>
<div class="ci" style="top:240px;background:linear-gradient(90deg,#d0ff0c 0px,#fffc02 123px,#fff600 139px,#e6dd00 140px,#a69f00 141px,#999300 142px,#997d00 248px)"></div>
<div class="ci" style="top:241px;background:linear-gradient(90deg,#d1ff0c 0px,#fffc02 123px,#fff500 140px,#f9ef00 141px,#c6bd00 142px,#999200 143px,#997d00 248px)"></div>
<div class="ci" style="top:242px;background:linear-gradient(90deg,#d1ff0c 0px,#fffc02 121px,#fff400 142px,#e6db00 143px,#a69e00 144px,#999200 145px,#997d00 248px)"></div>
<div class="ci" style="top:243px;background:linear-gradient(90deg,#d1ff0c 0px,#fffc02 121px,#fff300 143px,#f9ed00 144px,#999100 146px,#997c00 248px)"></div>
<div class="ci" style="top:244px;background:linear-gradient(90deg,#d1ff0c 0px,#fffc02 120px,#fff200 145px,#e6da00 146px,#a69d00 147px,#999100 148px,#997c00 248px)"></div>
<div class="ci" style="top:245px;background:linear-gradient(90deg,#d2ff0d 0px,#fffc02 120px,#fff200 146px,#f9eb00 147px,#999000 149px,#997c00 248px)"></div>
<div class="ci" style="top:246px;background:linear-gradient(90deg,#d2ff0d 0px,#fffd03 118px,#fff100 148px,#e6d800 149px,#a69c00 150px,#999000 151px,#997c00 248px)"></div>
<div class="ci" style="top:247px;background:linear-gradient(90deg,#d2ff0d 0px,#fffc03 118px,#fff000 149px,#f9ea00 150px,#c6b900 151px,#998f00 152px,#997c00 248px)"></div>
<div class="ci" style="top:248px;background:linear-gradient(90deg,#d2ff0d 0px,#fffc03 117px,#ffef00 151px,#e6d700 152px,#a69b00 153px,#998f00 154px,#997c00 248px)"></div>
<div class="ci" style="top:249px;background:linear-gradient(90deg,#d3ff0d 0px,#fffc03 116px,#ffee00 152px,#f9e800 153px,#998e00 155px,#997c00 248px)"></div>
<div class="ci" style="top:250px;background:linear-gradient(90deg,#d3ff0d 0px,#fffd04 115px,#ffed00 154px,#e6d500 155px,#a69a00 156px,#998e00 157px,#997b00 248px)"></div>
<div class="ci" style="top:251px;background:linear-gradient(90deg,#d3ff0d 0px,#fffc04 115px,#ffed00 155px,#f9e600 156px,#998d00 158px,#997b00 248px)"></div>
<div class="ci" style="top:252px;background:linear-gradient(90deg,#d3ff0e 0px,#fffc04 114px,#ffec00 157px,#e6d400 158px,#a69900 159px,#998d00 160px,#997b00 248px)"></div>
<div class="ci" style="top:253px;background:linear-gradient(90deg,#d4ff0e 0px,#fffc04 113px,#ffeb00 158px,#f9e500 159px,#c6b500 160px,#998c00 161px,#997b00 248px)"></div>
<div class="ci" style="top:254px;background:linear-gradient(90deg,#d4ff0e 0px,#fffc04 113px,#ffea00 160px,#e6d200 161px,#a69800 162px,#998c00 163px,#997b00 248px)"></div>
<div class="ci" style="top:255px;background:linear-gradient(90deg,#d4ff0e 0px,#fffc04 112px,#ffe900 161px,#f9e300 162px,#998b00 164px,#997b00 248px)"></div>
<div class="ci" style="top:256px;background:linear-gradient(90deg,#d4ff0e 0px,#fffc05 111px,#ffe800 163px,#e6d100 164px,#a69600 165px,#998b00 166px,#997b00 248px)"></div>
<div class="ci" style="top:257px;background:linear-gradient(90deg,#d5ff0e 0px,#fffd05 110px,#ffe800 164px,#f9e100 165px,#998a00 167px,#997a00 248px)"></div>
<div class="ci" style="top:258px;background:linear-gradient(90deg,#d5ff0e 0px,#fffc05 110px,#ffe700 166px,#e6cf00 167px,#a69500 168px,#998a00 169px,#997a00 248px)"></div>
<div class="ci" style="top:259px;background:linear-gradient(90deg,#d5ff0e 0px,#fffc05 109px,#ffe600 167px,#f9e000 168px,#998900 170px,#997a00 248px)"></div>
<div class="ci" style="top:260px;background:linear-gradient(90deg,#d6ff0f 0px,#fffc06 108px,#ffe500 169px,#e6ce00 170px,#a69400 171px,#998900 172px,#997a00 248px)"></div>
<div class="ci" style="top:261px;background:linear-gradient(90deg,#d6ff0f 0px,#fffc06 108px,#ffe400 170px,#f9de00 171px,#998800 173px,#997a00 248px)"></div>
<div class="ci" style="top:262px;background:linear-gradient(90deg,#d6ff0f 0px,#fffc06 107px,#ffe300 172px,#e6cc00 173px,#a69300 174px,#998800 175px,#997a00 248px)"></div>
<div class="ci" style="top:263px;background:linear-gradient(90deg,#d6ff0f 0px,#fffc06 106px,#ffe300 173px,#f9dd00 174px,#998700 176px,#997a00 248px)"></div>
<div class="ci" style="top:264px;background:linear-gradient(90deg,#d7ff0f 0px,#fffd06 105px,#ffe200 175px,#e6cb00 176px,#a69200 177px,#998700 178px,#997900 248px)"></div>
<div class="ci" style="top:265px;background:linear-gradient(90deg,#d7ff0f 0px,#fffc06 105px,#ffe100 176px,#f9db00 177px,#998600 179px,#997900 248px)"></div>
<div class="ci" style="top:266px;background:linear-gradient(90deg,#d7ff0f 0px,#fffc07 104px,#ffe000 178px,#e6ca00 179px,#a69100 180px,#998600 181px,#997900 248px)"></div>
<div class="ci" style="top:267px;background:linear-gradient(90deg,#d7ff10 0px,#fffc07 103px,#ffe000 179px,#f9da00 180px,#998600 182px,#997900 248px)"></div>
<div class="ci" style="top:268px;background:linear-gradient(90deg,#d8ff10 0px,#fffc07 103px,#ffdf00 181px,#e6c800 182px,#a69000 183px,#998500 184px,#997900 248px)"></div>
<div class="ci" style="top:269px;background:linear-gradient(90deg,#d8ff10 0px,#fffc07 102px,#ffde00 182px,#f9d800 183px,#998500 185px,#997900 248px)"></div>
<div class="ci" style="top:270px;background:linear-gradient(90deg,#d8ff10 0px,#fffc07 101px,#ffdd00 184px,#e6c700 185px,#a68f00 186px,#998400 187px,#997900 248px)"></div>
<div class="ci" style="top:271px;background:linear-gradient(90deg,#d8ff10 0px,#fffc08 100px,#ffdd00 185px,#f9d700 186px,#c6aa00 187px,#998400 188px,#997800 248px)"></div>
<div class="ci" style="top:272px;background:linear-gradient(90deg,#d9ff10 0px,#fffc08 100px,#ffdc00 187px,#e6c500 188px,#a68e00 189px,#998300 190px,#997800 248px)"></div>
<div class="ci" style="top:273px;background:linear-gradient(90deg,#d9ff10 0px,#fffc08 99px,#ffdb00 188px,#f9d500 189px,#998300 191px,#997800 248px)"></div>
<div class="ci" style="top:274px;background:linear-gradient(90deg,#d9ff11 0px,#fffc08 98px,#ffda00 190px,#e6c400 191px,#a68d00 192px,#998200 193px,#997800 248px)"></div>
<div class="ci" style="top:275px;background:linear-gradient(90deg,#d9ff11 0px,#fffd09 97px,#ffd900 191px,#f9d400 192px,#998200 194px,#997800 248px)"></div>
<div class="ci" style="top:276px;background:linear-gradient(90deg,#daff11 0px,#fffc09 97px,#ffd900 193px,#e6c300 194px,#a68c00 195px,#998100 196px,#997800 248px)"></div>
<div class="ci" style="top:277px;background:linear-gradient(90deg,#daff11 0px,#fffc09 96px,#ffd800 194px,#f9d200 195px,#998100 197px,#997800 248px)"></div>
<div class="ci" style="top:278px;background:linear-gradient(90deg,#daff11 0px,#fffc09 95px,#ffd700 196px,#e6c100 197px,#a68b00 198px,#998000 199px,#997700 248px)"></div>
<div class="ci" style="top:279px;background:linear-gradient(90deg,#dbff11 0px,#fffc09 95px,#ffd600 197px,#f9d100 198px,#998000 200px,#997700 248px)"></div>
<div class="ci" style="top:280px;background:linear-gradient(90deg,#dbff11 0px,#fffc09 94px,#ffd600 199px,#e6c000 200px,#a68a00 201px,#998000 202px,#997700 248px)"></div>
<div class="ci" style="top:281px;background:linear-gradient(90deg,#dbff12 0px,#fffc0a 93px,#ffd500 200px,#f9cf00 201px,#997f00 203px,#997700 248px)"></div>
<div class="ci" style="top:282px;background:linear-gradient(90deg,#dbff12 0px,#fffd0a 92px,#ffd400 202px,#e6bf00 203px,#a68900 204px,#997f00 205px,#997700 248px)"></div>
<div class="ci" style="top:283px;background:linear-gradient(90deg,#dcff12 0px,#fffc0a 92px,#ffd400 203px,#f9ce00 204px,#997e00 206px,#997700 248px)"></div>
<div class="ci" style="top:284px;background:linear-gradient(90deg,#dcff12 0px,#fffc0a 91px,#ffd300 205px,#e6bd00 206px,#a68900 207px,#997e00 208px,#997700 248px)"></div>
<div class="ci" style="top:285px;background:linear-gradient(90deg,#dcff12 0px,#fffc0b 90px,#ffd200 206px,#f9cd00 207px,#997d00 209px,#997600 248px)"></div>
<div class="ci" style="top:286px;background:linear-gradient(90deg,#dcff12 0px,#fffc0b 90px,#ffd100 208px,#e6bc00 209px,#a68800 210px,#997d00 211px,#997600 248px)"></div>
<div class="ci" style="top:287px;background:linear-gradient(90deg,#ddff12 0px,#fffc0b 89px,#ffd100 209px,#f9cb00 210px,#997d00 212px,#997600 248px)"></div>
<div class="ci" style="top:288px;background:linear-gradient(90deg,#ddff13 0px,#fffc0b 88px,#ffd000 211px,#e6bb00 212px,#a68700 213px,#997c00 214px,#997600 248px)"></div>
<div class="ci" style="top:289px;background:linear-gradient(90deg,#ddff13 0px,#fffc0b 87px,#ffcf00 212px,#f9ca00 213px,#997c00 215px,#997600 248px)"></div>
<div class="ci" style="top:290px;background:linear-gradient(90deg,#deff13 0px,#fffc0b 87px,#ffce00 214px,#e6b900 215px,#a68600 216px,#997b00 217px,#997600 248px)"></div>
<div class="ci" style="top:291px;background:linear-gradient(90deg,#deff13 0px,#fffc0c 86px,#ffce00 215px,#f9c800 216px,#997b00 218px,#997600 248px)"></div>
<div class="ci" style="top:292px;background:linear-gradient(90deg,#deff13 0px,#fffc0c 85px,#ffcd00 217px,#e6b800 218px,#a68500 219px,#997a00 220px,#997500 248px)"></div>
<div class="ci" style="top:293px;background:linear-gradient(90deg,#deff13 0px,#fffc0c 85px,#ffcc00 218px,#f9c700 219px,#997a00 221px,#997500 248px)"></div>
<div class="ci" style="top:294px;background:linear-gradient(90deg,#dfff13 0px,#fffc0c 84px,#ffcc00 220px,#e6b700 221px,#a68400 222px,#997a00 223px,#997500 248px)"></div>
<div class="ci" style="top:295px;background:linear-gradient(90deg,#dfff14 0px,#fffc0d 83px,#ffcb00 221px,#f9c600 222px,#997900 224px,#997500 248px)"></div>
<div class="ci" style="top:296px;background:linear-gradient(90deg,#dfff14 0px,#fffc0d 82px,#ffca00 223px,#e6b600 224px,#a68300 225px,#997900 226px,#997500 248px)"></div>
<div class="ci" style="top:297px;background:linear-gradient(90deg,#e0ff14 0px,#fffc0d 82px,#ffca00 224px,#f9c400 225px,#997800 227px,#997500 248px)"></div>
<div class="ci" style="top:298px;background:linear-gradient(90deg,#e0ff14 0px,#fffc0d 81px,#ffc900 226px,#e6b400 227px,#a68200 228px,#997800 229px,#997500 248px)"></div>
<div class="ci" style="top:299px;background:linear-gradient(90deg,#e0ff14 0px,#fffc0d 80px,#ffc800 227px,#f9c300 228px,#997800 230px,#997400 248px)"></div>
<div class="ci" style="top:300px;background:linear-gradient(90deg,#e0ff14 0px,#fffc0e 79px,#ffc700 229px,#e6b300 230px,#a68100 231px,#997700 232px,#997400 248px)"></div>
<div class="ci" style="top:301px;background:linear-gradient(90deg,#e1ff15 0px,#fffc0e 79px,#ffc700 230px,#f9c200 231px,#997700 233px,#997400 248px)"></div>
<div class="ci" style="top:302px;background:linear-gradient(90deg,#e1ff15 0px,#fffc0e 78px,#ffc600 232px,#e6b200 233px,#a68000 234px,#997600 235px,#997400 248px)"></div>
<div class="ci" style="top:303px;background:linear-gradient(90deg,#e1ff15 0px,#fffc0e 77px,#ffc600 232px,#f9c000 234px,#997600 236px,#997400 248px)"></div>
<div class="ci" style="top:304px;background:linear-gradient(90deg,#e1ff15 0px,#fffc0e 77px,#ffc600 231px,#ffc500 235px,#e6b100 236px,#a67f00 237px,#997600 238px,#997400 248px)"></div>
<div class="ci" style="top:305px;background:linear-gradient(90deg,#e2ff15 0px,#fffc0f 76px,#ffc701 227px,#ffc400 236px,#f9bf00 237px,#997500 239px,#997400 248px)"></div>
<div class="ci" style="top:306px;background:linear-gradient(90deg,#e2ff15 0px,#fffc0f 75px,#ffc500 233px,#ffc300 238px,#e6b000 239px,#a67f00 240px,#997500 241px,#997400 248px)"></div>
<div class="ci" style="top:307px;background:linear-gradient(90deg,#e2ff15 0px,#fffc0f 74px,#ffc501 232px,#ffc300 239px,#f9be00 240px,#997400 242px,#997300 248px)"></div>
<div class="ci" style="top:308px;background:linear-gradient(90deg,#e3ff16 0px,#fffc0f 74px,#ffc601 228px,#ffc200 241px,#e6ae00 242px,#a67e00 243px,#997400 244px,#997300 248px)"></div>
<div class="ci" style="top:309px;background:linear-gradient(90deg,#e3ff16 0px,#fffc0f 73px,#ffc601 227px,#ffc200 242px,#f9bc00 243px,#997400 245px,#997300 248px)"></div>
<div class="ci" style="top:310px;background:linear-gradient(90deg,#e3ff16 0px,#fffc10 72px,#ffc401 233px,#ffc100 244px,#e6ad00 245px,#a67d00 246px,#997300 247px,#997300 248px)"></div>
<div class="ci" style="top:311px;background:linear-gradient(90deg,#e3ff16 0px,#fffc10 72px,#ffc702 222px,#ffc000 245px,#f9bb00 246px,#997300 248px)"></div>
<div class="ci" style="top:312px;background:linear-gradient(90deg,#e4ff16 0px,#fffc10 72px,#ffc802 218px,#ffbf00 247px,#e6ac00 248px)"></div>
<div class="ci" style="top:313px;background:linear-gradient(90deg,#e4ff16 0px,#fffc10 70px,#ffc602 224px,#ffbf00 248px)"></div>
<div class="ci" style="top:314px;background:linear-gradient(90deg,#e4ff16 0px,#fffc11 69px,#ffc602 223px,#ffbf00 248px)"></div>
<div class="ci" style="top:315px;background:linear-gradient(90deg,#e5ff17 0px,#fffc11 69px,#ffc703 219px,#ffbe00 248px)"></div>
<div class="ci" style="top:316px;background:linear-gradient(90deg,#e5ff17 0px,#fffc11 68px,#ffc703 218px,#ffbe00 248px)"></div>
<div class="ci" style="top:317px;background:linear-gradient(90deg,#e5ff17 0px,#fffc11 67px,#ffc502 224px,#ffbe01 248px)"></div>
<div class="ci" style="top:318px;background:linear-gradient(90deg,#e5ff17 0px,#fffc11 66px,#ffc603 220px,#ffbe01 248px)"></div>
<div class="ci" style="top:319px;background:linear-gradient(90deg,#e6ff17 0px,#fffc12 66px,#ffc603 219px,#ffbe01 248px)"></div>
<div class="ci" style="top:320px;background:linear-gradient(90deg,#e6ff17 0px,#fffc12 65px,#ffc703 215px,#ffbd01 248px)"></div>
<div class="ci" style="top:321px;background:linear-gradient(90deg,#e6ff18 0px,#fffc12 64px,#ffc503 221px,#ffbd01 248px)"></div>
<div class="ci" style="top:322px;background:linear-gradient(90deg,#e7ff18 0px,#fffc12 64px,#ffc704 213px,#ffbd01 248px)"></div>
<div class="ci" style="top:323px;background:linear-gradient(90deg,#e7ff18 0px,#fffc12 64px,#ffc804 209px,#ffbd01 248px)"></div>
<div class="ci" style="top:324px;background:linear-gradient(90deg,#e7ff18 0px,#fffc13 62px,#ffc604 215px,#ffbc01 248px)"></div>
<div class="ci" style="top:325px;background:linear-gradient(90deg,#e7ff18 0px,#fffc13 61px,#ffc504 217px,#ffbc01 248px)"></div>
<div class="ci" style="top:326px;background:linear-gradient(90deg,#e8ff18 0px,#fffc13 61px,#ffc705 210px,#ffbc02 248px)"></div>
<div class="ci" style="top:327px;background:linear-gradient(90deg,#e8ff18 0px,#fffc13 60px,#ffc504 216px,#ffbc02 248px)"></div>
<div class="ci" style="top:328px;background:linear-gradient(90deg,#e8ff19 0px,#fffc13 59px,#ffc605 212px,#ffbc02 248px)"></div>
<div class="ci" style="top:329px;background:linear-gradient(90deg,#e9ff19 0px,#fffc14 59px,#ffc605 211px,#ffbb02 248px)"></div>
<div class="ci" style="top:330px;background:linear-gradient(90deg,#e9ff19 0px,#fffc14 59px,#ffc906 200px,#ffbb02 248px)"></div>
<div class="ci" style="top:331px;background:linear-gradient(90deg,#e9ff19 0px,#fffc14 57px,#ffc505 212px,#ffbb02 248px)"></div>
<div class="ci" style="top:332px;background:linear-gradient(90deg,#e9ff19 0px,#fffc14 56px,#ffc505 212px,#ffbb02 248px)"></div>
<div class="ci" style="top:333px;background:linear-gradient(90deg,#eaff19 0px,#fffc14 56px,#ffc605 208px,#ffba02 248px)"></div>
</div>
<svg style="left:0;top:0" width="10" height="10"><rect x="1427.7" y="449.8" width="15" height="15" fill="none" stroke="#000" stroke-width="2"/><rect x="1503.3" y="425.5" width="15.4" height="15.4" fill="none" stroke="#fff" stroke-width="1.8"/><rect x="1485.0" y="430.9" width="15.4" height="15.4" fill="none" stroke="#fff" stroke-width="1.8"/><rect x="1370.8" y="491.3" width="15.4" height="15.4" fill="none" stroke="#fff" stroke-width="1.8"/><rect x="1449.9" y="383.6" width="15.4" height="15.4" fill="none" stroke="#fff" stroke-width="1.8"/><rect x="1387.1" y="500.1" width="15.4" height="15.4" fill="none" stroke="#fff" stroke-width="1.8"/><rect x="1382.2" y="427.3" width="15.4" height="15.4" fill="none" stroke="#fff" stroke-width="1.8"/><rect x="1601.7" y="397.5" width="15.4" height="15.4" fill="none" stroke="#fff" stroke-width="1.8"/><rect x="1341.9" y="541.9" width="15.4" height="15.4" fill="none" stroke="#fff" stroke-width="1.8"/><rect x="1557.8" y="460.2" width="15.4" height="15.4" fill="none" stroke="#fff" stroke-width="1.8"/><rect x="1406.7" y="520.7" width="15.4" height="15.4" fill="none" stroke="#fff" stroke-width="1.8"/><rect x="1481.9" y="339.8" width="15.4" height="15.4" fill="none" stroke="#fff" stroke-width="1.8"/><rect x="1568.6" y="374.9" width="15.4" height="15.4" fill="none" stroke="#fff" stroke-width="1.8"/><rect x="1320.0" y="575.4" width="15.4" height="15.4" fill="none" stroke="#fff" stroke-width="1.8"/><rect x="1419.5" y="341.3" width="15.4" height="15.4" fill="none" stroke="#fff" stroke-width="1.8"/><rect x="1623.3" y="457.1" width="15.4" height="15.4" fill="none" stroke="#fff" stroke-width="1.8"/><rect x="1545.1" y="352.0" width="15.4" height="15.4" fill="none" stroke="#fff" stroke-width="1.8"/><rect x="1479.9" y="504.1" width="15.4" height="15.4" fill="none" stroke="#fff" stroke-width="1.8"/><rect x="1333.4" y="487.9" width="15.4" height="15.4" fill="none" stroke="#fff" stroke-width="1.8"/><rect x="1714.3" y="448.2" width="15.4" height="15.4" fill="none" stroke="#fff" stroke-width="1.8"/><rect x="1414.8" y="268.3" width="15.4" height="15.4" fill="none" stroke="#fff" stroke-width="1.8"/><rect x="1282.6" y="627.8" width="15.4" height="15.4" fill="none" stroke="#fff" stroke-width="1.8"/><rect x="1349.6" y="449.4" width="15.4" height="15.4" fill="none" stroke="#fff" stroke-width="1.8"/><rect x="1432.9" y="565.8" width="15.4" height="15.4" fill="none" stroke="#fff" stroke-width="1.8"/><rect x="1519.9" y="331.8" width="15.4" height="15.4" fill="none" stroke="#fff" stroke-width="1.8"/><circle cx="1529.0" cy="339.5" r="5.1" fill="#ffff00" stroke="#000" stroke-width="1.3"/><circle cx="1437.9" cy="575.4" r="5.1" fill="#ff00ff" stroke="#000" stroke-width="1.3"/><circle cx="1352.7" cy="459.0" r="5.1" fill="#00ffff" stroke="#000" stroke-width="1.3"/><circle cx="1284.1" cy="640.9" r="5.1" fill="#0000ff" stroke="#000" stroke-width="1.3"/><circle cx="1420.9" cy="274.3" r="5.1" fill="#00ff00" stroke="#000" stroke-width="1.3"/><circle cx="1723.5" cy="455.9" r="5.1" fill="#ff0000" stroke="#000" stroke-width="1.3"/><circle cx="1334.2" cy="506.0" r="5.1" fill="#1890a8" stroke="#000" stroke-width="1.3"/><circle cx="1484.9" cy="516.0" r="5.1" fill="#c058a0" stroke="#000" stroke-width="1.3"/><circle cx="1554.3" cy="360.0" r="5.1" fill="#e0c030" stroke="#000" stroke-width="1.3"/><circle cx="1637.9" cy="466.7" r="5.1" fill="#b04048" stroke="#000" stroke-width="1.3"/><circle cx="1423.7" cy="352.0" r="5.1" fill="#4c8c50" stroke="#000" stroke-width="1.3"/><circle cx="1318.4" cy="592.4" r="5.1" fill="#384898" stroke="#000" stroke-width="1.3"/><circle cx="1580.7" cy="383.2" r="5.1" fill="#e0a040" stroke="#000" stroke-width="1.3"/><circle cx="1490.5" cy="347.5" r="5.1" fill="#a0b050" stroke="#000" stroke-width="1.3"/><circle cx="1408.2" cy="538.0" r="5.1" fill="#5c4070" stroke="#000" stroke-width="1.3"/><circle cx="1564.7" cy="471.3" r="5.1" fill="#c06070" stroke="#000" stroke-width="1.3"/><circle cx="1341.9" cy="555.4" r="5.1" fill="#4c5a9c" stroke="#000" stroke-width="1.3"/><circle cx="1615.9" cy="406.1" r="5.1" fill="#d88040" stroke="#000" stroke-width="1.3"/><circle cx="1385.2" cy="440.5" r="5.1" fill="#6cb0a0" stroke="#000" stroke-width="1.3"/><circle cx="1388.9" cy="515.2" r="5.1" fill="#8682b0" stroke="#000" stroke-width="1.3"/><circle cx="1458.1" cy="393.6" r="5.1" fill="#5a6a48" stroke="#000" stroke-width="1.3"/><circle cx="1372.6" cy="506.9" r="5.1" fill="#6a7c98" stroke="#000" stroke-width="1.3"/><circle cx="1492.0" cy="443.4" r="5.1" fill="#c09484" stroke="#000" stroke-width="1.3"/><circle cx="1514.0" cy="435.9" r="5.1" fill="#6a5040" stroke="#000" stroke-width="1.3"/><circle cx="1432.4" cy="458.3" r="5.1" fill="#f0f0f0" stroke="#000" stroke-width="1.3"/><circle cx="1430.9" cy="460.3" r="5.1" fill="#d0d0d0" stroke="#000" stroke-width="1.3"/><circle cx="1430.6" cy="461.2" r="5.1" fill="#bbbbbb" stroke="#000" stroke-width="1.3"/><circle cx="1430.3" cy="462.0" r="5.1" fill="#aaaaaa" stroke="#000" stroke-width="1.3"/><circle cx="1430.1" cy="462.8" r="5.1" fill="#999999" stroke="#000" stroke-width="1.3"/><circle cx="1392.0" cy="502.6" r="5.5" fill="#000"/><rect x="1758" y="221" width="15" height="15" fill="none" stroke="#fff" stroke-width="1.8"/><circle cx="1773" cy="228.3" r="5" fill="#ffff00" stroke="#000" stroke-width="1.5"/></svg>
<div class="a" style="left:1604px;top:640.5px;width:291px;height:31px;background:#303030"></div>
<div class="t" style="left:1608.0px;top:645.8px;font-size:24.0px;line-height:24.0px;color:#f4f4f4;transform:scaleX(0.9399);">RGB Triplet: 255, 255, 0</div>
<div class="a" style="left:374px;top:733.5px;width:1540px;height:259px;background:#000"></div>
<div class="a" style="left:376px;top:735px;width:1533px;height:16.75px;background:#303030"></div>
<div class="a" style="left:376px;top:751.75px;width:1533px;height:15px;background:#161616"></div>
<div class="a" style="left:376px;top:766.75px;width:1533px;height:29.66px;background:#3f3f3f"></div>
<div class="a" style="left:376px;top:796.11px;width:1533px;height:29.66px;background:#808080"></div>
<div class="a" style="left:376px;top:825.47px;width:1533px;height:29.66px;background:#3f3f3f"></div>
<div class="a" style="left:376px;top:854.83px;width:1533px;height:29.66px;background:#808080"></div>
<div class="a" style="left:376px;top:884.19px;width:1533px;height:29.66px;background:#3f3f3f"></div>
<div class="a" style="left:376px;top:913.55px;width:1533px;height:29.66px;background:#808080"></div>
<div class="a" style="left:376px;top:942.91px;width:1533px;height:29.66px;background:#3f3f3f"></div>
<div class="a" style="left:376px;top:972.8px;width:1533px;height:19.2px;background:#5c5c5c;border-top:1px solid #666"></div>
<div class="a" style="left:400.8px;top:974.6px;width:664px;height:15.4px;border-radius:8px;background:#444"></div>
<div class="a" style="left:378px;top:975px;width:18.3px;height:15px;border-radius:3px;background:#6c6c6c"></div>
<svg style="left:383px;top:977.5px" width="7" height="10"><path d="M7 0L0 5L7 10Z" fill="#363636"/></svg>
<div class="a" style="left:1888.6px;top:975px;width:17.4px;height:15px;border-radius:3px;background:#6c6c6c"></div>
<svg style="left:1894px;top:977.5px" width="7" height="10"><path d="M0 0L7 5L0 10Z" fill="#363636"/></svg>
<div class="a" style="left:0;top:992px;width:1920px;height:6px;background:#2c2c2c"></div>
<div class="t" style="left:392.8px;top:773.3px;font-size:19.0px;line-height:19.0px;color:#f2f2f2;font-weight:bold;transform:scaleX(1.1235);">x: CIE31</div>
<div class="t" style="left:392.8px;top:802.6px;font-size:19.0px;line-height:19.0px;color:#f2f2f2;font-weight:bold;transform:scaleX(1.1235);">y: CIE31</div>
<div class="t" style="left:392.8px;top:832.0px;font-size:19.0px;line-height:19.0px;color:#f2f2f2;font-weight:bold;transform:scaleX(1.1235);">Y</div>
<div class="t" style="left:392.8px;top:861.4px;font-size:19.0px;line-height:19.0px;color:#f2f2f2;font-weight:bold;transform:scaleX(1.1235);">Target x:CIE31</div>
<div class="t" style="left:392.8px;top:890.7px;font-size:19.0px;line-height:19.0px;color:#f2f2f2;font-weight:bold;transform:scaleX(1.1235);">Target y:CIE31</div>
<div class="t" style="left:392.8px;top:920.1px;font-size:19.0px;line-height:19.0px;color:#f2f2f2;font-weight:bold;transform:scaleX(1.1235);">Target Y</div>
<div class="t" style="left:392.8px;top:949.4px;font-size:19.0px;line-height:19.0px;color:#f2f2f2;font-weight:bold;transform:scaleX(1.1235);">&#916;E 2000</div>
<div class="t" style="left:582.9px;top:743.6px;font-size:17.5px;line-height:17.5px;color:#f4f4f4;transform:scaleX(1.1982);">White</div>
<div class="t" style="left:565.0px;top:773.0px;font-size:19.3px;line-height:19.3px;color:#f4f4f4;transform:scaleX(1.0932);">0,3101</div>
<div class="t" style="left:565.0px;top:802.4px;font-size:19.3px;line-height:19.3px;color:#f4f4f4;transform:scaleX(1.0932);">0,3268</div>
<div class="t" style="left:565.0px;top:831.8px;font-size:19.3px;line-height:19.3px;color:#f4f4f4;transform:scaleX(1.0932);">553,9966</div>
<div class="t" style="left:565.0px;top:861.1px;font-size:19.3px;line-height:19.3px;color:#f4f4f4;transform:scaleX(1.0932);">0,3127</div>
<div class="t" style="left:565.0px;top:890.5px;font-size:19.3px;line-height:19.3px;color:#f4f4f4;transform:scaleX(1.0932);">0,3290</div>
<div class="t" style="left:565.0px;top:919.8px;font-size:19.3px;line-height:19.3px;color:#f4f4f4;transform:scaleX(1.0932);">553,9966</div>
<div class="t" style="left:565.0px;top:949.2px;font-size:19.3px;line-height:19.3px;color:#f4f4f4;transform:scaleX(1.0932);">1,3553</div>
<div class="t" style="left:675.1px;top:743.6px;font-size:17.5px;line-height:17.5px;color:#f4f4f4;transform:scaleX(1.1100);">Gray 80</div>
<div class="t" style="left:665.3px;top:773.0px;font-size:19.3px;line-height:19.3px;color:#f4f4f4;transform:scaleX(1.0932);">0,3084</div>
<div class="t" style="left:665.3px;top:802.4px;font-size:19.3px;line-height:19.3px;color:#f4f4f4;transform:scaleX(1.0932);">0,3238</div>
<div class="t" style="left:665.3px;top:831.8px;font-size:19.3px;line-height:19.3px;color:#f4f4f4;transform:scaleX(1.0932);">438,0289</div>
<div class="t" style="left:665.3px;top:861.1px;font-size:19.3px;line-height:19.3px;color:#f4f4f4;transform:scaleX(1.0932);">0,3127</div>
<div class="t" style="left:665.3px;top:890.5px;font-size:19.3px;line-height:19.3px;color:#f4f4f4;transform:scaleX(1.0932);">0,3290</div>
<div class="t" style="left:665.3px;top:919.8px;font-size:19.3px;line-height:19.3px;color:#f4f4f4;transform:scaleX(1.0932);">438,3763</div>
<div class="t" style="left:665.3px;top:949.2px;font-size:19.3px;line-height:19.3px;color:#f4f4f4;transform:scaleX(1.0932);">2,4990</div>
<div class="t" style="left:775.5px;top:743.6px;font-size:17.5px;line-height:17.5px;color:#f4f4f4;transform:scaleX(1.1100);">Gray 65</div>
<div class="t" style="left:766.1px;top:773.0px;font-size:19.3px;line-height:19.3px;color:#f4f4f4;transform:scaleX(1.0932);">0,3080</div>
<div class="t" style="left:766.1px;top:802.4px;font-size:19.3px;line-height:19.3px;color:#f4f4f4;transform:scaleX(1.0932);">0,3225</div>
<div class="t" style="left:766.1px;top:831.8px;font-size:19.3px;line-height:19.3px;color:#f4f4f4;transform:scaleX(1.0932);">352,4422</div>
<div class="t" style="left:766.1px;top:861.1px;font-size:19.3px;line-height:19.3px;color:#f4f4f4;transform:scaleX(1.0932);">0,3127</div>
<div class="t" style="left:766.1px;top:890.5px;font-size:19.3px;line-height:19.3px;color:#f4f4f4;transform:scaleX(1.0932);">0,3290</div>
<div class="t" style="left:766.1px;top:919.8px;font-size:19.3px;line-height:19.3px;color:#f4f4f4;transform:scaleX(1.0932);">353,2265</div>
<div class="t" style="left:766.1px;top:949.2px;font-size:19.3px;line-height:19.3px;color:#f4f4f4;transform:scaleX(1.0932);">2,8944</div>
<div class="t" style="left:875.8px;top:743.6px;font-size:17.5px;line-height:17.5px;color:#f4f4f4;transform:scaleX(1.1100);">Gray 50</div>
<div class="t" style="left:866.4px;top:773.0px;font-size:19.3px;line-height:19.3px;color:#f4f4f4;transform:scaleX(1.0932);">0,3077</div>
<div class="t" style="left:866.4px;top:802.4px;font-size:19.3px;line-height:19.3px;color:#f4f4f4;transform:scaleX(1.0932);">0,3213</div>
<div class="t" style="left:866.4px;top:831.8px;font-size:19.3px;line-height:19.3px;color:#f4f4f4;transform:scaleX(1.0932);">270,7715</div>
<div class="t" style="left:866.4px;top:861.1px;font-size:19.3px;line-height:19.3px;color:#f4f4f4;transform:scaleX(1.0932);">0,3127</div>
<div class="t" style="left:866.4px;top:890.5px;font-size:19.3px;line-height:19.3px;color:#f4f4f4;transform:scaleX(1.0932);">0,3290</div>
<div class="t" style="left:866.4px;top:919.8px;font-size:19.3px;line-height:19.3px;color:#f4f4f4;transform:scaleX(1.0932);">272,0239</div>
<div class="t" style="left:866.4px;top:949.2px;font-size:19.3px;line-height:19.3px;color:#f4f4f4;transform:scaleX(1.0932);">3,1739</div>
<div class="t" style="left:976.2px;top:743.6px;font-size:17.5px;line-height:17.5px;color:#f4f4f4;transform:scaleX(1.1100);">Gray 35</div>
<div class="t" style="left:967.2px;top:773.0px;font-size:19.3px;line-height:19.3px;color:#f4f4f4;transform:scaleX(1.0932);">0,3075</div>
<div class="t" style="left:967.2px;top:802.4px;font-size:19.3px;line-height:19.3px;color:#f4f4f4;transform:scaleX(1.0932);">0,3201</div>
<div class="t" style="left:967.2px;top:831.8px;font-size:19.3px;line-height:19.3px;color:#f4f4f4;transform:scaleX(1.0932);">185,8793</div>
<div class="t" style="left:967.2px;top:861.1px;font-size:19.3px;line-height:19.3px;color:#f4f4f4;transform:scaleX(1.0932);">0,3127</div>
<div class="t" style="left:967.2px;top:890.5px;font-size:19.3px;line-height:19.3px;color:#f4f4f4;transform:scaleX(1.0932);">0,3290</div>
<div class="t" style="left:967.2px;top:919.8px;font-size:19.3px;line-height:19.3px;color:#f4f4f4;transform:scaleX(1.0932);">189,4194</div>
<div class="t" style="left:967.2px;top:949.2px;font-size:19.3px;line-height:19.3px;color:#f4f4f4;transform:scaleX(1.0932);">3,3599</div>
<div class="t" style="left:1076.0px;top:743.6px;font-size:17.5px;line-height:17.5px;color:#f4f4f4;transform:scaleX(1.0843);">Black</div>
<div class="t" style="left:1067.1px;top:773.0px;font-size:19.3px;line-height:19.3px;color:#f4f4f4;transform:scaleX(1.0932);">0,2647</div>
<div class="t" style="left:1067.1px;top:802.4px;font-size:19.3px;line-height:19.3px;color:#f4f4f4;transform:scaleX(1.0932);">0,2604</div>
<div class="t" style="left:1067.1px;top:831.8px;font-size:19.3px;line-height:19.3px;color:#f4f4f4;transform:scaleX(1.0932);">0,2894</div>
<div class="t" style="left:1067.1px;top:861.1px;font-size:19.3px;line-height:19.3px;color:#f4f4f4;transform:scaleX(1.0932);">0,3127</div>
<div class="t" style="left:1067.1px;top:890.5px;font-size:19.3px;line-height:19.3px;color:#f4f4f4;transform:scaleX(1.0932);">0,3290</div>
<div class="t" style="left:1067.1px;top:919.8px;font-size:19.3px;line-height:19.3px;color:#f4f4f4;transform:scaleX(1.0932);">0,0000</div>
<div class="t" style="left:1067.1px;top:949.2px;font-size:19.3px;line-height:19.3px;color:#f4f4f4;transform:scaleX(1.0932);">0,6409</div>
<div class="t" style="left:1143.0px;top:743.6px;font-size:17.5px;line-height:17.5px;color:#f4f4f4;transform:scaleX(1.1113);">Dark Skin</div>
<div class="t" style="left:1143.3px;top:773.0px;font-size:19.3px;line-height:19.3px;color:#f4f4f4;transform:scaleX(1.0932);">0,4029</div>
<div class="t" style="left:1143.3px;top:802.4px;font-size:19.3px;line-height:19.3px;color:#f4f4f4;transform:scaleX(1.0932);">0,3603</div>
<div class="t" style="left:1143.3px;top:831.8px;font-size:19.3px;line-height:19.3px;color:#f4f4f4;transform:scaleX(1.0932);">54,1058</div>
<div class="t" style="left:1143.3px;top:861.1px;font-size:19.3px;line-height:19.3px;color:#f4f4f4;transform:scaleX(1.0932);">0,4003</div>
<div class="t" style="left:1143.3px;top:890.5px;font-size:19.3px;line-height:19.3px;color:#f4f4f4;transform:scaleX(1.0932);">0,3642</div>
<div class="t" style="left:1143.3px;top:919.8px;font-size:19.3px;line-height:19.3px;color:#f4f4f4;transform:scaleX(1.0932);">55,8057</div>
<div class="t" style="left:1143.3px;top:949.2px;font-size:19.3px;line-height:19.3px;color:#f4f4f4;transform:scaleX(1.0932);">1,4317</div>
<div class="t" style="left:1240.8px;top:743.6px;font-size:17.5px;line-height:17.5px;color:#f4f4f4;transform:scaleX(1.1099);">Light Skin</div>
<div class="t" style="left:1238.7px;top:773.0px;font-size:19.3px;line-height:19.3px;color:#f4f4f4;transform:scaleX(1.0932);">0,3779</div>
<div class="t" style="left:1238.7px;top:802.4px;font-size:19.3px;line-height:19.3px;color:#f4f4f4;transform:scaleX(1.0932);">0,3491</div>
<div class="t" style="left:1238.7px;top:831.8px;font-size:19.3px;line-height:19.3px;color:#f4f4f4;transform:scaleX(1.0932);">190,8783</div>
<div class="t" style="left:1238.7px;top:861.1px;font-size:19.3px;line-height:19.3px;color:#f4f4f4;transform:scaleX(1.0932);">0,3795</div>
<div class="t" style="left:1238.7px;top:890.5px;font-size:19.3px;line-height:19.3px;color:#f4f4f4;transform:scaleX(1.0932);">0,3562</div>
<div class="t" style="left:1238.7px;top:919.8px;font-size:19.3px;line-height:19.3px;color:#f4f4f4;transform:scaleX(1.0932);">193,3180</div>
<div class="t" style="left:1238.7px;top:949.2px;font-size:19.3px;line-height:19.3px;color:#f4f4f4;transform:scaleX(1.0932);">2,5899</div>
<div class="t" style="left:1346.5px;top:743.6px;font-size:17.5px;line-height:17.5px;color:#f4f4f4;transform:scaleX(1.0874);">Blue Sky</div>
<div class="t" style="left:1339.0px;top:773.0px;font-size:19.3px;line-height:19.3px;color:#f4f4f4;transform:scaleX(1.0932);">0,2421</div>
<div class="t" style="left:1339.0px;top:802.4px;font-size:19.3px;line-height:19.3px;color:#f4f4f4;transform:scaleX(1.0932);">0,2539</div>
<div class="t" style="left:1339.0px;top:831.8px;font-size:19.3px;line-height:19.3px;color:#f4f4f4;transform:scaleX(1.0932);">100,0681</div>
<div class="t" style="left:1339.0px;top:861.1px;font-size:19.3px;line-height:19.3px;color:#f4f4f4;transform:scaleX(1.0932);">0,2496</div>
<div class="t" style="left:1339.0px;top:890.5px;font-size:19.3px;line-height:19.3px;color:#f4f4f4;transform:scaleX(1.0932);">0,2656</div>
<div class="t" style="left:1339.0px;top:919.8px;font-size:19.3px;line-height:19.3px;color:#f4f4f4;transform:scaleX(1.0932);">103,5884</div>
<div class="t" style="left:1339.0px;top:949.2px;font-size:19.3px;line-height:19.3px;color:#f4f4f4;transform:scaleX(1.0932);">1,7202</div>
<div class="t" style="left:1446.7px;top:743.6px;font-size:17.5px;line-height:17.5px;color:#f4f4f4;transform:scaleX(1.0976);">Foliage</div>
<div class="t" style="left:1439.4px;top:773.0px;font-size:19.3px;line-height:19.3px;color:#f4f4f4;transform:scaleX(1.0932);">0,3393</div>
<div class="t" style="left:1439.4px;top:802.4px;font-size:19.3px;line-height:19.3px;color:#f4f4f4;transform:scaleX(1.0932);">0,4237</div>
<div class="t" style="left:1439.4px;top:831.8px;font-size:19.3px;line-height:19.3px;color:#f4f4f4;transform:scaleX(1.0932);">69,6886</div>
<div class="t" style="left:1439.4px;top:861.1px;font-size:19.3px;line-height:19.3px;color:#f4f4f4;transform:scaleX(1.0932);">0,3395</div>
<div class="t" style="left:1439.4px;top:890.5px;font-size:19.3px;line-height:19.3px;color:#f4f4f4;transform:scaleX(1.0932);">0,4271</div>
<div class="t" style="left:1439.4px;top:919.8px;font-size:19.3px;line-height:19.3px;color:#f4f4f4;transform:scaleX(1.0932);">72,1993</div>
<div class="t" style="left:1439.4px;top:949.2px;font-size:19.3px;line-height:19.3px;color:#f4f4f4;transform:scaleX(1.0932);">0,8412</div>
<div class="t" style="left:1528.6px;top:743.6px;font-size:17.5px;line-height:17.5px;color:#f4f4f4;transform:scaleX(1.1450);">Blue Flower</div>
<div class="t" style="left:1528.0px;top:773.0px;font-size:19.3px;line-height:19.3px;color:#f4f4f4;transform:scaleX(1.0932);">0,2606</div>
<div class="t" style="left:1528.0px;top:802.4px;font-size:19.3px;line-height:19.3px;color:#f4f4f4;transform:scaleX(1.0932);">0,2415</div>
<div class="t" style="left:1528.0px;top:831.8px;font-size:19.3px;line-height:19.3px;color:#f4f4f4;transform:scaleX(1.0932);">125,2893</div>
<div class="t" style="left:1528.0px;top:861.1px;font-size:19.3px;line-height:19.3px;color:#f4f4f4;transform:scaleX(1.0932);">0,2681</div>
<div class="t" style="left:1528.0px;top:890.5px;font-size:19.3px;line-height:19.3px;color:#f4f4f4;transform:scaleX(1.0932);">0,2525</div>
<div class="t" style="left:1528.0px;top:919.8px;font-size:19.3px;line-height:19.3px;color:#f4f4f4;transform:scaleX(1.0932);">129,1836</div>
<div class="t" style="left:1528.0px;top:949.2px;font-size:19.3px;line-height:19.3px;color:#f4f4f4;transform:scaleX(1.0932);">1,9679</div>
<div class="t" style="left:1646.6px;top:743.6px;font-size:17.5px;line-height:17.5px;color:#f4f4f4;transform:scaleX(1.1288);">Bluish Green</div>
<div class="t" style="left:1645.8px;top:773.0px;font-size:19.3px;line-height:19.3px;color:#f4f4f4;transform:scaleX(1.0932);">0,2564</div>
<div class="t" style="left:1645.8px;top:802.4px;font-size:19.3px;line-height:19.3px;color:#f4f4f4;transform:scaleX(1.0932);">0,3535</div>
<div class="t" style="left:1645.8px;top:831.8px;font-size:19.3px;line-height:19.3px;color:#f4f4f4;transform:scaleX(1.0932);">229,5840</div>
<div class="t" style="left:1645.8px;top:861.1px;font-size:19.3px;line-height:19.3px;color:#f4f4f4;transform:scaleX(1.0932);">0,2626</div>
<div class="t" style="left:1645.8px;top:890.5px;font-size:19.3px;line-height:19.3px;color:#f4f4f4;transform:scaleX(1.0932);">0,3616</div>
<div class="t" style="left:1645.8px;top:919.8px;font-size:19.3px;line-height:19.3px;color:#f4f4f4;transform:scaleX(1.0932);">231,9751</div>
<div class="t" style="left:1645.8px;top:949.2px;font-size:19.3px;line-height:19.3px;color:#f4f4f4;transform:scaleX(1.0932);">1,9839</div>
<div class="t" style="left:1784.7px;top:743.6px;font-size:17.5px;line-height:17.5px;color:#f4f4f4;transform:scaleX(1.1135);">Orange</div>
<div class="t" style="left:1772.5px;top:773.0px;font-size:19.3px;line-height:19.3px;color:#f4f4f4;transform:scaleX(1.0932);">0,5188</div>
<div class="t" style="left:1772.5px;top:802.4px;font-size:19.3px;line-height:19.3px;color:#f4f4f4;transform:scaleX(1.0932);">0,4051</div>
<div class="t" style="left:1772.5px;top:831.8px;font-size:19.3px;line-height:19.3px;color:#f4f4f4;transform:scaleX(1.0932);">155,9402</div>
<div class="t" style="left:1772.5px;top:861.1px;font-size:19.3px;line-height:19.3px;color:#f4f4f4;transform:scaleX(1.0932);">0,5122</div>
<div class="t" style="left:1772.5px;top:890.5px;font-size:19.3px;line-height:19.3px;color:#f4f4f4;transform:scaleX(1.0932);">0,4063</div>
<div class="t" style="left:1772.5px;top:919.8px;font-size:19.3px;line-height:19.3px;color:#f4f4f4;transform:scaleX(1.0932);">157,0460</div>
<div class="t" style="left:1772.5px;top:949.2px;font-size:19.3px;line-height:19.3px;color:#f4f4f4;transform:scaleX(1.0932);">0,7695</div>
<div class="a" style="left:1860px;top:735px;width:49px;height:237px;overflow:hidden">
<div class="t" style="left:13.0px;top:7.9px;font-size:17.5px;line-height:17.5px;color:#f4f4f4;transform:scaleX(1.2027);">Purplish Blue</div>
<div class="t" style="left:13.3px;top:38.0px;font-size:19.3px;line-height:19.3px;color:#f4f4f4;transform:scaleX(1.0932);">0,2043</div>
<div class="t" style="left:13.3px;top:67.4px;font-size:19.3px;line-height:19.3px;color:#f4f4f4;transform:scaleX(1.0932);">0,1832</div>
<div class="t" style="left:13.3px;top:96.8px;font-size:19.3px;line-height:19.3px;color:#f4f4f4;transform:scaleX(1.0932);">62,3310</div>
<div class="t" style="left:13.3px;top:126.1px;font-size:19.3px;line-height:19.3px;color:#f4f4f4;transform:scaleX(1.0932);">0,2127</div>
<div class="t" style="left:13.3px;top:155.5px;font-size:19.3px;line-height:19.3px;color:#f4f4f4;transform:scaleX(1.0932);">0,1915</div>
<div class="t" style="left:13.3px;top:184.8px;font-size:19.3px;line-height:19.3px;color:#f4f4f4;transform:scaleX(1.0932);">65,1223</div>
<div class="t" style="left:13.3px;top:214.2px;font-size:19.3px;line-height:19.3px;color:#f4f4f4;transform:scaleX(1.0932);">1,5624</div>
</div>
<div class="a" style="left:1909px;top:735px;width:5px;height:257px;background:#000"></div>
<div class="a" style="left:0;top:997px;width:1920px;height:47px;background:#2c2c2c"></div>
<div class="a" style="left:1.0px;top:997.5px;width:54px;height:47px;border-radius:4px 4px 0 0;background:linear-gradient(#a4a4a4,#8c8c8c 20%,#7a7a7a 60%,#5e5e5e);border:1px solid #707070;border-bottom:none"></div>
<div class="a" style="left:4.7px;top:1001.5px;width:47px;height:26.5px;border-radius:3px;background:#ffffff;box-shadow:inset 1px 1px 2px rgba(0,0,0,0.35)"></div>
<div class="t" style="left:18.0px;top:1032.9px;font-size:9.0px;line-height:9.0px;color:#2a2a2a;font-weight:bold;transform:scaleX(0.8200);">White</div>
<div class="a" style="left:56.9px;top:997.5px;width:54px;height:47px;border-radius:4px 4px 0 0;background:linear-gradient(#a4a4a4,#8c8c8c 20%,#7a7a7a 60%,#5e5e5e);border:1px solid #707070;border-bottom:none"></div>
<div class="a" style="left:60.6px;top:1001.5px;width:47px;height:26.5px;border-radius:3px;background:#e6e6e6;box-shadow:inset 1px 1px 2px rgba(0,0,0,0.35)"></div>
<div class="t" style="left:70.3px;top:1032.9px;font-size:9.0px;line-height:9.0px;color:#2a2a2a;font-weight:bold;transform:scaleX(0.8200);">Gray 80</div>
<div class="a" style="left:112.7px;top:997.5px;width:54px;height:47px;border-radius:4px 4px 0 0;background:linear-gradient(#a4a4a4,#8c8c8c 20%,#7a7a7a 60%,#5e5e5e);border:1px solid #707070;border-bottom:none"></div>
<div class="a" style="left:116.4px;top:1001.5px;width:47px;height:26.5px;border-radius:3px;background:#cfcfcf;box-shadow:inset 1px 1px 2px rgba(0,0,0,0.35)"></div>
<div class="t" style="left:126.2px;top:1032.9px;font-size:9.0px;line-height:9.0px;color:#2a2a2a;font-weight:bold;transform:scaleX(0.8200);">Gray 65</div>
<div class="a" style="left:168.6px;top:997.5px;width:54px;height:47px;border-radius:4px 4px 0 0;background:linear-gradient(#a4a4a4,#8c8c8c 20%,#7a7a7a 60%,#5e5e5e);border:1px solid #707070;border-bottom:none"></div>
<div class="a" style="left:172.3px;top:1001.5px;width:47px;height:26.5px;border-radius:3px;background:#b8b8b8;box-shadow:inset 1px 1px 2px rgba(0,0,0,0.35)"></div>
<div class="t" style="left:182.0px;top:1032.9px;font-size:9.0px;line-height:9.0px;color:#2a2a2a;font-weight:bold;transform:scaleX(0.8200);">Gray 50</div>
<div class="a" style="left:224.4px;top:997.5px;width:54px;height:47px;border-radius:4px 4px 0 0;background:linear-gradient(#a4a4a4,#8c8c8c 20%,#7a7a7a 60%,#5e5e5e);border:1px solid #707070;border-bottom:none"></div>
<div class="a" style="left:228.1px;top:1001.5px;width:47px;height:26.5px;border-radius:3px;background:#a2a2a2;box-shadow:inset 1px 1px 2px rgba(0,0,0,0.35)"></div>
<div class="t" style="left:237.9px;top:1032.9px;font-size:9.0px;line-height:9.0px;color:#2a2a2a;font-weight:bold;transform:scaleX(0.8200);">Gray 35</div>
<div class="a" style="left:280.3px;top:997.5px;width:54px;height:47px;border-radius:4px 4px 0 0;background:linear-gradient(#a4a4a4,#8c8c8c 20%,#7a7a7a 60%,#5e5e5e);border:1px solid #707070;border-bottom:none"></div>
<div class="a" style="left:284.0px;top:1001.5px;width:47px;height:26.5px;border-radius:3px;background:#000000;box-shadow:inset 1px 1px 2px rgba(0,0,0,0.35)"></div>
<div class="t" style="left:297.5px;top:1032.9px;font-size:9.0px;line-height:9.0px;color:#2a2a2a;font-weight:bold;transform:scaleX(0.8200);">Black</div>
<div class="a" style="left:336.2px;top:997.5px;width:54px;height:47px;border-radius:4px 4px 0 0;background:linear-gradient(#a4a4a4,#8c8c8c 20%,#7a7a7a 60%,#5e5e5e);border:1px solid #707070;border-bottom:none"></div>
<div class="a" style="left:339.9px;top:1001.5px;width:47px;height:26.5px;border-radius:3px;background:#735244;box-shadow:inset 1px 1px 2px rgba(0,0,0,0.35)"></div>
<div class="t" style="left:346.1px;top:1032.9px;font-size:9.0px;line-height:9.0px;color:#2a2a2a;font-weight:bold;transform:scaleX(0.8200);">Dark Skin</div>
<div class="a" style="left:392.0px;top:997.5px;width:54px;height:47px;border-radius:4px 4px 0 0;background:linear-gradient(#a4a4a4,#8c8c8c 20%,#7a7a7a 60%,#5e5e5e);border:1px solid #707070;border-bottom:none"></div>
<div class="a" style="left:395.7px;top:1001.5px;width:47px;height:26.5px;border-radius:3px;background:#c29682;box-shadow:inset 1px 1px 2px rgba(0,0,0,0.35)"></div>
<div class="t" style="left:401.2px;top:1032.9px;font-size:9.0px;line-height:9.0px;color:#2a2a2a;font-weight:bold;transform:scaleX(0.8200);">Light Skin</div>
<div class="a" style="left:447.9px;top:997.5px;width:54px;height:47px;border-radius:4px 4px 0 0;background:linear-gradient(#a4a4a4,#8c8c8c 20%,#7a7a7a 60%,#5e5e5e);border:1px solid #707070;border-bottom:none"></div>
<div class="a" style="left:451.6px;top:1001.5px;width:47px;height:26.5px;border-radius:3px;background:#5e7a9e;box-shadow:inset 1px 1px 2px rgba(0,0,0,0.35)"></div>
<div class="t" style="left:459.3px;top:1032.9px;font-size:9.0px;line-height:9.0px;color:#2a2a2a;font-weight:bold;transform:scaleX(0.8200);">Blue Sky</div>
<div class="a" style="left:503.7px;top:997.5px;width:54px;height:47px;border-radius:4px 4px 0 0;background:linear-gradient(#a4a4a4,#8c8c8c 20%,#7a7a7a 60%,#5e5e5e);border:1px solid #707070;border-bottom:none"></div>
<div class="a" style="left:507.4px;top:1001.5px;width:47px;height:26.5px;border-radius:3px;background:#586b42;box-shadow:inset 1px 1px 2px rgba(0,0,0,0.35)"></div>
<div class="t" style="left:517.8px;top:1032.9px;font-size:9.0px;line-height:9.0px;color:#2a2a2a;font-weight:bold;transform:scaleX(0.8200);">Foliage</div>
<div class="a" style="left:559.6px;top:997.5px;width:54px;height:47px;border-radius:4px 4px 0 0;background:linear-gradient(#a4a4a4,#8c8c8c 20%,#7a7a7a 60%,#5e5e5e);border:1px solid #707070;border-bottom:none"></div>
<div class="a" style="left:563.3px;top:1001.5px;width:47px;height:26.5px;border-radius:3px;background:#8480b4;box-shadow:inset 1px 1px 2px rgba(0,0,0,0.35)"></div>
<div class="t" style="left:565.7px;top:1032.9px;font-size:9.0px;line-height:9.0px;color:#2a2a2a;font-weight:bold;transform:scaleX(0.8200);">Blue Flower</div>
<div class="a" style="left:615.5px;top:997.5px;width:54px;height:47px;border-radius:4px 4px 0 0;background:linear-gradient(#a4a4a4,#8c8c8c 20%,#7a7a7a 60%,#5e5e5e);border:1px solid #707070;border-bottom:none"></div>
<div class="a" style="left:619.2px;top:1001.5px;width:47px;height:26.5px;border-radius:3px;background:#62c0aa;box-shadow:inset 1px 1px 2px rgba(0,0,0,0.35)"></div>
<div class="t" style="left:619.5px;top:1032.9px;font-size:9.0px;line-height:9.0px;color:#2a2a2a;font-weight:bold;transform:scaleX(0.8200);">Bluish Green</div>
<div class="a" style="left:671.3px;top:997.5px;width:54px;height:47px;border-radius:4px 4px 0 0;background:linear-gradient(#a4a4a4,#8c8c8c 20%,#7a7a7a 60%,#5e5e5e);border:1px solid #707070;border-bottom:none"></div>
<div class="a" style="left:675.0px;top:1001.5px;width:47px;height:26.5px;border-radius:3px;background:#e07a2c;box-shadow:inset 1px 1px 2px rgba(0,0,0,0.35)"></div>
<div class="t" style="left:685.4px;top:1032.9px;font-size:9.0px;line-height:9.0px;color:#2a2a2a;font-weight:bold;transform:scaleX(0.8200);">Orange</div>
<div class="a" style="left:727.2px;top:997.5px;width:54px;height:47px;border-radius:4px 4px 0 0;background:linear-gradient(#a4a4a4,#8c8c8c 20%,#7a7a7a 60%,#5e5e5e);border:1px solid #707070;border-bottom:none"></div>
<div class="a" style="left:730.9px;top:1001.5px;width:47px;height:26.5px;border-radius:3px;background:#4a5aa8;box-shadow:inset 1px 1px 2px rgba(0,0,0,0.35)"></div>
<div class="t" style="left:730.4px;top:1032.9px;font-size:9.0px;line-height:9.0px;color:#2a2a2a;font-weight:bold;transform:scaleX(0.8200);">Purplish Blue</div>
<div class="a" style="left:783.0px;top:997.5px;width:54px;height:47px;border-radius:4px 4px 0 0;background:linear-gradient(#a4a4a4,#8c8c8c 20%,#7a7a7a 60%,#5e5e5e);border:1px solid #707070;border-bottom:none"></div>
<div class="a" style="left:786.7px;top:1001.5px;width:47px;height:26.5px;border-radius:3px;background:#c45864;box-shadow:inset 1px 1px 2px rgba(0,0,0,0.35)"></div>
<div class="t" style="left:785.6px;top:1032.9px;font-size:9.0px;line-height:9.0px;color:#2a2a2a;font-weight:bold;transform:scaleX(0.8200);">Moderate Red</div>
<div class="a" style="left:838.9px;top:997.5px;width:54px;height:47px;border-radius:4px 4px 0 0;background:linear-gradient(#a4a4a4,#8c8c8c 20%,#7a7a7a 60%,#5e5e5e);border:1px solid #707070;border-bottom:none"></div>
<div class="a" style="left:842.6px;top:1001.5px;width:47px;height:26.5px;border-radius:3px;background:#5e3a6e;box-shadow:inset 1px 1px 2px rgba(0,0,0,0.35)"></div>
<div class="t" style="left:854.4px;top:1032.9px;font-size:9.0px;line-height:9.0px;color:#2a2a2a;font-weight:bold;transform:scaleX(0.8200);">Purple</div>
<div class="a" style="left:894.8px;top:997.5px;width:54px;height:47px;border-radius:4px 4px 0 0;background:linear-gradient(#a4a4a4,#8c8c8c 20%,#7a7a7a 60%,#5e5e5e);border:1px solid #707070;border-bottom:none"></div>
<div class="a" style="left:898.5px;top:1001.5px;width:47px;height:26.5px;border-radius:3px;background:#a0bc40;box-shadow:inset 1px 1px 2px rgba(0,0,0,0.35)"></div>
<div class="t" style="left:898.6px;top:1032.9px;font-size:9.0px;line-height:9.0px;color:#2a2a2a;font-weight:bold;transform:scaleX(0.8200);">Yellow Green</div>
<div class="a" style="left:950.6px;top:997.5px;width:54px;height:47px;border-radius:4px 4px 0 0;background:linear-gradient(#a4a4a4,#8c8c8c 20%,#7a7a7a 60%,#5e5e5e);border:1px solid #707070;border-bottom:none"></div>
<div class="a" style="left:954.3px;top:1001.5px;width:47px;height:26.5px;border-radius:3px;background:#e8a230;box-shadow:inset 1px 1px 2px rgba(0,0,0,0.35)"></div>
<div class="t" style="left:952.3px;top:1032.9px;font-size:9.0px;line-height:9.0px;color:#2a2a2a;font-weight:bold;transform:scaleX(0.8200);">Orange Yellow</div>
<div class="a" style="left:1006.5px;top:997.5px;width:54px;height:47px;border-radius:4px 4px 0 0;background:linear-gradient(#a4a4a4,#8c8c8c 20%,#7a7a7a 60%,#5e5e5e);border:1px solid #707070;border-bottom:none"></div>
<div class="a" style="left:1010.2px;top:1001.5px;width:47px;height:26.5px;border-radius:3px;background:#323ea0;box-shadow:inset 1px 1px 2px rgba(0,0,0,0.35)"></div>
<div class="t" style="left:1025.5px;top:1032.9px;font-size:9.0px;line-height:9.0px;color:#2a2a2a;font-weight:bold;transform:scaleX(0.8200);">Blue</div>
<div class="a" style="left:1062.3px;top:997.5px;width:54px;height:47px;border-radius:4px 4px 0 0;background:linear-gradient(#a4a4a4,#8c8c8c 20%,#7a7a7a 60%,#5e5e5e);border:1px solid #707070;border-bottom:none"></div>
<div class="a" style="left:1066.0px;top:1001.5px;width:47px;height:26.5px;border-radius:3px;background:#489648;box-shadow:inset 1px 1px 2px rgba(0,0,0,0.35)"></div>
<div class="t" style="left:1078.7px;top:1032.9px;font-size:9.0px;line-height:9.0px;color:#2a2a2a;font-weight:bold;transform:scaleX(0.8200);">Green</div>
<div class="a" style="left:1118.2px;top:997.5px;width:54px;height:47px;border-radius:4px 4px 0 0;background:linear-gradient(#a4a4a4,#8c8c8c 20%,#7a7a7a 60%,#5e5e5e);border:1px solid #707070;border-bottom:none"></div>
<div class="a" style="left:1121.9px;top:1001.5px;width:47px;height:26.5px;border-radius:3px;background:#b02a38;box-shadow:inset 1px 1px 2px rgba(0,0,0,0.35)"></div>
<div class="t" style="left:1138.2px;top:1032.9px;font-size:9.0px;line-height:9.0px;color:#2a2a2a;font-weight:bold;transform:scaleX(0.8200);">Red</div>
<div class="a" style="left:1174.1px;top:997.5px;width:54px;height:47px;border-radius:4px 4px 0 0;background:linear-gradient(#a4a4a4,#8c8c8c 20%,#7a7a7a 60%,#5e5e5e);border:1px solid #707070;border-bottom:none"></div>
<div class="a" style="left:1177.8px;top:1001.5px;width:47px;height:26.5px;border-radius:3px;background:#eec820;box-shadow:inset 1px 1px 2px rgba(0,0,0,0.35)"></div>
<div class="t" style="left:1189.6px;top:1032.9px;font-size:9.0px;line-height:9.0px;color:#2a2a2a;font-weight:bold;transform:scaleX(0.8200);">Yellow</div>
<div class="a" style="left:1229.9px;top:997.5px;width:54px;height:47px;border-radius:4px 4px 0 0;background:linear-gradient(#a4a4a4,#8c8c8c 20%,#7a7a7a 60%,#5e5e5e);border:1px solid #707070;border-bottom:none"></div>
<div class="a" style="left:1233.6px;top:1001.5px;width:47px;height:26.5px;border-radius:3px;background:#bc5294;box-shadow:inset 1px 1px 2px rgba(0,0,0,0.35)"></div>
<div class="t" style="left:1242.0px;top:1032.9px;font-size:9.0px;line-height:9.0px;color:#2a2a2a;font-weight:bold;transform:scaleX(0.8200);">Magenta</div>
<div class="a" style="left:1285.8px;top:997.5px;width:54px;height:47px;border-radius:4px 4px 0 0;background:linear-gradient(#a4a4a4,#8c8c8c 20%,#7a7a7a 60%,#5e5e5e);border:1px solid #707070;border-bottom:none"></div>
<div class="a" style="left:1289.5px;top:1001.5px;width:47px;height:26.5px;border-radius:3px;background:#0888aa;box-shadow:inset 1px 1px 2px rgba(0,0,0,0.35)"></div>
<div class="t" style="left:1303.8px;top:1032.9px;font-size:9.0px;line-height:9.0px;color:#2a2a2a;font-weight:bold;transform:scaleX(0.8200);">Cyan</div>
<div class="a" style="left:1341.6px;top:997.5px;width:54px;height:47px;border-radius:4px 4px 0 0;background:linear-gradient(#a4a4a4,#8c8c8c 20%,#7a7a7a 60%,#5e5e5e);border:1px solid #707070;border-bottom:none"></div>
<div class="a" style="left:1345.3px;top:1001.5px;width:47px;height:26.5px;border-radius:3px;background:#ff0000;box-shadow:inset 1px 1px 2px rgba(0,0,0,0.35)"></div>
<div class="t" style="left:1351.2px;top:1032.9px;font-size:9.0px;line-height:9.0px;color:#2a2a2a;font-weight:bold;transform:scaleX(0.8200);">100% Red</div>
<div class="a" style="left:1397.5px;top:997.5px;width:54px;height:47px;border-radius:4px 4px 0 0;background:linear-gradient(#a4a4a4,#8c8c8c 20%,#7a7a7a 60%,#5e5e5e);border:1px solid #707070;border-bottom:none"></div>
<div class="a" style="left:1401.2px;top:1001.5px;width:47px;height:26.5px;border-radius:3px;background:#00ff00;box-shadow:inset 1px 1px 2px rgba(0,0,0,0.35)"></div>
<div class="t" style="left:1403.4px;top:1032.9px;font-size:9.0px;line-height:9.0px;color:#2a2a2a;font-weight:bold;transform:scaleX(0.8200);">100% Green</div>
<div class="a" style="left:1453.4px;top:997.5px;width:54px;height:47px;border-radius:4px 4px 0 0;background:linear-gradient(#a4a4a4,#8c8c8c 20%,#7a7a7a 60%,#5e5e5e);border:1px solid #707070;border-bottom:none"></div>
<div class="a" style="left:1457.1px;top:1001.5px;width:47px;height:26.5px;border-radius:3px;background:#0000ff;box-shadow:inset 1px 1px 2px rgba(0,0,0,0.35)"></div>
<div class="t" style="left:1461.9px;top:1032.9px;font-size:9.0px;line-height:9.0px;color:#2a2a2a;font-weight:bold;transform:scaleX(0.8200);">100% Blue</div>
<div class="a" style="left:1509.2px;top:997.5px;width:54px;height:47px;border-radius:4px 4px 0 0;background:linear-gradient(#a4a4a4,#8c8c8c 20%,#7a7a7a 60%,#5e5e5e);border:1px solid #707070;border-bottom:none"></div>
<div class="a" style="left:1512.9px;top:1001.5px;width:47px;height:26.5px;border-radius:3px;background:#00ffff;box-shadow:inset 1px 1px 2px rgba(0,0,0,0.35)"></div>
<div class="t" style="left:1516.7px;top:1032.9px;font-size:9.0px;line-height:9.0px;color:#2a2a2a;font-weight:bold;transform:scaleX(0.8200);">100% Cyan</div>
<div class="a" style="left:1565.1px;top:997.5px;width:54px;height:47px;border-radius:4px 4px 0 0;background:linear-gradient(#a4a4a4,#8c8c8c 20%,#7a7a7a 60%,#5e5e5e);border:1px solid #707070;border-bottom:none"></div>
<div class="a" style="left:1568.8px;top:1001.5px;width:47px;height:18.0px;border-radius:3px;background:#ff00ff;box-shadow:inset 1px 1px 2px rgba(0,0,0,0.35)"></div>
<div class="t" style="left:1580.1px;top:1023.4px;font-size:9.0px;line-height:9.0px;color:#2a2a2a;font-weight:bold;transform:scaleX(1.0426);">100%</div>
<div class="t" style="left:1573.6px;top:1032.9px;font-size:9.0px;line-height:9.0px;color:#2a2a2a;font-weight:bold;transform:scaleX(1.0135);">Magenta</div>
<div class="a" style="left:1620.9px;top:997.5px;width:54px;height:47px;border-radius:4px 4px 0 0;background:linear-gradient(#262626,#303030);border:1px solid #707070;border-bottom:none"></div>
<div class="a" style="left:1624.6px;top:1001.5px;width:47px;height:26.5px;border-radius:3px;background:#ffff00;box-shadow:inset 1px 1px 2px rgba(0,0,0,0.35)"></div>
<div class="t" style="left:1626.1px;top:1032.9px;font-size:9.0px;line-height:9.0px;color:#ffffff;font-weight:bold;transform:scaleX(0.8200);">100% Yellow</div>
<div class="a" style="left:1678px;top:997.5px;width:35px;height:14px;border-radius:3px 3px 0 0;background:linear-gradient(#aaa,#888);border:1px solid #777"></div>
<div class="a" style="left:1688px;top:999px;width:14px;height:11px;border-radius:50%;background:linear-gradient(#777,#a0a0a0)"></div>
<svg style="left:1691px;top:1002px" width="8" height="5"><path d="M0 5L4 0L8 5Z" fill="#222"/></svg>
<div class="a" style="left:1678px;top:1011px;width:35px;height:33px;background:linear-gradient(#a0a0a0,#707070);border:1px solid #777;border-top:none"></div>
<div class="a" style="left:1684px;top:1015.8px;width:23px;height:22.5px;border-radius:4px;background:linear-gradient(#999,#777);border:2px solid #1a1a1a"></div>
<div class="a" style="left:1690px;top:1021px;width:11px;height:12px;background:#000"></div>
<div class="a" style="left:1715.0px;top:997.5px;width:34.4px;height:22px;background:linear-gradient(#b0b0b0,#8a8a8a);border-right:2px solid #3c3c3c;border-radius:3px 0 0 0"></div>
<div class="a" style="left:1724.2px;top:1001px;width:16px;height:15px;border-radius:50%;background:linear-gradient(#7a7a7a,#a8a8a8)"></div>
<div class="a" style="left:1749.4px;top:997.5px;width:34.4px;height:22px;background:linear-gradient(#b0b0b0,#8a8a8a);border-right:2px solid #3c3c3c;border-radius:0"></div>
<div class="a" style="left:1758.6px;top:1001px;width:16px;height:15px;border-radius:50%;background:linear-gradient(#7a7a7a,#a8a8a8)"></div>
<div class="a" style="left:1783.8px;top:997.5px;width:34.4px;height:22px;background:linear-gradient(#b0b0b0,#8a8a8a);border-right:2px solid #3c3c3c;border-radius:0"></div>
<div class="a" style="left:1793.0px;top:1001px;width:16px;height:15px;border-radius:50%;background:linear-gradient(#7a7a7a,#a8a8a8)"></div>
<div class="a" style="left:1818.2px;top:997.5px;width:34.4px;height:22px;background:linear-gradient(#b0b0b0,#8a8a8a);border-right:2px solid #3c3c3c;border-radius:0"></div>
<div class="a" style="left:1827.4px;top:1001px;width:16px;height:15px;border-radius:50%;background:linear-gradient(#7a7a7a,#a8a8a8)"></div>
<div class="a" style="left:1852.6px;top:997.5px;width:34.4px;height:22px;background:linear-gradient(#3a3a3a,#2e2e2e);border-right:2px solid #222;border-radius:0"></div>
<div class="a" style="left:1861.8px;top:1001px;width:16px;height:15px;border-radius:50%;background:linear-gradient(#2a2a2a,#3a3a3a)"></div>
<div class="a" style="left:1887.0px;top:997.5px;width:34.4px;height:22px;background:linear-gradient(#3a3a3a,#2e2e2e);border-right:2px solid #222;border-radius:0"></div>
<div class="a" style="left:1896.2px;top:1001px;width:16px;height:15px;border-radius:50%;background:linear-gradient(#2a2a2a,#3a3a3a)"></div>
<svg style="left:0;top:0" width="10" height="10"><g transform="translate(1732.2 1008.5)"><rect x="-3" y="-3" width="6" height="6" fill="#2a2a2a"/></g><g transform="translate(1766.6 1008.5)"><path d="M-2.5 -4L4 0L-2.5 4Z" fill="#2a2a2a"/></g><g transform="translate(1801.0 1008.5)"><path d="M-4 -4H-5.5V4H-4M4 -4H5.5V4H4M-2.5 0H2.5" fill="none" stroke="#2a2a2a" stroke-width="1.3"/></g><g transform="translate(1835.4 1008.5)"><path d="M0 0C-2 -3 -5 -3 -5 0C-5 3 -2 3 0 0C2 -3 5 -3 5 0C5 3 2 3 0 0Z" fill="none" stroke="#2a2a2a" stroke-width="1.4"/></g><g transform="translate(1869.8 1008.5)"><path d="M-3.2 0.5A3.3 3.3 0 0 1 2.6 -2.2M3.2 -0.5A3.3 3.3 0 0 1 -2.6 2.2" fill="none" stroke="#151515" stroke-width="1.5"/><path d="M1.2 -3.8L3.6 -2.2L1.6 -0.6Z M-1.2 3.8L-3.6 2.2L-1.6 0.6Z" fill="#151515"/></g><g transform="translate(1904.2 1008.5)"></g></svg>
<div class="a" style="left:1715px;top:1020.5px;width:102px;height:24px;border-radius:4px 0 0 0;background:linear-gradient(#b4b4b4,#8e8e8e);border-right:1px solid #777"></div>
<div class="a" style="left:1817px;top:1020.5px;width:93px;height:24px;border-radius:0 4px 0 0;background:linear-gradient(#b4b4b4,#8e8e8e)"></div>
<div class="a" style="left:1910px;top:1020px;width:10px;height:24px;background:#2c2c2c"></div>
<div class="a" style="left:1730px;top:1024.5px;width:15px;height:15px;border-radius:50%;background:linear-gradient(#888,#b0b0b0)"></div>
<div class="a" style="left:1890px;top:1024.5px;width:15px;height:15px;border-radius:50%;background:linear-gradient(#888,#b0b0b0)"></div>
<svg style="left:1732px;top:1028px" width="12" height="10"><path d="M5 0.5L1 4.5L5 8.5M9 0.5L5 4.5L9 8.5" fill="none" stroke="#2a2a2a" stroke-width="1.3"/></svg>
<svg style="left:1892px;top:1028px" width="12" height="10"><path d="M2 0.5L6 4.5L2 8.5M6 0.5L10 4.5L6 8.5" fill="none" stroke="#2a2a2a" stroke-width="1.3"/></svg>
<div class="t" style="left:1757.5px;top:1023.1px;font-size:17.5px;line-height:17.5px;color:#2a2a2a;transform:scaleX(0.9639);-webkit-text-stroke:0.3px #2a2a2a">Back</div>
<div class="t" style="left:1837.5px;top:1023.1px;font-size:17.5px;line-height:17.5px;color:#2a2a2a;transform:scaleX(1.0644);-webkit-text-stroke:0.3px #2a2a2a">Next</div>
</body></html>
